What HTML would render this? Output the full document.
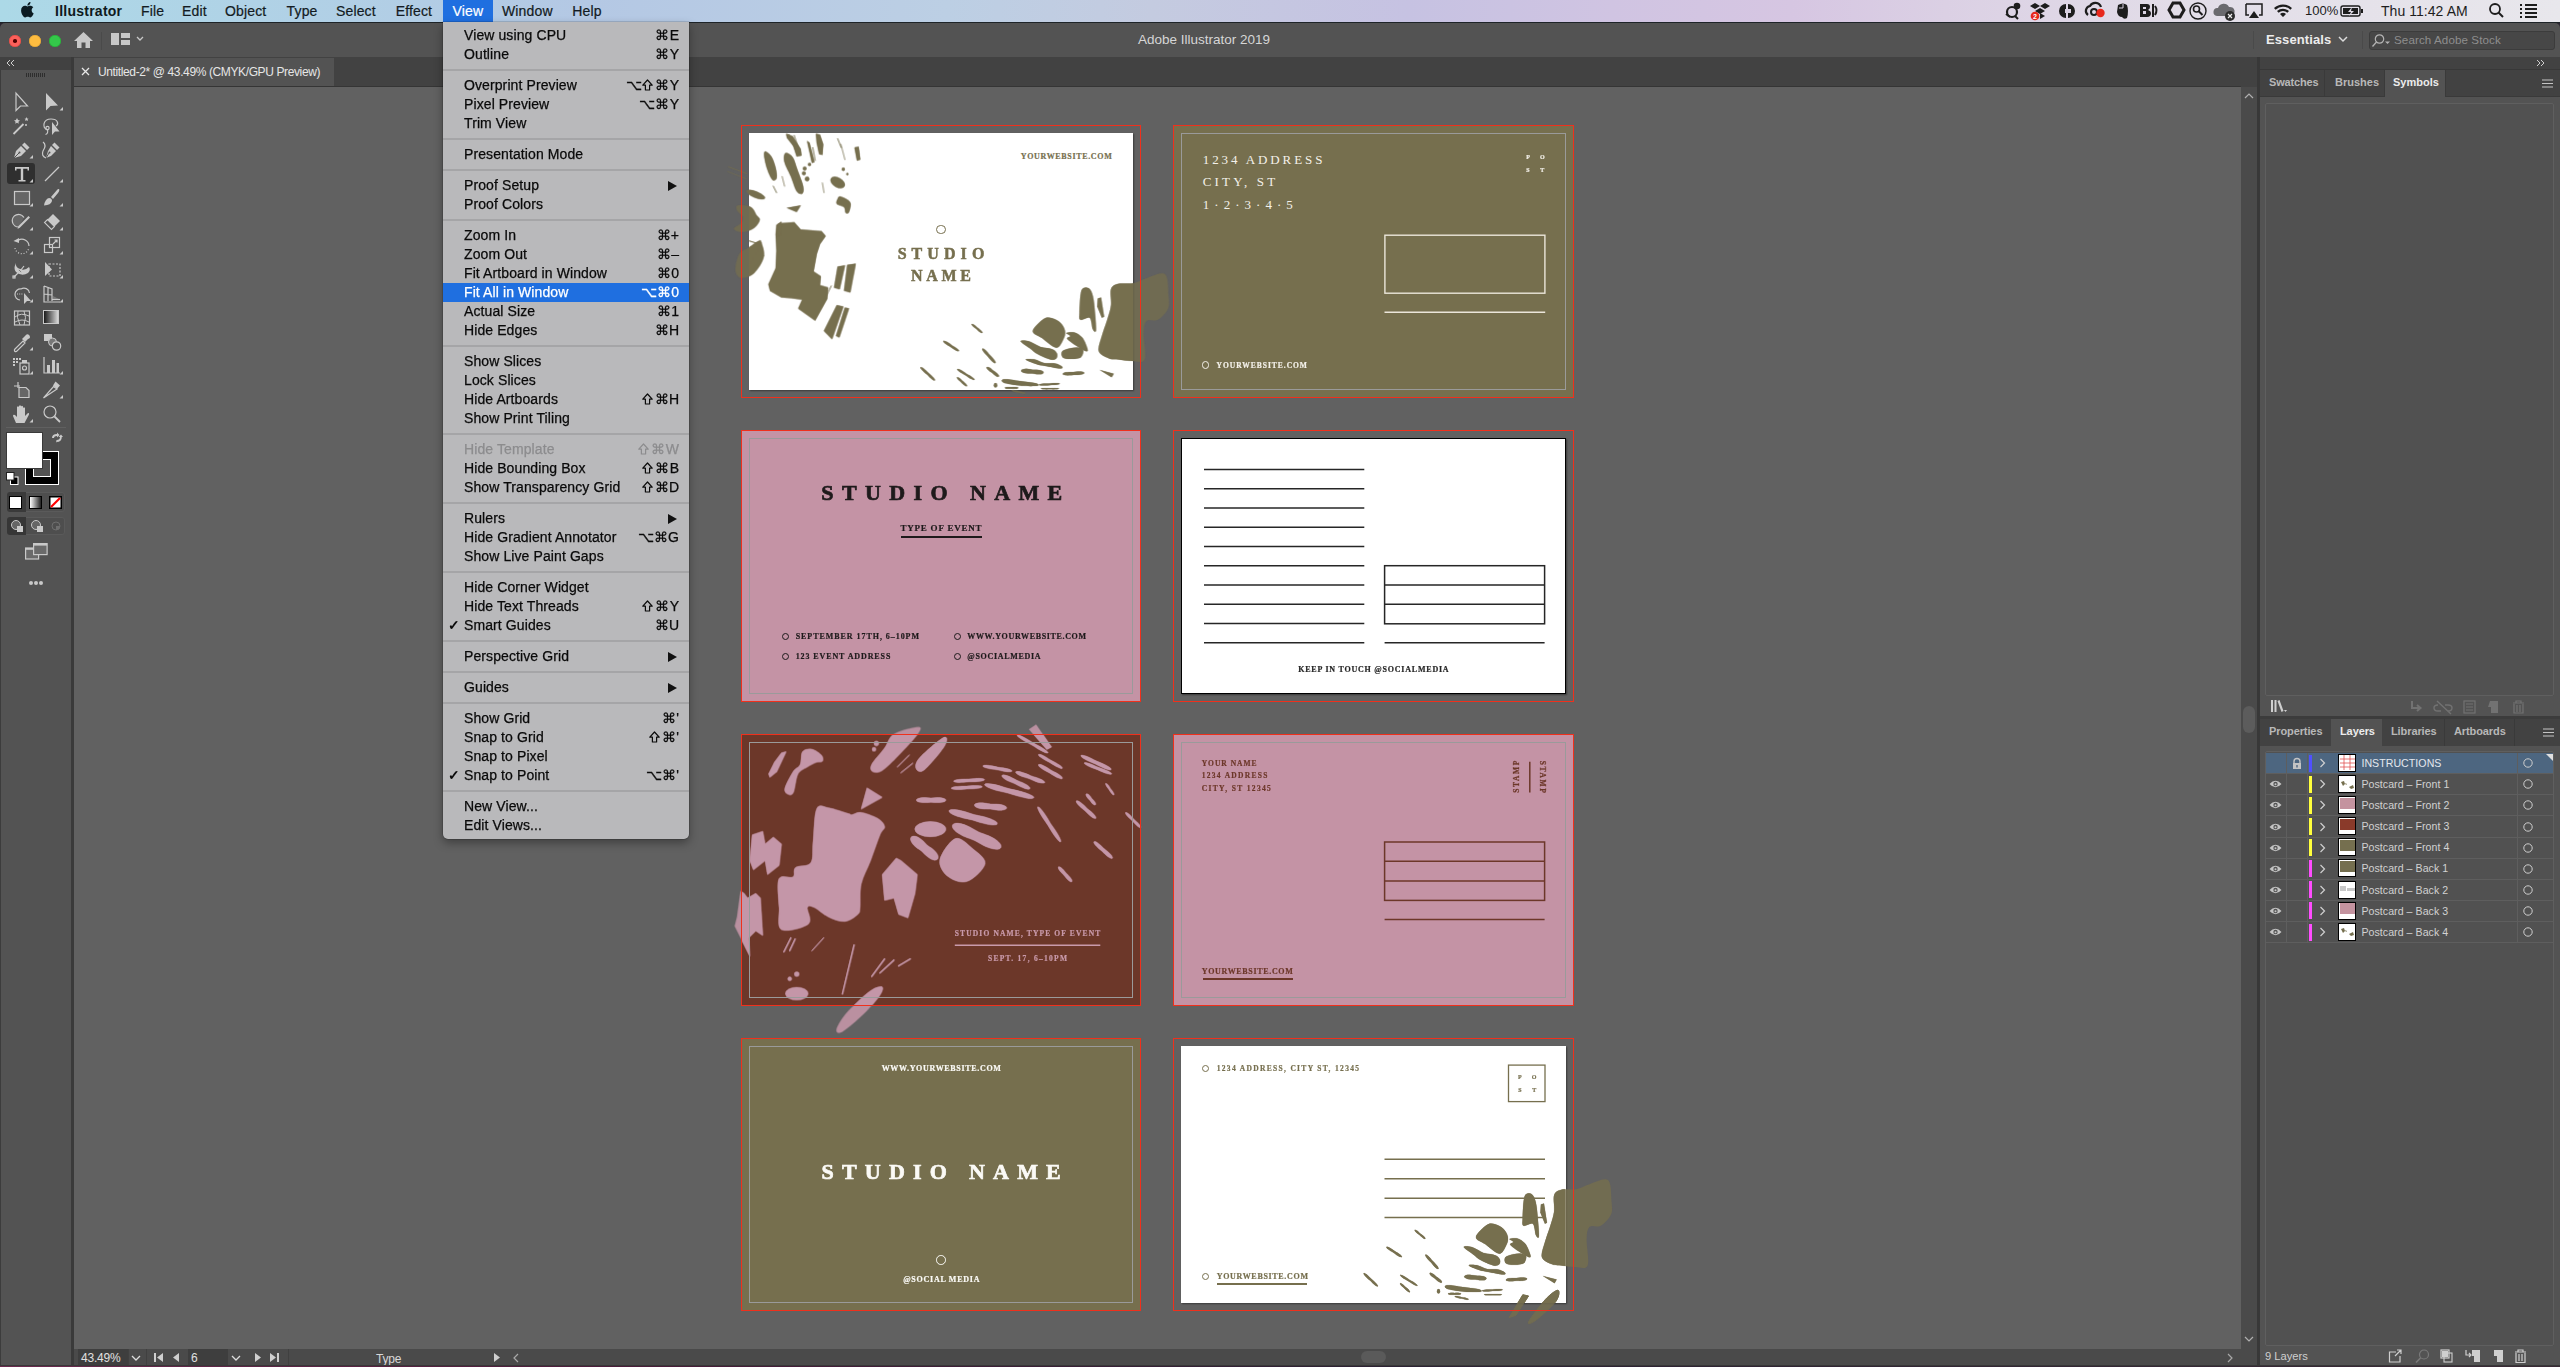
<!DOCTYPE html>
<html><head><meta charset="utf-8">
<style>
*{box-sizing:border-box;margin:0;padding:0}
html,body{width:2560px;height:1367px;overflow:hidden}
body{position:relative;background:#2b2530;font-family:"Liberation Sans",sans-serif;}
.a{position:absolute}
.t{position:absolute;white-space:nowrap}
svg{position:absolute;overflow:visible}
</style></head><body>
<div class="a" style="left:0px;top:22px;width:2560px;height:1px;background:#1e2428;"></div>
<div class="a" style="left:0px;top:23px;width:2560px;height:34px;background:#535353;border-radius:5px 5px 0 0;"></div>
<div class="a" style="left:9px;top:35px;width:12px;height:12px;background:#fc605b;border-radius:50%;box-shadow:inset 0 0 0 0.6px #de4a44;"></div>
<div class="a" style="left:29px;top:35px;width:12px;height:12px;background:#fdbc40;border-radius:50%;box-shadow:inset 0 0 0 0.6px #dea236;"></div>
<div class="a" style="left:49px;top:35px;width:12px;height:12px;background:#34c84a;border-radius:50%;box-shadow:inset 0 0 0 0.6px #27aa36;"></div>
<div class="a" style="left:13.2px;top:39.2px;width:3.6px;height:3.6px;background:#4d0000;border-radius:50%;"></div>
<svg style="left:74px;top:32px" width="19" height="16" viewBox="0 0 19 16"><path d="M9.5 0 L19 9 H16 V16 H11.5 V10.5 H7.5 V16 H3 V9 H0z" fill="#c8c8c8"/></svg>
<div class="a" style="left:101px;top:32px;width:1px;height:18px;background:#4a4a4a;"></div>
<svg style="left:111px;top:33px" width="36" height="14" viewBox="0 0 36 14"><rect x="0" y="0" width="8" height="12" fill="#c8c8c8"/><rect x="10" y="0" width="9" height="5" fill="#c8c8c8"/><rect x="10" y="7" width="9" height="5" fill="#c8c8c8"/><path d="M26 4 l3 3 3-3" fill="none" stroke="#c8c8c8" stroke-width="1.3"/></svg>
<div class="t" style="left:204.00px;width:2000px;text-align:center;top:32.98px;font-size:13.5px;line-height:13.5px;color:#d6d6d6;font-family:'Liberation Sans',sans-serif;font-weight:400;letter-spacing:0px;">Adobe Illustrator 2019</div>
<div class="a" style="left:2253px;top:31px;width:1px;height:18px;background:#4a4a4a;"></div>
<div class="t" style="left:2266px;top:32.74px;font-size:13px;line-height:13px;color:#ececec;font-family:'Liberation Sans',sans-serif;font-weight:700;letter-spacing:0.1px;">Essentials</div>
<svg style="left:2338px;top:36px" width="10" height="7" viewBox="0 0 10 7"><path d="M1 1 l4 4 4-4" fill="none" stroke="#dcdcdc" stroke-width="1.5"/></svg>
<div class="a" style="left:2362px;top:31px;width:1px;height:18px;background:#4a4a4a;"></div>
<div class="a" style="left:2369px;top:31px;width:186px;height:19px;background:#474747;border:1px solid #3c3c3c;border-radius:3px;"></div>
<svg style="left:2371px;top:33px" width="20" height="16" viewBox="0 0 20 16"><circle cx="8.5" cy="6" r="4.2" fill="none" stroke="#b4b4b4" stroke-width="1.2"/><path d="M5.5 9 L1.5 13.5" stroke="#b4b4b4" stroke-width="1.3"/><path d="M14 8.5 h5 l-2.5 2.5z" fill="#b4b4b4"/></svg>
<div class="t" style="left:2394px;top:34.47px;font-size:11.6px;line-height:11.6px;color:#8e8e8e;font-family:'Liberation Sans',sans-serif;font-weight:400;letter-spacing:0.1px;">Search Adobe Stock</div>
<div class="a" style="left:74px;top:57px;width:2183px;height:30px;background:#424242;"></div>
<div class="a" style="left:74px;top:86px;width:2167px;height:1px;background:#353535;"></div>
<div class="a" style="left:74px;top:58px;width:260px;height:28px;background:#535353;"></div>
<svg style="left:81px;top:67px" width="9" height="9" viewBox="0 0 9 9"><path d="M1 1 L8 8 M8 1 L1 8" stroke="#e8e8e8" stroke-width="1.3"/></svg>
<div class="t" style="left:98px;top:65.76px;font-size:12px;line-height:12px;color:#e6e6e6;font-family:'Liberation Sans',sans-serif;font-weight:400;letter-spacing:-0.38px;">Untitled-2* @ 43.49% (CMYK/GPU Preview)</div>
<div class="a" style="left:74px;top:87px;width:2167px;height:1262px;background:#616161;"></div>
<div class="a" style="left:2241px;top:87px;width:16px;height:1262px;background:#4a4a4a;"></div>
<svg style="left:2244px;top:92px" width="10" height="7" viewBox="0 0 10 7"><path d="M1 6 l4-4 4 4" fill="none" stroke="#b0b0b0" stroke-width="1.2"/></svg>
<svg style="left:2244px;top:1336px" width="10" height="7" viewBox="0 0 10 7"><path d="M1 1 l4 4 4-4" fill="none" stroke="#b0b0b0" stroke-width="1.2"/></svg>
<div class="a" style="left:2243px;top:706px;width:12px;height:27px;background:#5c5c5c;border-radius:6px;"></div>
<div class="a" style="left:2257px;top:57px;width:3px;height:1308px;background:#383838;"></div>
<div class="a" style="left:74px;top:1349px;width:2183px;height:16px;background:#4a4a4a;"></div>
<div class="a" style="left:78px;top:1349px;width:50px;height:16px;background:#3e3e3e;"></div>
<div class="t" style="left:81px;top:1352.00px;font-size:12px;line-height:12px;color:#e0e0e0;font-family:'Liberation Sans',sans-serif;font-weight:400;letter-spacing:-0.2px;">43.49%</div>
<svg style="left:131px;top:1355px" width="10" height="7" viewBox="0 0 10 7"><path d="M1 1 l4 4 4-4" fill="none" stroke="#dcdcdc" stroke-width="1.3"/></svg>
<div class="a" style="left:128px;top:1349px;width:1px;height:16px;background:#404040;"></div>
<div class="a" style="left:146px;top:1349px;width:1px;height:16px;background:#404040;"></div>
<svg style="left:154px;top:1353px" width="30" height="10" viewBox="0 0 30 10"><rect x="0" y="0" width="2" height="9" fill="#cfcfcf"/><path d="M9 0 v9 l-6-4.5z" fill="#cfcfcf"/><path d="M25 0 v9 l-6-4.5z" fill="#cfcfcf"/></svg>
<div class="a" style="left:188px;top:1349px;width:40px;height:16px;background:#3e3e3e;"></div>
<div class="t" style="left:191px;top:1352.00px;font-size:12px;line-height:12px;color:#e0e0e0;font-family:'Liberation Sans',sans-serif;font-weight:400;letter-spacing:0px;">6</div>
<svg style="left:231px;top:1355px" width="10" height="7" viewBox="0 0 10 7"><path d="M1 1 l4 4 4-4" fill="none" stroke="#dcdcdc" stroke-width="1.3"/></svg>
<svg style="left:255px;top:1353px" width="30" height="10" viewBox="0 0 30 10"><path d="M0 0 v9 l6-4.5z" fill="#cfcfcf"/><path d="M15 0 v9 l6-4.5z" fill="#cfcfcf"/><rect x="22" y="0" width="2" height="9" fill="#cfcfcf"/></svg>
<div class="a" style="left:288px;top:1349px;width:1px;height:16px;background:#404040;"></div>
<div class="t" style="left:376px;top:1352.50px;font-size:12px;line-height:12px;color:#d8d8d8;font-family:'Liberation Sans',sans-serif;font-weight:400;letter-spacing:-0.2px;">Type</div>
<svg style="left:494px;top:1353px" width="8" height="10" viewBox="0 0 8 10"><path d="M0 0 v9 l6-4.5z" fill="#cfcfcf"/></svg>
<svg style="left:512px;top:1353px" width="8" height="10" viewBox="0 0 8 10"><path d="M6 1 L2 5 L6 9" fill="none" stroke="#a8a8a8" stroke-width="1.2"/></svg>
<div class="a" style="left:1361px;top:1351px;width:25px;height:12px;background:#5a5a5a;border-radius:6px;"></div>
<svg style="left:2226px;top:1353px" width="8" height="10" viewBox="0 0 8 10"><path d="M2 1 L6 5 L2 9" fill="none" stroke="#a8a8a8" stroke-width="1.2"/></svg>
<div class="a" style="left:0px;top:1365px;width:2560px;height:1px;background:#383838;"></div>
<div class="a" style="left:0px;top:1366px;width:2560px;height:1px;background:linear-gradient(90deg,#6a2a4e 0%,#4a1c3a 25%,#2c2234 55%,#3a2a36 100%);"></div>
<div class="a" style="left:74px;top:87px;width:2167px;height:1262px;overflow:hidden">
<div class="a" style="left:-74px;top:-87px;width:2560px;height:1367px">

<div class="a" style="left:749px;top:133px;width:384px;height:257px;background:#fff;box-shadow:1px 1px 1.5px rgba(0,0,0,.4);"></div>
<div class="a" style="left:1173px;top:125px;width:401px;height:273px;background:#766f4e;"></div>
<div class="a" style="left:741px;top:430px;width:400px;height:272px;background:#c493a5;"></div>
<div class="a" style="left:1181px;top:438px;width:385px;height:256px;background:#fff;box-shadow:1px 1px 1.5px rgba(0,0,0,.4);border:1.6px solid #000;"></div>
<div class="a" style="left:741px;top:734px;width:400px;height:272px;background:#6c3729;"></div>
<div class="a" style="left:1173px;top:734px;width:401px;height:272px;background:#c493a5;"></div>
<div class="a" style="left:741px;top:1038px;width:400px;height:273px;background:#766f4e;"></div>
<div class="a" style="left:1181px;top:1046px;width:385px;height:257px;background:#fff;box-shadow:1px 1px 1.5px rgba(0,0,0,.4);"></div>
<svg class="a" style="left:0;top:0" width="2560" height="1367" viewBox="0 0 2560 1367">
<defs><clipPath id="cp1"><rect x="749" y="133" width="384" height="257"/></clipPath>
<clipPath id="cp8"><rect x="1181" y="1046" width="384" height="257"/></clipPath>
<clipPath id="cp5"><rect x="741" y="734" width="400" height="272"/></clipPath></defs>
<g opacity="0.75"><g transform="translate(725,125) scale(0.160966)" fill="#766f4e" stroke="#766f4e" ><path d="M320,620 L345,610 L430,605 L470,650 L600,660 L625,690 L590,740 L570,800 L550,910 L595,940 L590,995 L640,1010 L635,1080 L560,1215 L455,1140 L480,1085 L410,1075 L350,1070 L280,1030 L270,990 L315,890 L320,780 L315,680Z"/><path d="M250,165 C257.5,165.0 279.2,182.5 290,200 C300.8,217.5 310.0,248.3 315,270 C320.0,291.7 323.3,318.3 320,330 C316.7,341.7 304.2,348.3 295,340 C285.8,331.7 273.3,303.3 265,280 C256.7,256.7 247.5,219.2 245,200 C242.5,180.8 242.5,165.0 250,165Z"/><path d="M375,175 C383.3,170.0 407.5,182.5 420,200 C432.5,217.5 439.2,250.0 450,280 C460.8,310.0 480.0,355.8 485,380 C490.0,404.2 486.7,420.0 480,425 C473.3,430.0 456.7,427.5 445,410 C433.3,392.5 422.5,350.0 410,320 C397.5,290.0 375.8,254.2 370,230 C364.2,205.8 366.7,180.0 375,175Z"/><path d="M380,55 L420,70 L470,150 L475,190 L445,195 L425,130 L385,80Z"/><path d="M565,55 L590,60 L610,120 L605,185 L585,180 L570,110Z"/><path d="M510,100 L525,110 L555,230 L540,235Z"/><path d="M805,140 L830,135 L840,215 L820,220Z"/><circle cx="495" cy="270" r="11"/><circle cx="490" cy="300" r="11"/><circle cx="510" cy="335" r="13"/><circle cx="525" cy="245" r="9"/><circle cx="735" cy="275" r="9"/><circle cx="760" cy="305" r="6"/><ellipse cx="700" cy="357" rx="48" ry="29" transform="rotate(30 700 357)"/><path d="M715,445 C725.0,445.8 749.2,457.5 760,465 C770.8,472.5 778.3,477.5 780,490 C781.7,502.5 775.0,530.8 770,540 C765.0,549.2 755.0,550.0 750,545 C745.0,540.0 749.2,519.2 740,510 C730.8,500.8 701.7,498.3 695,490 C688.3,481.7 696.7,467.5 700,460 C703.3,452.5 705.0,444.2 715,445Z"/><ellipse cx="190" cy="432" rx="62" ry="19" transform="rotate(22 190 432)"/><path d="M80,500 C94.2,496.7 140.8,500.0 160,510 C179.2,520.0 185.8,546.7 195,560 C204.2,573.3 217.5,576.7 215,590 C212.5,603.3 197.5,627.5 180,640 C162.5,652.5 130.8,664.2 110,665 C89.2,665.8 56.7,654.2 55,645 C53.3,635.8 90.8,622.5 100,610 C109.2,597.5 114.2,583.3 110,570 C105.8,556.7 80.0,541.7 75,530 C70.0,518.3 65.8,503.3 80,500Z"/><path d="M150,760 C170.0,746.7 197.5,725.0 210,720 C222.5,715.0 220.0,713.3 225,730 C230.0,746.7 247.5,788.3 240,820 C232.5,851.7 203.3,898.3 180,920 C156.7,941.7 119.2,953.3 100,950 C80.8,946.7 66.7,925.0 65,900 C63.3,875.0 75.8,823.3 90,800 C104.2,776.7 130.0,773.3 150,760Z"/><path d="M22,260 L135,302" stroke-width="6" stroke-linecap="round" fill="none"/><path d="M18,290 L130,333" stroke-width="5" stroke-linecap="round" fill="none"/><path d="M700,880 L745,872 L712,1020 L678,1010Z"/><path d="M760,870 L812,862 L778,1040 L740,1030Z"/><path d="M695,1120 L735,1128 L665,1330 L615,1280Z"/><path d="M745,1135 L770,1140 L710,1320 L690,1310Z"/><path d="M385,515 L470,500 L445,540Z"/><path d="M330,615 L350,600 L345,680 L325,690Z"/><path d="M395,60 L455,185" stroke-width="5" stroke-linecap="round" fill="none"/><path d="M430,65 L465,175" stroke-width="4" stroke-linecap="round" fill="none"/><path d="M700,85 L722,140" stroke-width="4" stroke-linecap="round" fill="none"/><path d="M720,120 L745,215" stroke-width="3" stroke-linecap="round" fill="none"/><path d="M545,140 L560,220" stroke-width="4" stroke-linecap="round" fill="none"/><path d="M150,720 L215,740" stroke-width="5" stroke-linecap="round" fill="none"/><path d="M150,870 L225,735" stroke-width="5" stroke-linecap="round" fill="none"/><path d="M165,905 L240,810" stroke-width="4" stroke-linecap="round" fill="none"/><path d="M600,1120 L660,1000" stroke-width="4" stroke-linecap="round" fill="none"/><path d="M300,380 L320,420" stroke-width="4" stroke-linecap="round" fill="none"/><path d="M355,320 L370,380" stroke-width="3" stroke-linecap="round" fill="none"/><path d="M605,360 L615,420" stroke-width="3" stroke-linecap="round" fill="none"/></g><g transform="translate(910,270) scale(0.101564)" fill="#766f4e" stroke="#766f4e" ><path d="M1210,600 C1213.3,568.3 1288.3,500.8 1320,480 C1351.7,459.2 1373.3,468.3 1400,475 C1426.7,481.7 1459.2,499.2 1480,520 C1500.8,540.8 1520.0,573.3 1525,600 C1530.0,626.7 1524.2,652.5 1510,680 C1495.8,707.5 1475.0,766.7 1440,765 C1405.0,763.3 1338.3,697.5 1300,670 C1261.7,642.5 1206.7,631.7 1210,600Z"/><path d="M1540,620 C1546.7,614.2 1595.0,608.3 1620,615 C1645.0,621.7 1671.7,640.8 1690,660 C1708.3,679.2 1720.8,706.7 1730,730 C1739.2,753.3 1756.7,795.0 1745,800 C1733.3,805.0 1692.5,780.0 1660,760 C1627.5,740.0 1563.3,698.3 1550,680 C1536.7,661.7 1581.7,660.0 1580,650 C1578.3,640.0 1533.3,625.8 1540,620Z"/><path d="M1500,800 C1512.5,785.0 1553.3,775.8 1580,770 C1606.7,764.2 1639.2,761.7 1660,765 C1680.8,768.3 1701.7,774.2 1705,790 C1708.3,805.8 1700.8,845.8 1680,860 C1659.2,874.2 1609.2,875.0 1580,875 C1550.8,875.0 1518.3,872.5 1505,860 C1491.7,847.5 1487.5,815.0 1500,800Z"/><path d="M1090,700 C1088.3,688.3 1141.7,692.5 1170,700 C1198.3,707.5 1238.3,735.0 1260,745 C1281.7,755.0 1276.7,754.2 1300,760 C1323.3,765.8 1375.8,770.0 1400,780 C1424.2,790.0 1438.3,805.0 1445,820 C1451.7,835.0 1450.8,860.0 1440,870 C1429.2,880.0 1410.0,886.7 1380,880 C1350.0,873.3 1293.3,848.3 1260,830 C1226.7,811.7 1208.3,791.7 1180,770 C1151.7,748.3 1091.7,711.7 1090,700Z"/><path d="M1140,880 C1138.3,872.5 1200.0,874.2 1230,880 C1260.0,885.8 1286.7,908.3 1320,915 C1353.3,921.7 1400.8,914.2 1430,920 C1459.2,925.8 1486.7,941.7 1495,950 C1503.3,958.3 1507.5,970.8 1480,970 C1452.5,969.2 1370.0,952.5 1330,945 C1290.0,937.5 1271.7,935.8 1240,925 C1208.3,914.2 1141.7,887.5 1140,880Z"/><path d="M1314.6,1009.6 C1314.2,1013.6 1310.8,1017.9 1305.2,1020.7 C1299.6,1023.6 1290.7,1025.9 1280.7,1026.7 C1270.7,1027.5 1257.9,1027.1 1245.0,1025.8 C1232.1,1024.5 1217.3,1020.3 1203.3,1019.1 C1189.3,1017.9 1174.0,1019.5 1161.1,1018.5 C1148.2,1017.5 1135.5,1015.7 1125.8,1013.1 C1116.1,1010.5 1107.8,1006.8 1102.7,1003.0 C1097.6,999.2 1095.1,994.4 1095.4,990.4 C1095.8,986.4 1099.2,982.1 1104.8,979.3 C1110.4,976.4 1119.3,974.1 1129.3,973.3 C1139.3,972.4 1152.1,972.9 1165.0,974.2 C1177.9,975.5 1192.7,979.7 1206.7,980.9 C1220.7,982.1 1236.0,980.5 1248.9,981.5 C1261.8,982.5 1274.5,984.3 1284.2,986.9 C1293.9,989.5 1302.2,993.2 1307.3,997.0 C1312.4,1000.8 1314.9,1005.6 1314.6,1009.6Z"/><path d="M1714.9,1012.5 C1715.1,1015.5 1712.3,1019.0 1707.3,1021.8 C1702.3,1024.6 1694.3,1027.3 1684.9,1029.1 C1675.5,1030.9 1663.3,1032.0 1651.0,1032.6 C1638.7,1033.1 1624.2,1031.7 1610.8,1032.4 C1597.4,1033.1 1583.1,1036.1 1570.7,1036.8 C1558.3,1037.5 1546.1,1037.6 1536.6,1036.8 C1527.1,1036.0 1518.8,1034.2 1513.6,1032.0 C1508.3,1029.8 1505.2,1026.5 1505.1,1023.5 C1504.9,1020.5 1507.7,1017.0 1512.7,1014.2 C1517.7,1011.4 1525.7,1008.7 1535.1,1006.9 C1544.5,1005.1 1556.7,1003.9 1569.0,1003.4 C1581.3,1002.9 1595.8,1004.3 1609.2,1003.6 C1622.6,1002.9 1636.9,999.9 1649.3,999.2 C1661.7,998.5 1673.9,998.4 1683.4,999.2 C1692.9,1000.0 1701.2,1001.8 1706.4,1004.0 C1711.7,1006.2 1714.8,1009.5 1714.9,1012.5Z"/><path d="M905,1085 C906.7,1078.3 917.5,1073.3 950,1075 C982.5,1076.7 1051.7,1088.3 1100,1095 C1148.3,1101.7 1214.2,1107.5 1240,1115 C1265.8,1122.5 1278.3,1135.8 1255,1140 C1231.7,1144.2 1152.5,1144.2 1100,1140 C1047.5,1135.8 972.5,1124.2 940,1115 C907.5,1105.8 903.3,1091.7 905,1085Z"/><path d="M1473.9,1119.7 C1474.0,1121.4 1471.3,1123.6 1466.4,1125.3 C1461.5,1127.0 1453.7,1128.8 1444.5,1130.0 C1435.3,1131.2 1423.5,1132.1 1411.5,1132.7 C1399.5,1133.3 1385.4,1132.7 1372.4,1133.4 C1359.4,1134.1 1345.5,1136.1 1333.5,1136.8 C1321.5,1137.5 1309.6,1137.8 1300.4,1137.5 C1291.2,1137.2 1283.2,1136.3 1278.2,1135.1 C1273.2,1133.9 1270.2,1132.0 1270.1,1130.3 C1270.0,1128.6 1272.7,1126.4 1277.6,1124.7 C1282.5,1123.0 1290.3,1121.2 1299.5,1120.0 C1308.7,1118.8 1320.5,1117.9 1332.5,1117.3 C1344.5,1116.7 1358.6,1117.3 1371.6,1116.6 C1384.6,1115.9 1398.5,1113.9 1410.5,1113.2 C1422.5,1112.5 1434.4,1112.2 1443.6,1112.5 C1452.8,1112.8 1460.8,1113.7 1465.8,1114.9 C1470.8,1116.1 1473.8,1118.0 1473.9,1119.7Z"/><path d="M1065.0,1160.0 C1065.0,1161.7 1063.3,1163.8 1060.1,1165.2 C1056.9,1166.7 1051.9,1168.0 1046.0,1168.7 C1040.1,1169.5 1032.6,1169.8 1024.9,1169.7 C1017.2,1169.7 1008.3,1168.4 1000.0,1168.4 C991.7,1168.4 982.8,1169.7 975.1,1169.7 C967.4,1169.8 959.9,1169.5 954.0,1168.7 C948.1,1168.0 943.1,1166.7 939.9,1165.2 C936.7,1163.8 935.0,1161.7 935.0,1160.0 C935.0,1158.3 936.7,1156.2 939.9,1154.8 C943.1,1153.3 948.1,1152.0 954.0,1151.3 C959.9,1150.5 967.4,1150.2 975.1,1150.3 C982.8,1150.3 991.7,1151.6 1000.0,1151.6 C1008.3,1151.6 1017.2,1150.3 1024.9,1150.3 C1032.6,1150.2 1040.1,1150.5 1046.0,1151.3 C1051.9,1152.0 1056.9,1153.3 1060.1,1154.8 C1063.3,1156.2 1065.0,1158.3 1065.0,1160.0Z"/><path d="M1466.0,1168.0 C1466.0,1169.2 1463.6,1170.7 1459.3,1171.7 C1455.0,1172.7 1448.1,1173.7 1440.2,1174.2 C1432.3,1174.8 1422.1,1175.0 1411.7,1175.0 C1401.3,1175.0 1389.2,1174.0 1378.0,1174.0 C1366.8,1174.0 1354.7,1175.0 1344.3,1175.0 C1333.9,1175.0 1323.7,1174.8 1315.8,1174.2 C1307.9,1173.7 1301.0,1172.7 1296.7,1171.7 C1292.4,1170.7 1290.0,1169.2 1290.0,1168.0 C1290.0,1166.8 1292.4,1165.3 1296.7,1164.3 C1301.0,1163.3 1307.9,1162.3 1315.8,1161.8 C1323.7,1161.2 1333.9,1161.0 1344.3,1161.0 C1354.7,1161.0 1366.8,1162.0 1378.0,1162.0 C1389.2,1162.0 1401.3,1161.0 1411.7,1161.0 C1422.1,1161.0 1432.3,1161.2 1440.2,1161.8 C1448.1,1162.3 1455.0,1163.3 1459.3,1164.3 C1463.6,1165.3 1466.0,1166.8 1466.0,1168.0Z"/><path d="M712.1,618.7 C711.0,620.0 708.3,620.4 704.8,619.4 C701.3,618.4 696.4,616.0 691.2,612.6 C686.0,609.2 679.8,604.4 673.7,599.2 C667.6,594.0 661.2,587.0 654.6,581.4 C648.0,575.8 640.0,570.8 633.8,565.7 C627.6,560.6 621.7,555.3 617.5,550.8 C613.3,546.3 610.1,541.9 608.5,538.6 C606.9,535.4 606.8,532.6 607.9,531.3 C609.0,530.0 611.7,529.6 615.2,530.6 C618.7,531.6 623.6,534.0 628.8,537.4 C634.0,540.8 640.2,545.6 646.3,550.8 C652.4,556.0 658.8,563.0 665.4,568.6 C672.0,574.2 680.0,579.2 686.2,584.3 C692.4,589.4 698.3,594.7 702.5,599.2 C706.7,603.7 709.9,608.1 711.5,611.4 C713.1,614.6 713.2,617.4 712.1,618.7Z"/><path d="M480.5,797.0 C479.4,798.8 475.9,799.5 471.3,798.6 C466.7,797.7 459.9,795.2 452.6,791.6 C445.3,788.0 436.3,782.5 427.4,776.7 C418.5,770.9 409.0,762.9 399.4,756.6 C389.8,750.4 378.6,744.9 369.7,739.2 C360.8,733.5 352.1,727.4 345.8,722.2 C339.5,717.0 334.5,711.9 331.8,708.0 C329.1,704.1 328.4,700.8 329.5,699.0 C330.6,697.2 334.1,696.5 338.7,697.4 C343.3,698.3 350.1,700.8 357.4,704.4 C364.7,708.0 373.7,713.5 382.6,719.3 C391.5,725.1 401.0,733.1 410.6,739.4 C420.2,745.6 431.4,751.1 440.3,756.8 C449.2,762.5 457.9,768.6 464.2,773.8 C470.5,779.0 475.5,784.1 478.2,788.0 C480.9,791.9 481.6,795.2 480.5,797.0Z"/><path d="M840.6,915.6 C838.9,917.2 835.1,917.0 830.5,914.9 C825.9,912.8 819.6,908.6 813.1,902.9 C806.6,897.2 798.9,889.3 791.5,880.9 C784.1,872.5 776.6,861.6 768.5,852.6 C760.4,843.6 750.4,835.1 742.9,826.8 C735.4,818.5 728.2,810.0 723.2,803.0 C718.2,796.0 714.6,789.3 713.0,784.5 C711.4,779.7 711.6,776.0 713.4,774.4 C715.1,772.8 718.9,773.0 723.5,775.1 C728.1,777.2 734.4,781.4 740.9,787.1 C747.4,792.8 755.1,800.7 762.5,809.1 C769.9,817.5 777.4,828.4 785.5,837.4 C793.6,846.4 803.6,854.9 811.1,863.2 C818.6,871.5 825.8,880.0 830.8,887.0 C835.8,894.0 839.4,900.7 841.0,905.5 C842.6,910.3 842.4,914.0 840.6,915.6Z"/><path d="M874.1,1048.2 C872.6,1050.2 869.2,1051.1 865.0,1050.5 C860.8,1049.9 855.1,1047.8 849.1,1044.5 C843.1,1041.2 835.9,1036.1 829.0,1030.6 C822.1,1025.1 815.1,1017.4 807.6,1011.5 C800.1,1005.6 790.8,1000.7 783.8,995.3 C776.8,989.9 770.2,984.2 765.5,979.2 C760.8,974.2 757.4,969.1 755.8,965.2 C754.2,961.3 754.4,957.8 755.9,955.8 C757.4,953.8 760.8,952.9 765.0,953.5 C769.2,954.1 774.9,956.2 780.9,959.5 C786.9,962.8 794.1,967.9 801.0,973.4 C807.9,978.9 814.9,986.6 822.4,992.5 C829.9,998.4 839.2,1003.3 846.2,1008.7 C853.2,1014.1 859.8,1019.8 864.5,1024.8 C869.2,1029.8 872.6,1034.9 874.2,1038.8 C875.8,1042.7 875.6,1046.2 874.1,1048.2Z"/><path d="M244.5,1086.8 C243.1,1088.3 239.5,1088.4 234.9,1086.5 C230.3,1084.6 223.8,1080.8 216.9,1075.6 C210.0,1070.4 201.7,1063.1 193.5,1055.4 C185.3,1047.7 176.9,1037.8 168.0,1029.5 C159.1,1021.2 148.5,1013.5 140.3,1005.9 C132.1,998.3 124.2,990.4 118.6,983.9 C113.0,977.4 108.7,971.2 106.5,966.8 C104.3,962.3 104.1,958.8 105.5,957.2 C106.9,955.7 110.5,955.6 115.1,957.5 C119.7,959.4 126.2,963.2 133.1,968.4 C140.0,973.6 148.3,980.9 156.5,988.6 C164.7,996.3 173.1,1006.2 182.0,1014.5 C190.9,1022.8 201.5,1030.5 209.7,1038.1 C217.9,1045.7 225.8,1053.6 231.4,1060.1 C237.0,1066.6 241.3,1072.8 243.5,1077.2 C245.7,1081.7 245.9,1085.2 244.5,1086.8Z"/><path d="M634.8,1081.0 C633.8,1082.6 630.4,1083.0 625.4,1081.7 C620.4,1080.4 613.1,1077.5 605.0,1073.4 C596.9,1069.3 586.9,1063.4 576.9,1057.1 C566.9,1050.8 556.0,1042.3 545.2,1035.6 C534.4,1028.8 522.0,1022.8 512.0,1016.6 C502.0,1010.4 492.3,1004.0 485.1,998.5 C477.9,993.0 472.0,987.7 468.7,983.8 C465.4,979.9 464.2,976.6 465.2,975.0 C466.2,973.4 469.6,973.0 474.6,974.3 C479.6,975.6 486.9,978.5 495.0,982.6 C503.1,986.7 513.1,992.6 523.1,998.9 C533.1,1005.2 544.0,1013.6 554.8,1020.4 C565.6,1027.2 578.0,1033.2 588.0,1039.4 C598.0,1045.6 607.7,1052.0 614.9,1057.5 C622.1,1063.0 628.0,1068.3 631.3,1072.2 C634.6,1076.1 635.8,1079.4 634.8,1081.0Z"/><path d="M560.3,1143.5 C559.0,1144.9 556.3,1145.3 552.9,1144.3 C549.5,1143.3 544.8,1141.0 539.9,1137.7 C535.0,1134.4 529.1,1129.6 523.5,1124.4 C517.9,1119.2 512.2,1112.2 506.0,1106.7 C499.8,1101.2 492.2,1096.2 486.5,1091.1 C480.8,1086.0 475.4,1080.7 471.6,1076.2 C467.8,1071.7 464.9,1067.3 463.6,1064.0 C462.3,1060.7 462.4,1057.9 463.7,1056.5 C464.9,1055.1 467.7,1054.7 471.1,1055.7 C474.5,1056.7 479.2,1059.0 484.1,1062.3 C489.0,1065.6 494.9,1070.4 500.5,1075.6 C506.1,1080.8 511.8,1087.8 518.0,1093.3 C524.2,1098.8 531.8,1103.8 537.5,1108.9 C543.2,1114.0 548.6,1119.3 552.4,1123.8 C556.2,1128.3 559.1,1132.7 560.4,1136.0 C561.7,1139.3 561.5,1142.1 560.3,1143.5Z"/><ellipse cx="842" cy="1135" rx="15" ry="22" transform="rotate(0 842 1135)"/><path d="M1690,200 C1705.0,160.0 1741.7,170.0 1760,180 C1778.3,190.0 1790.0,220.0 1800,260 C1810.0,300.0 1815.0,364.2 1820,420 C1825.0,475.8 1833.3,568.3 1830,595 C1826.7,621.7 1810.0,600.8 1800,580 C1790.0,559.2 1790.0,485.0 1770,470 C1750.0,455.0 1696.7,498.3 1680,490 C1663.3,481.7 1668.3,468.3 1670,420 C1671.7,371.7 1675.0,240.0 1690,200Z"/><path d="M1850,280 L1880,270 L1910,460 L1890,470 L1845,360Z"/><path d="M1980,190 C1991.7,154.2 2013.3,145.0 2050,135 C2086.7,125.0 2153.3,139.2 2200,130 C2246.7,120.8 2278.3,95.0 2330,80 C2381.7,65.0 2474.2,11.7 2510,40 C2545.8,68.3 2540.0,193.3 2545,250 C2550.0,306.7 2557.5,340.0 2540,380 C2522.5,420.0 2475.0,470.0 2440,490 C2405.0,510.0 2353.3,478.3 2330,500 C2306.7,521.7 2303.3,556.7 2300,620 C2296.7,683.3 2328.3,834.2 2310,880 C2291.7,925.8 2233.3,895.0 2190,895 C2146.7,895.0 2088.3,884.2 2050,880 C2011.7,875.8 1991.7,883.3 1960,870 C1928.3,856.7 1871.7,836.7 1860,800 C1848.3,763.3 1876.7,700.0 1890,650 C1903.3,600.0 1925.0,550.0 1940,500 C1955.0,450.0 1973.3,401.7 1980,350 C1986.7,298.3 1968.3,225.8 1980,190Z"/><path d="M1870,985 L2005,1020 L1985,1055Z"/><path d="M1138.5,1214.6 C1138.2,1216.0 1135.9,1217.3 1132.3,1217.8 C1128.7,1218.3 1123.2,1218.3 1116.9,1217.6 C1110.6,1216.9 1102.6,1215.5 1094.5,1213.7 C1086.4,1211.9 1077.2,1208.8 1068.5,1207.0 C1059.8,1205.2 1050.2,1204.3 1042.1,1202.6 C1034.0,1200.9 1026.0,1199.0 1020.0,1197.0 C1014.0,1195.0 1008.9,1192.8 1005.8,1190.9 C1002.7,1189.0 1001.2,1186.9 1001.5,1185.4 C1001.8,1184.0 1004.1,1182.7 1007.7,1182.2 C1011.3,1181.7 1016.8,1181.7 1023.1,1182.4 C1029.4,1183.1 1037.4,1184.5 1045.5,1186.3 C1053.6,1188.1 1062.8,1191.2 1071.5,1193.0 C1080.2,1194.8 1089.8,1195.7 1097.9,1197.4 C1106.0,1199.1 1114.0,1201.0 1120.0,1203.0 C1126.0,1205.0 1131.1,1207.2 1134.2,1209.1 C1137.3,1211.0 1138.8,1213.1 1138.5,1214.6Z"/></g></g>
<g clip-path="url(#cp1)"><g transform="translate(725,125) scale(0.160966)" fill="#766f4e" stroke="#766f4e" ><path d="M320,620 L345,610 L430,605 L470,650 L600,660 L625,690 L590,740 L570,800 L550,910 L595,940 L590,995 L640,1010 L635,1080 L560,1215 L455,1140 L480,1085 L410,1075 L350,1070 L280,1030 L270,990 L315,890 L320,780 L315,680Z"/><path d="M250,165 C257.5,165.0 279.2,182.5 290,200 C300.8,217.5 310.0,248.3 315,270 C320.0,291.7 323.3,318.3 320,330 C316.7,341.7 304.2,348.3 295,340 C285.8,331.7 273.3,303.3 265,280 C256.7,256.7 247.5,219.2 245,200 C242.5,180.8 242.5,165.0 250,165Z"/><path d="M375,175 C383.3,170.0 407.5,182.5 420,200 C432.5,217.5 439.2,250.0 450,280 C460.8,310.0 480.0,355.8 485,380 C490.0,404.2 486.7,420.0 480,425 C473.3,430.0 456.7,427.5 445,410 C433.3,392.5 422.5,350.0 410,320 C397.5,290.0 375.8,254.2 370,230 C364.2,205.8 366.7,180.0 375,175Z"/><path d="M380,55 L420,70 L470,150 L475,190 L445,195 L425,130 L385,80Z"/><path d="M565,55 L590,60 L610,120 L605,185 L585,180 L570,110Z"/><path d="M510,100 L525,110 L555,230 L540,235Z"/><path d="M805,140 L830,135 L840,215 L820,220Z"/><circle cx="495" cy="270" r="11"/><circle cx="490" cy="300" r="11"/><circle cx="510" cy="335" r="13"/><circle cx="525" cy="245" r="9"/><circle cx="735" cy="275" r="9"/><circle cx="760" cy="305" r="6"/><ellipse cx="700" cy="357" rx="48" ry="29" transform="rotate(30 700 357)"/><path d="M715,445 C725.0,445.8 749.2,457.5 760,465 C770.8,472.5 778.3,477.5 780,490 C781.7,502.5 775.0,530.8 770,540 C765.0,549.2 755.0,550.0 750,545 C745.0,540.0 749.2,519.2 740,510 C730.8,500.8 701.7,498.3 695,490 C688.3,481.7 696.7,467.5 700,460 C703.3,452.5 705.0,444.2 715,445Z"/><ellipse cx="190" cy="432" rx="62" ry="19" transform="rotate(22 190 432)"/><path d="M80,500 C94.2,496.7 140.8,500.0 160,510 C179.2,520.0 185.8,546.7 195,560 C204.2,573.3 217.5,576.7 215,590 C212.5,603.3 197.5,627.5 180,640 C162.5,652.5 130.8,664.2 110,665 C89.2,665.8 56.7,654.2 55,645 C53.3,635.8 90.8,622.5 100,610 C109.2,597.5 114.2,583.3 110,570 C105.8,556.7 80.0,541.7 75,530 C70.0,518.3 65.8,503.3 80,500Z"/><path d="M150,760 C170.0,746.7 197.5,725.0 210,720 C222.5,715.0 220.0,713.3 225,730 C230.0,746.7 247.5,788.3 240,820 C232.5,851.7 203.3,898.3 180,920 C156.7,941.7 119.2,953.3 100,950 C80.8,946.7 66.7,925.0 65,900 C63.3,875.0 75.8,823.3 90,800 C104.2,776.7 130.0,773.3 150,760Z"/><path d="M22,260 L135,302" stroke-width="6" stroke-linecap="round" fill="none"/><path d="M18,290 L130,333" stroke-width="5" stroke-linecap="round" fill="none"/><path d="M700,880 L745,872 L712,1020 L678,1010Z"/><path d="M760,870 L812,862 L778,1040 L740,1030Z"/><path d="M695,1120 L735,1128 L665,1330 L615,1280Z"/><path d="M745,1135 L770,1140 L710,1320 L690,1310Z"/><path d="M385,515 L470,500 L445,540Z"/><path d="M330,615 L350,600 L345,680 L325,690Z"/><path d="M395,60 L455,185" stroke-width="5" stroke-linecap="round" fill="none"/><path d="M430,65 L465,175" stroke-width="4" stroke-linecap="round" fill="none"/><path d="M700,85 L722,140" stroke-width="4" stroke-linecap="round" fill="none"/><path d="M720,120 L745,215" stroke-width="3" stroke-linecap="round" fill="none"/><path d="M545,140 L560,220" stroke-width="4" stroke-linecap="round" fill="none"/><path d="M150,720 L215,740" stroke-width="5" stroke-linecap="round" fill="none"/><path d="M150,870 L225,735" stroke-width="5" stroke-linecap="round" fill="none"/><path d="M165,905 L240,810" stroke-width="4" stroke-linecap="round" fill="none"/><path d="M600,1120 L660,1000" stroke-width="4" stroke-linecap="round" fill="none"/><path d="M300,380 L320,420" stroke-width="4" stroke-linecap="round" fill="none"/><path d="M355,320 L370,380" stroke-width="3" stroke-linecap="round" fill="none"/><path d="M605,360 L615,420" stroke-width="3" stroke-linecap="round" fill="none"/></g><g transform="translate(910,270) scale(0.101564)" fill="#766f4e" stroke="#766f4e" ><path d="M1210,600 C1213.3,568.3 1288.3,500.8 1320,480 C1351.7,459.2 1373.3,468.3 1400,475 C1426.7,481.7 1459.2,499.2 1480,520 C1500.8,540.8 1520.0,573.3 1525,600 C1530.0,626.7 1524.2,652.5 1510,680 C1495.8,707.5 1475.0,766.7 1440,765 C1405.0,763.3 1338.3,697.5 1300,670 C1261.7,642.5 1206.7,631.7 1210,600Z"/><path d="M1540,620 C1546.7,614.2 1595.0,608.3 1620,615 C1645.0,621.7 1671.7,640.8 1690,660 C1708.3,679.2 1720.8,706.7 1730,730 C1739.2,753.3 1756.7,795.0 1745,800 C1733.3,805.0 1692.5,780.0 1660,760 C1627.5,740.0 1563.3,698.3 1550,680 C1536.7,661.7 1581.7,660.0 1580,650 C1578.3,640.0 1533.3,625.8 1540,620Z"/><path d="M1500,800 C1512.5,785.0 1553.3,775.8 1580,770 C1606.7,764.2 1639.2,761.7 1660,765 C1680.8,768.3 1701.7,774.2 1705,790 C1708.3,805.8 1700.8,845.8 1680,860 C1659.2,874.2 1609.2,875.0 1580,875 C1550.8,875.0 1518.3,872.5 1505,860 C1491.7,847.5 1487.5,815.0 1500,800Z"/><path d="M1090,700 C1088.3,688.3 1141.7,692.5 1170,700 C1198.3,707.5 1238.3,735.0 1260,745 C1281.7,755.0 1276.7,754.2 1300,760 C1323.3,765.8 1375.8,770.0 1400,780 C1424.2,790.0 1438.3,805.0 1445,820 C1451.7,835.0 1450.8,860.0 1440,870 C1429.2,880.0 1410.0,886.7 1380,880 C1350.0,873.3 1293.3,848.3 1260,830 C1226.7,811.7 1208.3,791.7 1180,770 C1151.7,748.3 1091.7,711.7 1090,700Z"/><path d="M1140,880 C1138.3,872.5 1200.0,874.2 1230,880 C1260.0,885.8 1286.7,908.3 1320,915 C1353.3,921.7 1400.8,914.2 1430,920 C1459.2,925.8 1486.7,941.7 1495,950 C1503.3,958.3 1507.5,970.8 1480,970 C1452.5,969.2 1370.0,952.5 1330,945 C1290.0,937.5 1271.7,935.8 1240,925 C1208.3,914.2 1141.7,887.5 1140,880Z"/><path d="M1314.6,1009.6 C1314.2,1013.6 1310.8,1017.9 1305.2,1020.7 C1299.6,1023.6 1290.7,1025.9 1280.7,1026.7 C1270.7,1027.5 1257.9,1027.1 1245.0,1025.8 C1232.1,1024.5 1217.3,1020.3 1203.3,1019.1 C1189.3,1017.9 1174.0,1019.5 1161.1,1018.5 C1148.2,1017.5 1135.5,1015.7 1125.8,1013.1 C1116.1,1010.5 1107.8,1006.8 1102.7,1003.0 C1097.6,999.2 1095.1,994.4 1095.4,990.4 C1095.8,986.4 1099.2,982.1 1104.8,979.3 C1110.4,976.4 1119.3,974.1 1129.3,973.3 C1139.3,972.4 1152.1,972.9 1165.0,974.2 C1177.9,975.5 1192.7,979.7 1206.7,980.9 C1220.7,982.1 1236.0,980.5 1248.9,981.5 C1261.8,982.5 1274.5,984.3 1284.2,986.9 C1293.9,989.5 1302.2,993.2 1307.3,997.0 C1312.4,1000.8 1314.9,1005.6 1314.6,1009.6Z"/><path d="M1714.9,1012.5 C1715.1,1015.5 1712.3,1019.0 1707.3,1021.8 C1702.3,1024.6 1694.3,1027.3 1684.9,1029.1 C1675.5,1030.9 1663.3,1032.0 1651.0,1032.6 C1638.7,1033.1 1624.2,1031.7 1610.8,1032.4 C1597.4,1033.1 1583.1,1036.1 1570.7,1036.8 C1558.3,1037.5 1546.1,1037.6 1536.6,1036.8 C1527.1,1036.0 1518.8,1034.2 1513.6,1032.0 C1508.3,1029.8 1505.2,1026.5 1505.1,1023.5 C1504.9,1020.5 1507.7,1017.0 1512.7,1014.2 C1517.7,1011.4 1525.7,1008.7 1535.1,1006.9 C1544.5,1005.1 1556.7,1003.9 1569.0,1003.4 C1581.3,1002.9 1595.8,1004.3 1609.2,1003.6 C1622.6,1002.9 1636.9,999.9 1649.3,999.2 C1661.7,998.5 1673.9,998.4 1683.4,999.2 C1692.9,1000.0 1701.2,1001.8 1706.4,1004.0 C1711.7,1006.2 1714.8,1009.5 1714.9,1012.5Z"/><path d="M905,1085 C906.7,1078.3 917.5,1073.3 950,1075 C982.5,1076.7 1051.7,1088.3 1100,1095 C1148.3,1101.7 1214.2,1107.5 1240,1115 C1265.8,1122.5 1278.3,1135.8 1255,1140 C1231.7,1144.2 1152.5,1144.2 1100,1140 C1047.5,1135.8 972.5,1124.2 940,1115 C907.5,1105.8 903.3,1091.7 905,1085Z"/><path d="M1473.9,1119.7 C1474.0,1121.4 1471.3,1123.6 1466.4,1125.3 C1461.5,1127.0 1453.7,1128.8 1444.5,1130.0 C1435.3,1131.2 1423.5,1132.1 1411.5,1132.7 C1399.5,1133.3 1385.4,1132.7 1372.4,1133.4 C1359.4,1134.1 1345.5,1136.1 1333.5,1136.8 C1321.5,1137.5 1309.6,1137.8 1300.4,1137.5 C1291.2,1137.2 1283.2,1136.3 1278.2,1135.1 C1273.2,1133.9 1270.2,1132.0 1270.1,1130.3 C1270.0,1128.6 1272.7,1126.4 1277.6,1124.7 C1282.5,1123.0 1290.3,1121.2 1299.5,1120.0 C1308.7,1118.8 1320.5,1117.9 1332.5,1117.3 C1344.5,1116.7 1358.6,1117.3 1371.6,1116.6 C1384.6,1115.9 1398.5,1113.9 1410.5,1113.2 C1422.5,1112.5 1434.4,1112.2 1443.6,1112.5 C1452.8,1112.8 1460.8,1113.7 1465.8,1114.9 C1470.8,1116.1 1473.8,1118.0 1473.9,1119.7Z"/><path d="M1065.0,1160.0 C1065.0,1161.7 1063.3,1163.8 1060.1,1165.2 C1056.9,1166.7 1051.9,1168.0 1046.0,1168.7 C1040.1,1169.5 1032.6,1169.8 1024.9,1169.7 C1017.2,1169.7 1008.3,1168.4 1000.0,1168.4 C991.7,1168.4 982.8,1169.7 975.1,1169.7 C967.4,1169.8 959.9,1169.5 954.0,1168.7 C948.1,1168.0 943.1,1166.7 939.9,1165.2 C936.7,1163.8 935.0,1161.7 935.0,1160.0 C935.0,1158.3 936.7,1156.2 939.9,1154.8 C943.1,1153.3 948.1,1152.0 954.0,1151.3 C959.9,1150.5 967.4,1150.2 975.1,1150.3 C982.8,1150.3 991.7,1151.6 1000.0,1151.6 C1008.3,1151.6 1017.2,1150.3 1024.9,1150.3 C1032.6,1150.2 1040.1,1150.5 1046.0,1151.3 C1051.9,1152.0 1056.9,1153.3 1060.1,1154.8 C1063.3,1156.2 1065.0,1158.3 1065.0,1160.0Z"/><path d="M1466.0,1168.0 C1466.0,1169.2 1463.6,1170.7 1459.3,1171.7 C1455.0,1172.7 1448.1,1173.7 1440.2,1174.2 C1432.3,1174.8 1422.1,1175.0 1411.7,1175.0 C1401.3,1175.0 1389.2,1174.0 1378.0,1174.0 C1366.8,1174.0 1354.7,1175.0 1344.3,1175.0 C1333.9,1175.0 1323.7,1174.8 1315.8,1174.2 C1307.9,1173.7 1301.0,1172.7 1296.7,1171.7 C1292.4,1170.7 1290.0,1169.2 1290.0,1168.0 C1290.0,1166.8 1292.4,1165.3 1296.7,1164.3 C1301.0,1163.3 1307.9,1162.3 1315.8,1161.8 C1323.7,1161.2 1333.9,1161.0 1344.3,1161.0 C1354.7,1161.0 1366.8,1162.0 1378.0,1162.0 C1389.2,1162.0 1401.3,1161.0 1411.7,1161.0 C1422.1,1161.0 1432.3,1161.2 1440.2,1161.8 C1448.1,1162.3 1455.0,1163.3 1459.3,1164.3 C1463.6,1165.3 1466.0,1166.8 1466.0,1168.0Z"/><path d="M712.1,618.7 C711.0,620.0 708.3,620.4 704.8,619.4 C701.3,618.4 696.4,616.0 691.2,612.6 C686.0,609.2 679.8,604.4 673.7,599.2 C667.6,594.0 661.2,587.0 654.6,581.4 C648.0,575.8 640.0,570.8 633.8,565.7 C627.6,560.6 621.7,555.3 617.5,550.8 C613.3,546.3 610.1,541.9 608.5,538.6 C606.9,535.4 606.8,532.6 607.9,531.3 C609.0,530.0 611.7,529.6 615.2,530.6 C618.7,531.6 623.6,534.0 628.8,537.4 C634.0,540.8 640.2,545.6 646.3,550.8 C652.4,556.0 658.8,563.0 665.4,568.6 C672.0,574.2 680.0,579.2 686.2,584.3 C692.4,589.4 698.3,594.7 702.5,599.2 C706.7,603.7 709.9,608.1 711.5,611.4 C713.1,614.6 713.2,617.4 712.1,618.7Z"/><path d="M480.5,797.0 C479.4,798.8 475.9,799.5 471.3,798.6 C466.7,797.7 459.9,795.2 452.6,791.6 C445.3,788.0 436.3,782.5 427.4,776.7 C418.5,770.9 409.0,762.9 399.4,756.6 C389.8,750.4 378.6,744.9 369.7,739.2 C360.8,733.5 352.1,727.4 345.8,722.2 C339.5,717.0 334.5,711.9 331.8,708.0 C329.1,704.1 328.4,700.8 329.5,699.0 C330.6,697.2 334.1,696.5 338.7,697.4 C343.3,698.3 350.1,700.8 357.4,704.4 C364.7,708.0 373.7,713.5 382.6,719.3 C391.5,725.1 401.0,733.1 410.6,739.4 C420.2,745.6 431.4,751.1 440.3,756.8 C449.2,762.5 457.9,768.6 464.2,773.8 C470.5,779.0 475.5,784.1 478.2,788.0 C480.9,791.9 481.6,795.2 480.5,797.0Z"/><path d="M840.6,915.6 C838.9,917.2 835.1,917.0 830.5,914.9 C825.9,912.8 819.6,908.6 813.1,902.9 C806.6,897.2 798.9,889.3 791.5,880.9 C784.1,872.5 776.6,861.6 768.5,852.6 C760.4,843.6 750.4,835.1 742.9,826.8 C735.4,818.5 728.2,810.0 723.2,803.0 C718.2,796.0 714.6,789.3 713.0,784.5 C711.4,779.7 711.6,776.0 713.4,774.4 C715.1,772.8 718.9,773.0 723.5,775.1 C728.1,777.2 734.4,781.4 740.9,787.1 C747.4,792.8 755.1,800.7 762.5,809.1 C769.9,817.5 777.4,828.4 785.5,837.4 C793.6,846.4 803.6,854.9 811.1,863.2 C818.6,871.5 825.8,880.0 830.8,887.0 C835.8,894.0 839.4,900.7 841.0,905.5 C842.6,910.3 842.4,914.0 840.6,915.6Z"/><path d="M874.1,1048.2 C872.6,1050.2 869.2,1051.1 865.0,1050.5 C860.8,1049.9 855.1,1047.8 849.1,1044.5 C843.1,1041.2 835.9,1036.1 829.0,1030.6 C822.1,1025.1 815.1,1017.4 807.6,1011.5 C800.1,1005.6 790.8,1000.7 783.8,995.3 C776.8,989.9 770.2,984.2 765.5,979.2 C760.8,974.2 757.4,969.1 755.8,965.2 C754.2,961.3 754.4,957.8 755.9,955.8 C757.4,953.8 760.8,952.9 765.0,953.5 C769.2,954.1 774.9,956.2 780.9,959.5 C786.9,962.8 794.1,967.9 801.0,973.4 C807.9,978.9 814.9,986.6 822.4,992.5 C829.9,998.4 839.2,1003.3 846.2,1008.7 C853.2,1014.1 859.8,1019.8 864.5,1024.8 C869.2,1029.8 872.6,1034.9 874.2,1038.8 C875.8,1042.7 875.6,1046.2 874.1,1048.2Z"/><path d="M244.5,1086.8 C243.1,1088.3 239.5,1088.4 234.9,1086.5 C230.3,1084.6 223.8,1080.8 216.9,1075.6 C210.0,1070.4 201.7,1063.1 193.5,1055.4 C185.3,1047.7 176.9,1037.8 168.0,1029.5 C159.1,1021.2 148.5,1013.5 140.3,1005.9 C132.1,998.3 124.2,990.4 118.6,983.9 C113.0,977.4 108.7,971.2 106.5,966.8 C104.3,962.3 104.1,958.8 105.5,957.2 C106.9,955.7 110.5,955.6 115.1,957.5 C119.7,959.4 126.2,963.2 133.1,968.4 C140.0,973.6 148.3,980.9 156.5,988.6 C164.7,996.3 173.1,1006.2 182.0,1014.5 C190.9,1022.8 201.5,1030.5 209.7,1038.1 C217.9,1045.7 225.8,1053.6 231.4,1060.1 C237.0,1066.6 241.3,1072.8 243.5,1077.2 C245.7,1081.7 245.9,1085.2 244.5,1086.8Z"/><path d="M634.8,1081.0 C633.8,1082.6 630.4,1083.0 625.4,1081.7 C620.4,1080.4 613.1,1077.5 605.0,1073.4 C596.9,1069.3 586.9,1063.4 576.9,1057.1 C566.9,1050.8 556.0,1042.3 545.2,1035.6 C534.4,1028.8 522.0,1022.8 512.0,1016.6 C502.0,1010.4 492.3,1004.0 485.1,998.5 C477.9,993.0 472.0,987.7 468.7,983.8 C465.4,979.9 464.2,976.6 465.2,975.0 C466.2,973.4 469.6,973.0 474.6,974.3 C479.6,975.6 486.9,978.5 495.0,982.6 C503.1,986.7 513.1,992.6 523.1,998.9 C533.1,1005.2 544.0,1013.6 554.8,1020.4 C565.6,1027.2 578.0,1033.2 588.0,1039.4 C598.0,1045.6 607.7,1052.0 614.9,1057.5 C622.1,1063.0 628.0,1068.3 631.3,1072.2 C634.6,1076.1 635.8,1079.4 634.8,1081.0Z"/><path d="M560.3,1143.5 C559.0,1144.9 556.3,1145.3 552.9,1144.3 C549.5,1143.3 544.8,1141.0 539.9,1137.7 C535.0,1134.4 529.1,1129.6 523.5,1124.4 C517.9,1119.2 512.2,1112.2 506.0,1106.7 C499.8,1101.2 492.2,1096.2 486.5,1091.1 C480.8,1086.0 475.4,1080.7 471.6,1076.2 C467.8,1071.7 464.9,1067.3 463.6,1064.0 C462.3,1060.7 462.4,1057.9 463.7,1056.5 C464.9,1055.1 467.7,1054.7 471.1,1055.7 C474.5,1056.7 479.2,1059.0 484.1,1062.3 C489.0,1065.6 494.9,1070.4 500.5,1075.6 C506.1,1080.8 511.8,1087.8 518.0,1093.3 C524.2,1098.8 531.8,1103.8 537.5,1108.9 C543.2,1114.0 548.6,1119.3 552.4,1123.8 C556.2,1128.3 559.1,1132.7 560.4,1136.0 C561.7,1139.3 561.5,1142.1 560.3,1143.5Z"/><ellipse cx="842" cy="1135" rx="15" ry="22" transform="rotate(0 842 1135)"/><path d="M1690,200 C1705.0,160.0 1741.7,170.0 1760,180 C1778.3,190.0 1790.0,220.0 1800,260 C1810.0,300.0 1815.0,364.2 1820,420 C1825.0,475.8 1833.3,568.3 1830,595 C1826.7,621.7 1810.0,600.8 1800,580 C1790.0,559.2 1790.0,485.0 1770,470 C1750.0,455.0 1696.7,498.3 1680,490 C1663.3,481.7 1668.3,468.3 1670,420 C1671.7,371.7 1675.0,240.0 1690,200Z"/><path d="M1850,280 L1880,270 L1910,460 L1890,470 L1845,360Z"/><path d="M1980,190 C1991.7,154.2 2013.3,145.0 2050,135 C2086.7,125.0 2153.3,139.2 2200,130 C2246.7,120.8 2278.3,95.0 2330,80 C2381.7,65.0 2474.2,11.7 2510,40 C2545.8,68.3 2540.0,193.3 2545,250 C2550.0,306.7 2557.5,340.0 2540,380 C2522.5,420.0 2475.0,470.0 2440,490 C2405.0,510.0 2353.3,478.3 2330,500 C2306.7,521.7 2303.3,556.7 2300,620 C2296.7,683.3 2328.3,834.2 2310,880 C2291.7,925.8 2233.3,895.0 2190,895 C2146.7,895.0 2088.3,884.2 2050,880 C2011.7,875.8 1991.7,883.3 1960,870 C1928.3,856.7 1871.7,836.7 1860,800 C1848.3,763.3 1876.7,700.0 1890,650 C1903.3,600.0 1925.0,550.0 1940,500 C1955.0,450.0 1973.3,401.7 1980,350 C1986.7,298.3 1968.3,225.8 1980,190Z"/><path d="M1870,985 L2005,1020 L1985,1055Z"/><path d="M1138.5,1214.6 C1138.2,1216.0 1135.9,1217.3 1132.3,1217.8 C1128.7,1218.3 1123.2,1218.3 1116.9,1217.6 C1110.6,1216.9 1102.6,1215.5 1094.5,1213.7 C1086.4,1211.9 1077.2,1208.8 1068.5,1207.0 C1059.8,1205.2 1050.2,1204.3 1042.1,1202.6 C1034.0,1200.9 1026.0,1199.0 1020.0,1197.0 C1014.0,1195.0 1008.9,1192.8 1005.8,1190.9 C1002.7,1189.0 1001.2,1186.9 1001.5,1185.4 C1001.8,1184.0 1004.1,1182.7 1007.7,1182.2 C1011.3,1181.7 1016.8,1181.7 1023.1,1182.4 C1029.4,1183.1 1037.4,1184.5 1045.5,1186.3 C1053.6,1188.1 1062.8,1191.2 1071.5,1193.0 C1080.2,1194.8 1089.8,1195.7 1097.9,1197.4 C1106.0,1199.1 1114.0,1201.0 1120.0,1203.0 C1126.0,1205.0 1131.1,1207.2 1134.2,1209.1 C1137.3,1211.0 1138.8,1213.1 1138.5,1214.6Z"/></g></g>
<g opacity="0.8"><g transform="translate(1353,1176) scale(0.101564)" fill="#766f4e" stroke="#766f4e" ><path d="M1210,600 C1213.3,568.3 1288.3,500.8 1320,480 C1351.7,459.2 1373.3,468.3 1400,475 C1426.7,481.7 1459.2,499.2 1480,520 C1500.8,540.8 1520.0,573.3 1525,600 C1530.0,626.7 1524.2,652.5 1510,680 C1495.8,707.5 1475.0,766.7 1440,765 C1405.0,763.3 1338.3,697.5 1300,670 C1261.7,642.5 1206.7,631.7 1210,600Z"/><path d="M1540,620 C1546.7,614.2 1595.0,608.3 1620,615 C1645.0,621.7 1671.7,640.8 1690,660 C1708.3,679.2 1720.8,706.7 1730,730 C1739.2,753.3 1756.7,795.0 1745,800 C1733.3,805.0 1692.5,780.0 1660,760 C1627.5,740.0 1563.3,698.3 1550,680 C1536.7,661.7 1581.7,660.0 1580,650 C1578.3,640.0 1533.3,625.8 1540,620Z"/><path d="M1500,800 C1512.5,785.0 1553.3,775.8 1580,770 C1606.7,764.2 1639.2,761.7 1660,765 C1680.8,768.3 1701.7,774.2 1705,790 C1708.3,805.8 1700.8,845.8 1680,860 C1659.2,874.2 1609.2,875.0 1580,875 C1550.8,875.0 1518.3,872.5 1505,860 C1491.7,847.5 1487.5,815.0 1500,800Z"/><path d="M1090,700 C1088.3,688.3 1141.7,692.5 1170,700 C1198.3,707.5 1238.3,735.0 1260,745 C1281.7,755.0 1276.7,754.2 1300,760 C1323.3,765.8 1375.8,770.0 1400,780 C1424.2,790.0 1438.3,805.0 1445,820 C1451.7,835.0 1450.8,860.0 1440,870 C1429.2,880.0 1410.0,886.7 1380,880 C1350.0,873.3 1293.3,848.3 1260,830 C1226.7,811.7 1208.3,791.7 1180,770 C1151.7,748.3 1091.7,711.7 1090,700Z"/><path d="M1140,880 C1138.3,872.5 1200.0,874.2 1230,880 C1260.0,885.8 1286.7,908.3 1320,915 C1353.3,921.7 1400.8,914.2 1430,920 C1459.2,925.8 1486.7,941.7 1495,950 C1503.3,958.3 1507.5,970.8 1480,970 C1452.5,969.2 1370.0,952.5 1330,945 C1290.0,937.5 1271.7,935.8 1240,925 C1208.3,914.2 1141.7,887.5 1140,880Z"/><path d="M1314.6,1009.6 C1314.2,1013.6 1310.8,1017.9 1305.2,1020.7 C1299.6,1023.6 1290.7,1025.9 1280.7,1026.7 C1270.7,1027.5 1257.9,1027.1 1245.0,1025.8 C1232.1,1024.5 1217.3,1020.3 1203.3,1019.1 C1189.3,1017.9 1174.0,1019.5 1161.1,1018.5 C1148.2,1017.5 1135.5,1015.7 1125.8,1013.1 C1116.1,1010.5 1107.8,1006.8 1102.7,1003.0 C1097.6,999.2 1095.1,994.4 1095.4,990.4 C1095.8,986.4 1099.2,982.1 1104.8,979.3 C1110.4,976.4 1119.3,974.1 1129.3,973.3 C1139.3,972.4 1152.1,972.9 1165.0,974.2 C1177.9,975.5 1192.7,979.7 1206.7,980.9 C1220.7,982.1 1236.0,980.5 1248.9,981.5 C1261.8,982.5 1274.5,984.3 1284.2,986.9 C1293.9,989.5 1302.2,993.2 1307.3,997.0 C1312.4,1000.8 1314.9,1005.6 1314.6,1009.6Z"/><path d="M1714.9,1012.5 C1715.1,1015.5 1712.3,1019.0 1707.3,1021.8 C1702.3,1024.6 1694.3,1027.3 1684.9,1029.1 C1675.5,1030.9 1663.3,1032.0 1651.0,1032.6 C1638.7,1033.1 1624.2,1031.7 1610.8,1032.4 C1597.4,1033.1 1583.1,1036.1 1570.7,1036.8 C1558.3,1037.5 1546.1,1037.6 1536.6,1036.8 C1527.1,1036.0 1518.8,1034.2 1513.6,1032.0 C1508.3,1029.8 1505.2,1026.5 1505.1,1023.5 C1504.9,1020.5 1507.7,1017.0 1512.7,1014.2 C1517.7,1011.4 1525.7,1008.7 1535.1,1006.9 C1544.5,1005.1 1556.7,1003.9 1569.0,1003.4 C1581.3,1002.9 1595.8,1004.3 1609.2,1003.6 C1622.6,1002.9 1636.9,999.9 1649.3,999.2 C1661.7,998.5 1673.9,998.4 1683.4,999.2 C1692.9,1000.0 1701.2,1001.8 1706.4,1004.0 C1711.7,1006.2 1714.8,1009.5 1714.9,1012.5Z"/><path d="M905,1085 C906.7,1078.3 917.5,1073.3 950,1075 C982.5,1076.7 1051.7,1088.3 1100,1095 C1148.3,1101.7 1214.2,1107.5 1240,1115 C1265.8,1122.5 1278.3,1135.8 1255,1140 C1231.7,1144.2 1152.5,1144.2 1100,1140 C1047.5,1135.8 972.5,1124.2 940,1115 C907.5,1105.8 903.3,1091.7 905,1085Z"/><path d="M1473.9,1119.7 C1474.0,1121.4 1471.3,1123.6 1466.4,1125.3 C1461.5,1127.0 1453.7,1128.8 1444.5,1130.0 C1435.3,1131.2 1423.5,1132.1 1411.5,1132.7 C1399.5,1133.3 1385.4,1132.7 1372.4,1133.4 C1359.4,1134.1 1345.5,1136.1 1333.5,1136.8 C1321.5,1137.5 1309.6,1137.8 1300.4,1137.5 C1291.2,1137.2 1283.2,1136.3 1278.2,1135.1 C1273.2,1133.9 1270.2,1132.0 1270.1,1130.3 C1270.0,1128.6 1272.7,1126.4 1277.6,1124.7 C1282.5,1123.0 1290.3,1121.2 1299.5,1120.0 C1308.7,1118.8 1320.5,1117.9 1332.5,1117.3 C1344.5,1116.7 1358.6,1117.3 1371.6,1116.6 C1384.6,1115.9 1398.5,1113.9 1410.5,1113.2 C1422.5,1112.5 1434.4,1112.2 1443.6,1112.5 C1452.8,1112.8 1460.8,1113.7 1465.8,1114.9 C1470.8,1116.1 1473.8,1118.0 1473.9,1119.7Z"/><path d="M1065.0,1160.0 C1065.0,1161.7 1063.3,1163.8 1060.1,1165.2 C1056.9,1166.7 1051.9,1168.0 1046.0,1168.7 C1040.1,1169.5 1032.6,1169.8 1024.9,1169.7 C1017.2,1169.7 1008.3,1168.4 1000.0,1168.4 C991.7,1168.4 982.8,1169.7 975.1,1169.7 C967.4,1169.8 959.9,1169.5 954.0,1168.7 C948.1,1168.0 943.1,1166.7 939.9,1165.2 C936.7,1163.8 935.0,1161.7 935.0,1160.0 C935.0,1158.3 936.7,1156.2 939.9,1154.8 C943.1,1153.3 948.1,1152.0 954.0,1151.3 C959.9,1150.5 967.4,1150.2 975.1,1150.3 C982.8,1150.3 991.7,1151.6 1000.0,1151.6 C1008.3,1151.6 1017.2,1150.3 1024.9,1150.3 C1032.6,1150.2 1040.1,1150.5 1046.0,1151.3 C1051.9,1152.0 1056.9,1153.3 1060.1,1154.8 C1063.3,1156.2 1065.0,1158.3 1065.0,1160.0Z"/><path d="M1466.0,1168.0 C1466.0,1169.2 1463.6,1170.7 1459.3,1171.7 C1455.0,1172.7 1448.1,1173.7 1440.2,1174.2 C1432.3,1174.8 1422.1,1175.0 1411.7,1175.0 C1401.3,1175.0 1389.2,1174.0 1378.0,1174.0 C1366.8,1174.0 1354.7,1175.0 1344.3,1175.0 C1333.9,1175.0 1323.7,1174.8 1315.8,1174.2 C1307.9,1173.7 1301.0,1172.7 1296.7,1171.7 C1292.4,1170.7 1290.0,1169.2 1290.0,1168.0 C1290.0,1166.8 1292.4,1165.3 1296.7,1164.3 C1301.0,1163.3 1307.9,1162.3 1315.8,1161.8 C1323.7,1161.2 1333.9,1161.0 1344.3,1161.0 C1354.7,1161.0 1366.8,1162.0 1378.0,1162.0 C1389.2,1162.0 1401.3,1161.0 1411.7,1161.0 C1422.1,1161.0 1432.3,1161.2 1440.2,1161.8 C1448.1,1162.3 1455.0,1163.3 1459.3,1164.3 C1463.6,1165.3 1466.0,1166.8 1466.0,1168.0Z"/><path d="M712.1,618.7 C711.0,620.0 708.3,620.4 704.8,619.4 C701.3,618.4 696.4,616.0 691.2,612.6 C686.0,609.2 679.8,604.4 673.7,599.2 C667.6,594.0 661.2,587.0 654.6,581.4 C648.0,575.8 640.0,570.8 633.8,565.7 C627.6,560.6 621.7,555.3 617.5,550.8 C613.3,546.3 610.1,541.9 608.5,538.6 C606.9,535.4 606.8,532.6 607.9,531.3 C609.0,530.0 611.7,529.6 615.2,530.6 C618.7,531.6 623.6,534.0 628.8,537.4 C634.0,540.8 640.2,545.6 646.3,550.8 C652.4,556.0 658.8,563.0 665.4,568.6 C672.0,574.2 680.0,579.2 686.2,584.3 C692.4,589.4 698.3,594.7 702.5,599.2 C706.7,603.7 709.9,608.1 711.5,611.4 C713.1,614.6 713.2,617.4 712.1,618.7Z"/><path d="M480.5,797.0 C479.4,798.8 475.9,799.5 471.3,798.6 C466.7,797.7 459.9,795.2 452.6,791.6 C445.3,788.0 436.3,782.5 427.4,776.7 C418.5,770.9 409.0,762.9 399.4,756.6 C389.8,750.4 378.6,744.9 369.7,739.2 C360.8,733.5 352.1,727.4 345.8,722.2 C339.5,717.0 334.5,711.9 331.8,708.0 C329.1,704.1 328.4,700.8 329.5,699.0 C330.6,697.2 334.1,696.5 338.7,697.4 C343.3,698.3 350.1,700.8 357.4,704.4 C364.7,708.0 373.7,713.5 382.6,719.3 C391.5,725.1 401.0,733.1 410.6,739.4 C420.2,745.6 431.4,751.1 440.3,756.8 C449.2,762.5 457.9,768.6 464.2,773.8 C470.5,779.0 475.5,784.1 478.2,788.0 C480.9,791.9 481.6,795.2 480.5,797.0Z"/><path d="M840.6,915.6 C838.9,917.2 835.1,917.0 830.5,914.9 C825.9,912.8 819.6,908.6 813.1,902.9 C806.6,897.2 798.9,889.3 791.5,880.9 C784.1,872.5 776.6,861.6 768.5,852.6 C760.4,843.6 750.4,835.1 742.9,826.8 C735.4,818.5 728.2,810.0 723.2,803.0 C718.2,796.0 714.6,789.3 713.0,784.5 C711.4,779.7 711.6,776.0 713.4,774.4 C715.1,772.8 718.9,773.0 723.5,775.1 C728.1,777.2 734.4,781.4 740.9,787.1 C747.4,792.8 755.1,800.7 762.5,809.1 C769.9,817.5 777.4,828.4 785.5,837.4 C793.6,846.4 803.6,854.9 811.1,863.2 C818.6,871.5 825.8,880.0 830.8,887.0 C835.8,894.0 839.4,900.7 841.0,905.5 C842.6,910.3 842.4,914.0 840.6,915.6Z"/><path d="M874.1,1048.2 C872.6,1050.2 869.2,1051.1 865.0,1050.5 C860.8,1049.9 855.1,1047.8 849.1,1044.5 C843.1,1041.2 835.9,1036.1 829.0,1030.6 C822.1,1025.1 815.1,1017.4 807.6,1011.5 C800.1,1005.6 790.8,1000.7 783.8,995.3 C776.8,989.9 770.2,984.2 765.5,979.2 C760.8,974.2 757.4,969.1 755.8,965.2 C754.2,961.3 754.4,957.8 755.9,955.8 C757.4,953.8 760.8,952.9 765.0,953.5 C769.2,954.1 774.9,956.2 780.9,959.5 C786.9,962.8 794.1,967.9 801.0,973.4 C807.9,978.9 814.9,986.6 822.4,992.5 C829.9,998.4 839.2,1003.3 846.2,1008.7 C853.2,1014.1 859.8,1019.8 864.5,1024.8 C869.2,1029.8 872.6,1034.9 874.2,1038.8 C875.8,1042.7 875.6,1046.2 874.1,1048.2Z"/><path d="M244.5,1086.8 C243.1,1088.3 239.5,1088.4 234.9,1086.5 C230.3,1084.6 223.8,1080.8 216.9,1075.6 C210.0,1070.4 201.7,1063.1 193.5,1055.4 C185.3,1047.7 176.9,1037.8 168.0,1029.5 C159.1,1021.2 148.5,1013.5 140.3,1005.9 C132.1,998.3 124.2,990.4 118.6,983.9 C113.0,977.4 108.7,971.2 106.5,966.8 C104.3,962.3 104.1,958.8 105.5,957.2 C106.9,955.7 110.5,955.6 115.1,957.5 C119.7,959.4 126.2,963.2 133.1,968.4 C140.0,973.6 148.3,980.9 156.5,988.6 C164.7,996.3 173.1,1006.2 182.0,1014.5 C190.9,1022.8 201.5,1030.5 209.7,1038.1 C217.9,1045.7 225.8,1053.6 231.4,1060.1 C237.0,1066.6 241.3,1072.8 243.5,1077.2 C245.7,1081.7 245.9,1085.2 244.5,1086.8Z"/><path d="M634.8,1081.0 C633.8,1082.6 630.4,1083.0 625.4,1081.7 C620.4,1080.4 613.1,1077.5 605.0,1073.4 C596.9,1069.3 586.9,1063.4 576.9,1057.1 C566.9,1050.8 556.0,1042.3 545.2,1035.6 C534.4,1028.8 522.0,1022.8 512.0,1016.6 C502.0,1010.4 492.3,1004.0 485.1,998.5 C477.9,993.0 472.0,987.7 468.7,983.8 C465.4,979.9 464.2,976.6 465.2,975.0 C466.2,973.4 469.6,973.0 474.6,974.3 C479.6,975.6 486.9,978.5 495.0,982.6 C503.1,986.7 513.1,992.6 523.1,998.9 C533.1,1005.2 544.0,1013.6 554.8,1020.4 C565.6,1027.2 578.0,1033.2 588.0,1039.4 C598.0,1045.6 607.7,1052.0 614.9,1057.5 C622.1,1063.0 628.0,1068.3 631.3,1072.2 C634.6,1076.1 635.8,1079.4 634.8,1081.0Z"/><path d="M560.3,1143.5 C559.0,1144.9 556.3,1145.3 552.9,1144.3 C549.5,1143.3 544.8,1141.0 539.9,1137.7 C535.0,1134.4 529.1,1129.6 523.5,1124.4 C517.9,1119.2 512.2,1112.2 506.0,1106.7 C499.8,1101.2 492.2,1096.2 486.5,1091.1 C480.8,1086.0 475.4,1080.7 471.6,1076.2 C467.8,1071.7 464.9,1067.3 463.6,1064.0 C462.3,1060.7 462.4,1057.9 463.7,1056.5 C464.9,1055.1 467.7,1054.7 471.1,1055.7 C474.5,1056.7 479.2,1059.0 484.1,1062.3 C489.0,1065.6 494.9,1070.4 500.5,1075.6 C506.1,1080.8 511.8,1087.8 518.0,1093.3 C524.2,1098.8 531.8,1103.8 537.5,1108.9 C543.2,1114.0 548.6,1119.3 552.4,1123.8 C556.2,1128.3 559.1,1132.7 560.4,1136.0 C561.7,1139.3 561.5,1142.1 560.3,1143.5Z"/><ellipse cx="842" cy="1135" rx="15" ry="22" transform="rotate(0 842 1135)"/><path d="M1690,200 C1705.0,160.0 1741.7,170.0 1760,180 C1778.3,190.0 1790.0,220.0 1800,260 C1810.0,300.0 1815.0,364.2 1820,420 C1825.0,475.8 1833.3,568.3 1830,595 C1826.7,621.7 1810.0,600.8 1800,580 C1790.0,559.2 1790.0,485.0 1770,470 C1750.0,455.0 1696.7,498.3 1680,490 C1663.3,481.7 1668.3,468.3 1670,420 C1671.7,371.7 1675.0,240.0 1690,200Z"/><path d="M1850,280 L1880,270 L1910,460 L1890,470 L1845,360Z"/><path d="M1980,190 C1991.7,154.2 2013.3,145.0 2050,135 C2086.7,125.0 2153.3,139.2 2200,130 C2246.7,120.8 2278.3,95.0 2330,80 C2381.7,65.0 2474.2,11.7 2510,40 C2545.8,68.3 2540.0,193.3 2545,250 C2550.0,306.7 2557.5,340.0 2540,380 C2522.5,420.0 2475.0,470.0 2440,490 C2405.0,510.0 2353.3,478.3 2330,500 C2306.7,521.7 2303.3,556.7 2300,620 C2296.7,683.3 2328.3,834.2 2310,880 C2291.7,925.8 2233.3,895.0 2190,895 C2146.7,895.0 2088.3,884.2 2050,880 C2011.7,875.8 1991.7,883.3 1960,870 C1928.3,856.7 1871.7,836.7 1860,800 C1848.3,763.3 1876.7,700.0 1890,650 C1903.3,600.0 1925.0,550.0 1940,500 C1955.0,450.0 1973.3,401.7 1980,350 C1986.7,298.3 1968.3,225.8 1980,190Z"/><path d="M1870,985 L2005,1020 L1985,1055Z"/><path d="M1138.5,1214.6 C1138.2,1216.0 1135.9,1217.3 1132.3,1217.8 C1128.7,1218.3 1123.2,1218.3 1116.9,1217.6 C1110.6,1216.9 1102.6,1215.5 1094.5,1213.7 C1086.4,1211.9 1077.2,1208.8 1068.5,1207.0 C1059.8,1205.2 1050.2,1204.3 1042.1,1202.6 C1034.0,1200.9 1026.0,1199.0 1020.0,1197.0 C1014.0,1195.0 1008.9,1192.8 1005.8,1190.9 C1002.7,1189.0 1001.2,1186.9 1001.5,1185.4 C1001.8,1184.0 1004.1,1182.7 1007.7,1182.2 C1011.3,1181.7 1016.8,1181.7 1023.1,1182.4 C1029.4,1183.1 1037.4,1184.5 1045.5,1186.3 C1053.6,1188.1 1062.8,1191.2 1071.5,1193.0 C1080.2,1194.8 1089.8,1195.7 1097.9,1197.4 C1106.0,1199.1 1114.0,1201.0 1120.0,1203.0 C1126.0,1205.0 1131.1,1207.2 1134.2,1209.1 C1137.3,1211.0 1138.8,1213.1 1138.5,1214.6Z"/></g><g transform="translate(0,0) scale(1.000000)" fill="#766f4e" stroke="#766f4e" ><path d="M1509.2,1317.5 L1522.8,1294.8 L1528.5,1296 L1516,1315.3Z"/><path d="M1528.5,1322 C1530.0,1318.6 1540.6,1304.7 1545.5,1299.4 C1550.4,1294.1 1556.3,1289.9 1558,1290.3 C1559.7,1290.7 1559.3,1296.7 1555.7,1301.6 C1552.1,1306.5 1540.9,1316.4 1536.4,1319.8 C1531.9,1323.2 1527.0,1325.4 1528.5,1322Z"/></g></g>
<g clip-path="url(#cp8)"><g transform="translate(1353,1176) scale(0.101564)" fill="#766f4e" stroke="#766f4e" ><path d="M1210,600 C1213.3,568.3 1288.3,500.8 1320,480 C1351.7,459.2 1373.3,468.3 1400,475 C1426.7,481.7 1459.2,499.2 1480,520 C1500.8,540.8 1520.0,573.3 1525,600 C1530.0,626.7 1524.2,652.5 1510,680 C1495.8,707.5 1475.0,766.7 1440,765 C1405.0,763.3 1338.3,697.5 1300,670 C1261.7,642.5 1206.7,631.7 1210,600Z"/><path d="M1540,620 C1546.7,614.2 1595.0,608.3 1620,615 C1645.0,621.7 1671.7,640.8 1690,660 C1708.3,679.2 1720.8,706.7 1730,730 C1739.2,753.3 1756.7,795.0 1745,800 C1733.3,805.0 1692.5,780.0 1660,760 C1627.5,740.0 1563.3,698.3 1550,680 C1536.7,661.7 1581.7,660.0 1580,650 C1578.3,640.0 1533.3,625.8 1540,620Z"/><path d="M1500,800 C1512.5,785.0 1553.3,775.8 1580,770 C1606.7,764.2 1639.2,761.7 1660,765 C1680.8,768.3 1701.7,774.2 1705,790 C1708.3,805.8 1700.8,845.8 1680,860 C1659.2,874.2 1609.2,875.0 1580,875 C1550.8,875.0 1518.3,872.5 1505,860 C1491.7,847.5 1487.5,815.0 1500,800Z"/><path d="M1090,700 C1088.3,688.3 1141.7,692.5 1170,700 C1198.3,707.5 1238.3,735.0 1260,745 C1281.7,755.0 1276.7,754.2 1300,760 C1323.3,765.8 1375.8,770.0 1400,780 C1424.2,790.0 1438.3,805.0 1445,820 C1451.7,835.0 1450.8,860.0 1440,870 C1429.2,880.0 1410.0,886.7 1380,880 C1350.0,873.3 1293.3,848.3 1260,830 C1226.7,811.7 1208.3,791.7 1180,770 C1151.7,748.3 1091.7,711.7 1090,700Z"/><path d="M1140,880 C1138.3,872.5 1200.0,874.2 1230,880 C1260.0,885.8 1286.7,908.3 1320,915 C1353.3,921.7 1400.8,914.2 1430,920 C1459.2,925.8 1486.7,941.7 1495,950 C1503.3,958.3 1507.5,970.8 1480,970 C1452.5,969.2 1370.0,952.5 1330,945 C1290.0,937.5 1271.7,935.8 1240,925 C1208.3,914.2 1141.7,887.5 1140,880Z"/><path d="M1314.6,1009.6 C1314.2,1013.6 1310.8,1017.9 1305.2,1020.7 C1299.6,1023.6 1290.7,1025.9 1280.7,1026.7 C1270.7,1027.5 1257.9,1027.1 1245.0,1025.8 C1232.1,1024.5 1217.3,1020.3 1203.3,1019.1 C1189.3,1017.9 1174.0,1019.5 1161.1,1018.5 C1148.2,1017.5 1135.5,1015.7 1125.8,1013.1 C1116.1,1010.5 1107.8,1006.8 1102.7,1003.0 C1097.6,999.2 1095.1,994.4 1095.4,990.4 C1095.8,986.4 1099.2,982.1 1104.8,979.3 C1110.4,976.4 1119.3,974.1 1129.3,973.3 C1139.3,972.4 1152.1,972.9 1165.0,974.2 C1177.9,975.5 1192.7,979.7 1206.7,980.9 C1220.7,982.1 1236.0,980.5 1248.9,981.5 C1261.8,982.5 1274.5,984.3 1284.2,986.9 C1293.9,989.5 1302.2,993.2 1307.3,997.0 C1312.4,1000.8 1314.9,1005.6 1314.6,1009.6Z"/><path d="M1714.9,1012.5 C1715.1,1015.5 1712.3,1019.0 1707.3,1021.8 C1702.3,1024.6 1694.3,1027.3 1684.9,1029.1 C1675.5,1030.9 1663.3,1032.0 1651.0,1032.6 C1638.7,1033.1 1624.2,1031.7 1610.8,1032.4 C1597.4,1033.1 1583.1,1036.1 1570.7,1036.8 C1558.3,1037.5 1546.1,1037.6 1536.6,1036.8 C1527.1,1036.0 1518.8,1034.2 1513.6,1032.0 C1508.3,1029.8 1505.2,1026.5 1505.1,1023.5 C1504.9,1020.5 1507.7,1017.0 1512.7,1014.2 C1517.7,1011.4 1525.7,1008.7 1535.1,1006.9 C1544.5,1005.1 1556.7,1003.9 1569.0,1003.4 C1581.3,1002.9 1595.8,1004.3 1609.2,1003.6 C1622.6,1002.9 1636.9,999.9 1649.3,999.2 C1661.7,998.5 1673.9,998.4 1683.4,999.2 C1692.9,1000.0 1701.2,1001.8 1706.4,1004.0 C1711.7,1006.2 1714.8,1009.5 1714.9,1012.5Z"/><path d="M905,1085 C906.7,1078.3 917.5,1073.3 950,1075 C982.5,1076.7 1051.7,1088.3 1100,1095 C1148.3,1101.7 1214.2,1107.5 1240,1115 C1265.8,1122.5 1278.3,1135.8 1255,1140 C1231.7,1144.2 1152.5,1144.2 1100,1140 C1047.5,1135.8 972.5,1124.2 940,1115 C907.5,1105.8 903.3,1091.7 905,1085Z"/><path d="M1473.9,1119.7 C1474.0,1121.4 1471.3,1123.6 1466.4,1125.3 C1461.5,1127.0 1453.7,1128.8 1444.5,1130.0 C1435.3,1131.2 1423.5,1132.1 1411.5,1132.7 C1399.5,1133.3 1385.4,1132.7 1372.4,1133.4 C1359.4,1134.1 1345.5,1136.1 1333.5,1136.8 C1321.5,1137.5 1309.6,1137.8 1300.4,1137.5 C1291.2,1137.2 1283.2,1136.3 1278.2,1135.1 C1273.2,1133.9 1270.2,1132.0 1270.1,1130.3 C1270.0,1128.6 1272.7,1126.4 1277.6,1124.7 C1282.5,1123.0 1290.3,1121.2 1299.5,1120.0 C1308.7,1118.8 1320.5,1117.9 1332.5,1117.3 C1344.5,1116.7 1358.6,1117.3 1371.6,1116.6 C1384.6,1115.9 1398.5,1113.9 1410.5,1113.2 C1422.5,1112.5 1434.4,1112.2 1443.6,1112.5 C1452.8,1112.8 1460.8,1113.7 1465.8,1114.9 C1470.8,1116.1 1473.8,1118.0 1473.9,1119.7Z"/><path d="M1065.0,1160.0 C1065.0,1161.7 1063.3,1163.8 1060.1,1165.2 C1056.9,1166.7 1051.9,1168.0 1046.0,1168.7 C1040.1,1169.5 1032.6,1169.8 1024.9,1169.7 C1017.2,1169.7 1008.3,1168.4 1000.0,1168.4 C991.7,1168.4 982.8,1169.7 975.1,1169.7 C967.4,1169.8 959.9,1169.5 954.0,1168.7 C948.1,1168.0 943.1,1166.7 939.9,1165.2 C936.7,1163.8 935.0,1161.7 935.0,1160.0 C935.0,1158.3 936.7,1156.2 939.9,1154.8 C943.1,1153.3 948.1,1152.0 954.0,1151.3 C959.9,1150.5 967.4,1150.2 975.1,1150.3 C982.8,1150.3 991.7,1151.6 1000.0,1151.6 C1008.3,1151.6 1017.2,1150.3 1024.9,1150.3 C1032.6,1150.2 1040.1,1150.5 1046.0,1151.3 C1051.9,1152.0 1056.9,1153.3 1060.1,1154.8 C1063.3,1156.2 1065.0,1158.3 1065.0,1160.0Z"/><path d="M1466.0,1168.0 C1466.0,1169.2 1463.6,1170.7 1459.3,1171.7 C1455.0,1172.7 1448.1,1173.7 1440.2,1174.2 C1432.3,1174.8 1422.1,1175.0 1411.7,1175.0 C1401.3,1175.0 1389.2,1174.0 1378.0,1174.0 C1366.8,1174.0 1354.7,1175.0 1344.3,1175.0 C1333.9,1175.0 1323.7,1174.8 1315.8,1174.2 C1307.9,1173.7 1301.0,1172.7 1296.7,1171.7 C1292.4,1170.7 1290.0,1169.2 1290.0,1168.0 C1290.0,1166.8 1292.4,1165.3 1296.7,1164.3 C1301.0,1163.3 1307.9,1162.3 1315.8,1161.8 C1323.7,1161.2 1333.9,1161.0 1344.3,1161.0 C1354.7,1161.0 1366.8,1162.0 1378.0,1162.0 C1389.2,1162.0 1401.3,1161.0 1411.7,1161.0 C1422.1,1161.0 1432.3,1161.2 1440.2,1161.8 C1448.1,1162.3 1455.0,1163.3 1459.3,1164.3 C1463.6,1165.3 1466.0,1166.8 1466.0,1168.0Z"/><path d="M712.1,618.7 C711.0,620.0 708.3,620.4 704.8,619.4 C701.3,618.4 696.4,616.0 691.2,612.6 C686.0,609.2 679.8,604.4 673.7,599.2 C667.6,594.0 661.2,587.0 654.6,581.4 C648.0,575.8 640.0,570.8 633.8,565.7 C627.6,560.6 621.7,555.3 617.5,550.8 C613.3,546.3 610.1,541.9 608.5,538.6 C606.9,535.4 606.8,532.6 607.9,531.3 C609.0,530.0 611.7,529.6 615.2,530.6 C618.7,531.6 623.6,534.0 628.8,537.4 C634.0,540.8 640.2,545.6 646.3,550.8 C652.4,556.0 658.8,563.0 665.4,568.6 C672.0,574.2 680.0,579.2 686.2,584.3 C692.4,589.4 698.3,594.7 702.5,599.2 C706.7,603.7 709.9,608.1 711.5,611.4 C713.1,614.6 713.2,617.4 712.1,618.7Z"/><path d="M480.5,797.0 C479.4,798.8 475.9,799.5 471.3,798.6 C466.7,797.7 459.9,795.2 452.6,791.6 C445.3,788.0 436.3,782.5 427.4,776.7 C418.5,770.9 409.0,762.9 399.4,756.6 C389.8,750.4 378.6,744.9 369.7,739.2 C360.8,733.5 352.1,727.4 345.8,722.2 C339.5,717.0 334.5,711.9 331.8,708.0 C329.1,704.1 328.4,700.8 329.5,699.0 C330.6,697.2 334.1,696.5 338.7,697.4 C343.3,698.3 350.1,700.8 357.4,704.4 C364.7,708.0 373.7,713.5 382.6,719.3 C391.5,725.1 401.0,733.1 410.6,739.4 C420.2,745.6 431.4,751.1 440.3,756.8 C449.2,762.5 457.9,768.6 464.2,773.8 C470.5,779.0 475.5,784.1 478.2,788.0 C480.9,791.9 481.6,795.2 480.5,797.0Z"/><path d="M840.6,915.6 C838.9,917.2 835.1,917.0 830.5,914.9 C825.9,912.8 819.6,908.6 813.1,902.9 C806.6,897.2 798.9,889.3 791.5,880.9 C784.1,872.5 776.6,861.6 768.5,852.6 C760.4,843.6 750.4,835.1 742.9,826.8 C735.4,818.5 728.2,810.0 723.2,803.0 C718.2,796.0 714.6,789.3 713.0,784.5 C711.4,779.7 711.6,776.0 713.4,774.4 C715.1,772.8 718.9,773.0 723.5,775.1 C728.1,777.2 734.4,781.4 740.9,787.1 C747.4,792.8 755.1,800.7 762.5,809.1 C769.9,817.5 777.4,828.4 785.5,837.4 C793.6,846.4 803.6,854.9 811.1,863.2 C818.6,871.5 825.8,880.0 830.8,887.0 C835.8,894.0 839.4,900.7 841.0,905.5 C842.6,910.3 842.4,914.0 840.6,915.6Z"/><path d="M874.1,1048.2 C872.6,1050.2 869.2,1051.1 865.0,1050.5 C860.8,1049.9 855.1,1047.8 849.1,1044.5 C843.1,1041.2 835.9,1036.1 829.0,1030.6 C822.1,1025.1 815.1,1017.4 807.6,1011.5 C800.1,1005.6 790.8,1000.7 783.8,995.3 C776.8,989.9 770.2,984.2 765.5,979.2 C760.8,974.2 757.4,969.1 755.8,965.2 C754.2,961.3 754.4,957.8 755.9,955.8 C757.4,953.8 760.8,952.9 765.0,953.5 C769.2,954.1 774.9,956.2 780.9,959.5 C786.9,962.8 794.1,967.9 801.0,973.4 C807.9,978.9 814.9,986.6 822.4,992.5 C829.9,998.4 839.2,1003.3 846.2,1008.7 C853.2,1014.1 859.8,1019.8 864.5,1024.8 C869.2,1029.8 872.6,1034.9 874.2,1038.8 C875.8,1042.7 875.6,1046.2 874.1,1048.2Z"/><path d="M244.5,1086.8 C243.1,1088.3 239.5,1088.4 234.9,1086.5 C230.3,1084.6 223.8,1080.8 216.9,1075.6 C210.0,1070.4 201.7,1063.1 193.5,1055.4 C185.3,1047.7 176.9,1037.8 168.0,1029.5 C159.1,1021.2 148.5,1013.5 140.3,1005.9 C132.1,998.3 124.2,990.4 118.6,983.9 C113.0,977.4 108.7,971.2 106.5,966.8 C104.3,962.3 104.1,958.8 105.5,957.2 C106.9,955.7 110.5,955.6 115.1,957.5 C119.7,959.4 126.2,963.2 133.1,968.4 C140.0,973.6 148.3,980.9 156.5,988.6 C164.7,996.3 173.1,1006.2 182.0,1014.5 C190.9,1022.8 201.5,1030.5 209.7,1038.1 C217.9,1045.7 225.8,1053.6 231.4,1060.1 C237.0,1066.6 241.3,1072.8 243.5,1077.2 C245.7,1081.7 245.9,1085.2 244.5,1086.8Z"/><path d="M634.8,1081.0 C633.8,1082.6 630.4,1083.0 625.4,1081.7 C620.4,1080.4 613.1,1077.5 605.0,1073.4 C596.9,1069.3 586.9,1063.4 576.9,1057.1 C566.9,1050.8 556.0,1042.3 545.2,1035.6 C534.4,1028.8 522.0,1022.8 512.0,1016.6 C502.0,1010.4 492.3,1004.0 485.1,998.5 C477.9,993.0 472.0,987.7 468.7,983.8 C465.4,979.9 464.2,976.6 465.2,975.0 C466.2,973.4 469.6,973.0 474.6,974.3 C479.6,975.6 486.9,978.5 495.0,982.6 C503.1,986.7 513.1,992.6 523.1,998.9 C533.1,1005.2 544.0,1013.6 554.8,1020.4 C565.6,1027.2 578.0,1033.2 588.0,1039.4 C598.0,1045.6 607.7,1052.0 614.9,1057.5 C622.1,1063.0 628.0,1068.3 631.3,1072.2 C634.6,1076.1 635.8,1079.4 634.8,1081.0Z"/><path d="M560.3,1143.5 C559.0,1144.9 556.3,1145.3 552.9,1144.3 C549.5,1143.3 544.8,1141.0 539.9,1137.7 C535.0,1134.4 529.1,1129.6 523.5,1124.4 C517.9,1119.2 512.2,1112.2 506.0,1106.7 C499.8,1101.2 492.2,1096.2 486.5,1091.1 C480.8,1086.0 475.4,1080.7 471.6,1076.2 C467.8,1071.7 464.9,1067.3 463.6,1064.0 C462.3,1060.7 462.4,1057.9 463.7,1056.5 C464.9,1055.1 467.7,1054.7 471.1,1055.7 C474.5,1056.7 479.2,1059.0 484.1,1062.3 C489.0,1065.6 494.9,1070.4 500.5,1075.6 C506.1,1080.8 511.8,1087.8 518.0,1093.3 C524.2,1098.8 531.8,1103.8 537.5,1108.9 C543.2,1114.0 548.6,1119.3 552.4,1123.8 C556.2,1128.3 559.1,1132.7 560.4,1136.0 C561.7,1139.3 561.5,1142.1 560.3,1143.5Z"/><ellipse cx="842" cy="1135" rx="15" ry="22" transform="rotate(0 842 1135)"/><path d="M1690,200 C1705.0,160.0 1741.7,170.0 1760,180 C1778.3,190.0 1790.0,220.0 1800,260 C1810.0,300.0 1815.0,364.2 1820,420 C1825.0,475.8 1833.3,568.3 1830,595 C1826.7,621.7 1810.0,600.8 1800,580 C1790.0,559.2 1790.0,485.0 1770,470 C1750.0,455.0 1696.7,498.3 1680,490 C1663.3,481.7 1668.3,468.3 1670,420 C1671.7,371.7 1675.0,240.0 1690,200Z"/><path d="M1850,280 L1880,270 L1910,460 L1890,470 L1845,360Z"/><path d="M1980,190 C1991.7,154.2 2013.3,145.0 2050,135 C2086.7,125.0 2153.3,139.2 2200,130 C2246.7,120.8 2278.3,95.0 2330,80 C2381.7,65.0 2474.2,11.7 2510,40 C2545.8,68.3 2540.0,193.3 2545,250 C2550.0,306.7 2557.5,340.0 2540,380 C2522.5,420.0 2475.0,470.0 2440,490 C2405.0,510.0 2353.3,478.3 2330,500 C2306.7,521.7 2303.3,556.7 2300,620 C2296.7,683.3 2328.3,834.2 2310,880 C2291.7,925.8 2233.3,895.0 2190,895 C2146.7,895.0 2088.3,884.2 2050,880 C2011.7,875.8 1991.7,883.3 1960,870 C1928.3,856.7 1871.7,836.7 1860,800 C1848.3,763.3 1876.7,700.0 1890,650 C1903.3,600.0 1925.0,550.0 1940,500 C1955.0,450.0 1973.3,401.7 1980,350 C1986.7,298.3 1968.3,225.8 1980,190Z"/><path d="M1870,985 L2005,1020 L1985,1055Z"/><path d="M1138.5,1214.6 C1138.2,1216.0 1135.9,1217.3 1132.3,1217.8 C1128.7,1218.3 1123.2,1218.3 1116.9,1217.6 C1110.6,1216.9 1102.6,1215.5 1094.5,1213.7 C1086.4,1211.9 1077.2,1208.8 1068.5,1207.0 C1059.8,1205.2 1050.2,1204.3 1042.1,1202.6 C1034.0,1200.9 1026.0,1199.0 1020.0,1197.0 C1014.0,1195.0 1008.9,1192.8 1005.8,1190.9 C1002.7,1189.0 1001.2,1186.9 1001.5,1185.4 C1001.8,1184.0 1004.1,1182.7 1007.7,1182.2 C1011.3,1181.7 1016.8,1181.7 1023.1,1182.4 C1029.4,1183.1 1037.4,1184.5 1045.5,1186.3 C1053.6,1188.1 1062.8,1191.2 1071.5,1193.0 C1080.2,1194.8 1089.8,1195.7 1097.9,1197.4 C1106.0,1199.1 1114.0,1201.0 1120.0,1203.0 C1126.0,1205.0 1131.1,1207.2 1134.2,1209.1 C1137.3,1211.0 1138.8,1213.1 1138.5,1214.6Z"/></g><g transform="translate(0,0) scale(1.000000)" fill="#766f4e" stroke="#766f4e" ><path d="M1509.2,1317.5 L1522.8,1294.8 L1528.5,1296 L1516,1315.3Z"/><path d="M1528.5,1322 C1530.0,1318.6 1540.6,1304.7 1545.5,1299.4 C1550.4,1294.1 1556.3,1289.9 1558,1290.3 C1559.7,1290.7 1559.3,1296.7 1555.7,1301.6 C1552.1,1306.5 1540.9,1316.4 1536.4,1319.8 C1531.9,1323.2 1527.0,1325.4 1528.5,1322Z"/></g></g>
<g opacity="0.9"><g transform="translate(720,715) scale(0.237699)" fill="#c496a8" stroke="#c496a8" ><path d="M990,520 C1012.5,511.7 1039.2,542.5 1060,560 C1080.8,577.5 1118.3,601.7 1115,625 C1111.7,648.3 1065.8,690.8 1040,700 C1014.2,709.2 979.2,695.0 960,680 C940.8,665.0 920.0,636.7 925,610 C930.0,583.3 967.5,528.3 990,520Z"/><path d="M915.2,606.3 C913.0,608.9 908.9,610.7 904.3,610.7 C899.7,610.7 893.8,609.1 887.8,606.1 C881.8,603.1 875.0,598.1 868.6,592.6 C862.2,587.1 856.2,578.8 849.2,572.9 C842.2,567.0 833.0,562.6 826.4,557.2 C819.8,551.8 813.8,546.0 809.8,540.7 C805.8,535.4 803.2,529.7 802.4,525.2 C801.6,520.7 802.6,516.4 804.8,513.7 C807.0,511.1 811.1,509.3 815.7,509.3 C820.3,509.3 826.2,510.9 832.2,513.9 C838.2,516.9 845.0,521.9 851.4,527.4 C857.8,532.9 863.8,541.2 870.8,547.1 C877.8,553.0 887.0,557.4 893.6,562.8 C900.2,568.2 906.2,574.0 910.2,579.3 C914.2,584.6 916.8,590.3 917.6,594.8 C918.4,599.3 917.4,603.6 915.2,606.3Z"/><ellipse cx="885" cy="480" rx="65" ry="32" transform="rotate(0 885 480)"/><path d="M1181.5,557.3 C1179.8,561.0 1175.0,564.0 1168.6,564.8 C1162.2,565.6 1153.0,564.8 1143.1,562.1 C1133.2,559.5 1121.0,554.6 1109.1,548.9 C1097.2,543.2 1084.5,533.9 1071.6,527.9 C1058.7,521.9 1043.5,518.2 1031.5,512.7 C1019.5,507.3 1007.9,501.1 999.5,495.2 C991.1,489.3 984.5,482.8 981.0,477.4 C977.5,472.0 976.8,466.4 978.5,462.7 C980.2,459.0 985.0,456.0 991.4,455.2 C997.8,454.4 1007.0,455.2 1016.9,457.9 C1026.8,460.5 1039.0,465.4 1050.9,471.1 C1062.8,476.8 1075.5,486.1 1088.4,492.1 C1101.3,498.1 1116.5,501.9 1128.5,507.3 C1140.5,512.8 1152.1,518.9 1160.5,524.8 C1168.9,530.7 1175.5,537.2 1179.0,542.6 C1182.5,548.0 1183.2,553.6 1181.5,557.3Z"/><path d="M1166.4,457.2 C1165.8,459.6 1162.3,461.6 1156.8,462.3 C1151.3,463.0 1142.9,462.7 1133.5,461.3 C1124.1,459.9 1112.1,457.1 1100.2,453.8 C1088.3,450.5 1074.8,445.1 1061.9,441.6 C1049.0,438.1 1034.6,436.1 1022.6,433.0 C1010.6,429.9 999.0,426.3 990.1,422.8 C981.2,419.3 973.8,415.4 969.4,412.1 C965.0,408.8 963.0,405.2 963.6,402.8 C964.2,400.4 967.7,398.4 973.2,397.7 C978.7,397.0 987.1,397.3 996.5,398.7 C1005.9,400.1 1017.9,402.9 1029.8,406.2 C1041.7,409.5 1055.2,414.9 1068.1,418.4 C1081.0,421.9 1095.4,423.9 1107.4,427.0 C1119.4,430.1 1131.0,433.7 1139.9,437.2 C1148.8,440.7 1156.2,444.6 1160.6,447.9 C1165.0,451.2 1167.0,454.8 1166.4,457.2Z"/><path d="M1205.7,390.9 C1205.5,393.1 1203.5,395.5 1200.0,397.1 C1196.5,398.7 1191.1,400.0 1184.9,400.4 C1178.7,400.8 1170.8,400.5 1162.8,399.7 C1154.8,398.9 1145.7,396.6 1137.1,395.8 C1128.5,395.1 1119.0,395.8 1111.0,395.2 C1103.0,394.6 1095.1,393.5 1089.1,392.0 C1083.1,390.5 1077.9,388.3 1074.8,386.2 C1071.7,384.1 1070.1,381.3 1070.3,379.1 C1070.5,376.9 1072.5,374.5 1076.0,372.9 C1079.5,371.3 1084.9,370.0 1091.1,369.6 C1097.3,369.2 1105.2,369.5 1113.2,370.3 C1121.2,371.1 1130.3,373.4 1138.9,374.2 C1147.5,374.9 1157.0,374.2 1165.0,374.8 C1173.0,375.4 1180.9,376.5 1186.9,378.0 C1192.9,379.5 1198.1,381.7 1201.2,383.8 C1204.3,385.9 1205.9,388.7 1205.7,390.9Z"/><path d="M950.0,358.0 C950.0,359.9 948.3,362.0 945.3,363.6 C942.3,365.2 937.4,366.6 931.8,367.4 C926.2,368.2 919.0,368.5 911.7,368.4 C904.4,368.3 895.9,367.0 888.0,367.0 C880.1,367.0 871.6,368.3 864.3,368.4 C857.0,368.5 849.8,368.2 844.2,367.4 C838.6,366.6 833.7,365.2 830.7,363.6 C827.7,362.0 826.0,359.9 826.0,358.0 C826.0,356.1 827.7,354.0 830.7,352.4 C833.7,350.8 838.6,349.4 844.2,348.6 C849.8,347.8 857.0,347.5 864.3,347.6 C871.6,347.7 880.1,349.0 888.0,349.0 C895.9,349.0 904.4,347.7 911.7,347.6 C919.0,347.5 926.2,347.8 931.8,348.6 C937.4,349.4 942.3,350.8 945.3,352.4 C948.3,354.0 950.0,356.1 950.0,358.0Z"/><path d="M1112.9,271.6 C1113.0,272.8 1111.3,274.4 1108.2,275.6 C1105.1,276.8 1100.0,278.0 1094.2,278.8 C1088.4,279.6 1080.9,280.2 1073.2,280.6 C1065.5,281.0 1056.6,280.6 1048.3,281.0 C1040.0,281.4 1031.2,282.8 1023.5,283.2 C1015.9,283.6 1008.3,283.8 1002.4,283.6 C996.5,283.4 991.4,282.7 988.2,281.8 C985.0,280.9 983.2,279.6 983.1,278.4 C983.0,277.2 984.7,275.6 987.8,274.4 C990.9,273.2 996.0,272.0 1001.8,271.2 C1007.6,270.4 1015.1,269.8 1022.8,269.4 C1030.5,269.0 1039.4,269.4 1047.7,269.0 C1056.0,268.6 1064.8,267.2 1072.5,266.8 C1080.2,266.4 1087.7,266.2 1093.6,266.4 C1099.5,266.6 1104.6,267.3 1107.8,268.2 C1111.0,269.1 1112.8,270.4 1112.9,271.6Z"/><path d="M1102.9,301.6 C1103.0,302.8 1101.3,304.4 1098.2,305.6 C1095.1,306.8 1090.0,308.0 1084.2,308.8 C1078.4,309.6 1070.9,310.2 1063.2,310.6 C1055.5,311.0 1046.6,310.6 1038.3,311.0 C1030.0,311.4 1021.1,312.8 1013.5,313.2 C1005.9,313.6 998.3,313.8 992.4,313.6 C986.5,313.4 981.4,312.7 978.2,311.8 C975.0,310.9 973.2,309.6 973.1,308.4 C973.0,307.2 974.7,305.6 977.8,304.4 C980.9,303.2 986.0,302.0 991.8,301.2 C997.6,300.4 1005.1,299.8 1012.8,299.4 C1020.4,299.0 1029.4,299.4 1037.7,299.0 C1046.0,298.6 1054.8,297.2 1062.5,296.8 C1070.2,296.4 1077.7,296.2 1083.6,296.4 C1089.5,296.6 1094.6,297.3 1097.8,298.2 C1101.0,299.1 1102.8,300.4 1102.9,301.6Z"/><path d="M1228.1,235.8 C1227.9,237.0 1226.0,238.1 1222.8,238.6 C1219.6,239.1 1214.7,239.2 1209.1,238.8 C1203.5,238.4 1196.4,237.3 1189.2,236.0 C1182.0,234.7 1173.8,232.3 1166.0,230.9 C1158.2,229.5 1149.6,228.9 1142.4,227.7 C1135.2,226.5 1128.1,225.0 1122.7,223.5 C1117.3,222.0 1112.7,220.2 1109.9,218.7 C1107.1,217.1 1105.7,215.4 1105.9,214.2 C1106.1,213.0 1108.0,211.9 1111.2,211.4 C1114.4,210.9 1119.3,210.8 1124.9,211.2 C1130.5,211.6 1137.6,212.7 1144.8,214.0 C1152.0,215.3 1160.2,217.7 1168.0,219.1 C1175.8,220.5 1184.4,221.1 1191.6,222.3 C1198.8,223.5 1205.9,225.0 1211.3,226.5 C1216.7,228.0 1221.3,229.8 1224.1,231.3 C1226.9,232.9 1228.3,234.6 1228.1,235.8Z"/><path d="M1320.4,347.7 C1319.9,349.6 1316.5,351.1 1311.0,351.3 C1305.5,351.6 1297.0,350.9 1287.5,349.2 C1278.0,347.5 1265.9,344.7 1253.7,341.4 C1241.5,338.1 1227.7,332.8 1214.5,329.3 C1201.3,325.8 1186.8,323.4 1174.6,320.2 C1162.4,317.0 1150.4,313.5 1141.3,310.1 C1132.2,306.8 1124.6,303.1 1120.0,300.1 C1115.4,297.1 1113.1,294.2 1113.6,292.3 C1114.1,290.4 1117.5,288.9 1123.0,288.7 C1128.5,288.4 1137.0,289.1 1146.5,290.8 C1156.0,292.5 1168.1,295.3 1180.3,298.6 C1192.5,301.9 1206.3,307.2 1219.5,310.7 C1232.7,314.2 1247.2,316.6 1259.4,319.8 C1271.6,323.0 1283.6,326.5 1292.7,329.9 C1301.8,333.2 1309.4,336.9 1314.0,339.9 C1318.6,342.9 1320.9,345.8 1320.4,347.7Z"/><path d="M1303.9,309.5 C1303.2,311.1 1300.7,312.1 1297.2,312.1 C1293.7,312.1 1288.6,311.1 1283.0,309.3 C1277.4,307.5 1270.3,304.6 1263.4,301.3 C1256.5,298.0 1249.0,293.1 1241.5,289.6 C1234.0,286.1 1225.3,283.5 1218.3,280.3 C1211.3,277.1 1204.7,273.7 1199.7,270.5 C1194.7,267.3 1190.7,264.0 1188.4,261.3 C1186.1,258.6 1185.4,256.1 1186.1,254.5 C1186.8,252.9 1189.3,251.9 1192.8,251.9 C1196.3,251.9 1201.4,252.9 1207.0,254.7 C1212.6,256.5 1219.7,259.4 1226.6,262.7 C1233.5,266.0 1241.0,270.9 1248.5,274.4 C1256.0,277.9 1264.7,280.5 1271.7,283.7 C1278.7,286.9 1285.3,290.3 1290.3,293.5 C1295.3,296.7 1299.3,300.0 1301.6,302.7 C1303.9,305.4 1304.6,307.9 1303.9,309.5Z"/><path d="M1366.1,284.2 C1365.6,285.6 1363.3,286.6 1359.9,286.7 C1356.5,286.8 1351.3,286.2 1345.6,284.8 C1339.9,283.4 1332.7,281.1 1325.5,278.4 C1318.3,275.7 1310.3,271.6 1302.5,268.8 C1294.7,266.0 1286.0,263.9 1278.8,261.3 C1271.6,258.7 1264.5,255.9 1259.2,253.3 C1253.9,250.7 1249.5,247.8 1247.0,245.6 C1244.5,243.3 1243.4,241.2 1243.9,239.8 C1244.4,238.4 1246.7,237.4 1250.1,237.3 C1253.5,237.2 1258.7,237.8 1264.4,239.2 C1270.1,240.6 1277.3,242.9 1284.5,245.6 C1291.7,248.3 1299.7,252.3 1307.5,255.2 C1315.3,258.1 1324.0,260.1 1331.2,262.7 C1338.4,265.3 1345.5,268.1 1350.8,270.7 C1356.1,273.3 1360.5,276.1 1363.0,278.4 C1365.5,280.6 1366.6,282.8 1366.1,284.2Z"/><path d="M1380.0,159.5 C1379.4,160.4 1377.0,160.5 1373.3,159.5 C1369.6,158.5 1364.2,156.3 1358.1,153.4 C1352.0,150.5 1344.3,146.2 1336.7,141.8 C1329.1,137.4 1320.6,131.5 1312.3,126.7 C1304.0,121.9 1294.7,117.5 1287.0,113.1 C1279.3,108.7 1271.9,104.1 1266.3,100.3 C1260.7,96.5 1256.0,92.8 1253.3,90.2 C1250.6,87.6 1249.4,85.5 1250.0,84.5 C1250.6,83.5 1253.0,83.5 1256.7,84.5 C1260.4,85.5 1265.8,87.6 1271.9,90.6 C1278.0,93.5 1285.7,97.8 1293.3,102.2 C1300.9,106.7 1309.4,112.5 1317.7,117.3 C1326.0,122.1 1335.3,126.5 1343.0,130.9 C1350.7,135.3 1358.1,139.9 1363.7,143.7 C1369.3,147.5 1374.0,151.2 1376.7,153.8 C1379.4,156.4 1380.6,158.6 1380.0,159.5Z"/><path d="M1300,60 L1330,40 L1395,135 L1375,145Z"/><path d="M1440.2,224.0 C1439.6,225.0 1437.6,225.3 1434.7,224.7 C1431.8,224.1 1427.5,222.6 1422.7,220.4 C1417.9,218.2 1412.0,214.9 1406.1,211.5 C1400.2,208.1 1393.7,203.4 1387.3,199.7 C1380.9,196.0 1373.5,192.7 1367.6,189.3 C1361.7,185.9 1356.0,182.4 1351.7,179.4 C1347.4,176.4 1343.9,173.3 1341.9,171.1 C1339.9,168.9 1339.2,167.0 1339.8,166.0 C1340.4,165.0 1342.4,164.7 1345.3,165.3 C1348.2,165.9 1352.5,167.4 1357.3,169.6 C1362.1,171.8 1368.0,175.1 1373.9,178.5 C1379.8,181.9 1386.3,186.6 1392.7,190.3 C1399.1,194.0 1406.5,197.3 1412.4,200.7 C1418.3,204.1 1424.0,207.6 1428.3,210.6 C1432.6,213.6 1436.1,216.7 1438.1,218.9 C1440.1,221.1 1440.8,223.0 1440.2,224.0Z"/><path d="M1440.2,267.0 C1439.5,268.2 1437.4,268.7 1434.4,268.3 C1431.4,267.9 1426.9,266.6 1422.1,264.5 C1417.3,262.4 1411.3,259.2 1405.4,255.7 C1399.5,252.2 1393.1,247.4 1386.7,243.7 C1380.3,240.0 1373.0,236.9 1367.0,233.5 C1361.0,230.1 1355.2,226.5 1351.0,223.4 C1346.8,220.3 1343.5,217.1 1341.6,214.7 C1339.7,212.3 1339.1,210.2 1339.8,209.0 C1340.5,207.8 1342.6,207.3 1345.6,207.7 C1348.6,208.1 1353.1,209.4 1357.9,211.5 C1362.7,213.6 1368.7,216.8 1374.6,220.3 C1380.5,223.8 1386.9,228.6 1393.3,232.3 C1399.7,236.0 1407.0,239.1 1413.0,242.5 C1419.0,245.9 1424.8,249.5 1429.0,252.6 C1433.2,255.7 1436.5,258.9 1438.4,261.3 C1440.3,263.7 1440.9,265.8 1440.2,267.0Z"/><path d="M1645.4,229.6 C1644.8,230.8 1642.5,231.4 1638.9,231.0 C1635.3,230.6 1630.0,229.2 1624.0,227.1 C1618.0,225.0 1610.5,221.8 1603.0,218.3 C1595.5,214.8 1587.3,209.8 1579.2,206.0 C1571.1,202.2 1562.0,199.0 1554.5,195.6 C1547.0,192.2 1539.7,188.5 1534.2,185.3 C1528.7,182.1 1524.3,178.9 1521.7,176.4 C1519.1,173.9 1518.0,171.6 1518.6,170.4 C1519.2,169.2 1521.5,168.6 1525.1,169.0 C1528.7,169.4 1534.0,170.8 1540.0,172.9 C1546.0,175.0 1553.5,178.2 1561.0,181.7 C1568.5,185.2 1576.7,190.2 1584.8,194.0 C1592.9,197.8 1602.0,201.0 1609.5,204.4 C1617.0,207.8 1624.3,211.5 1629.8,214.7 C1635.3,217.9 1639.7,221.1 1642.3,223.6 C1644.9,226.1 1646.0,228.4 1645.4,229.6Z"/><path d="M1647.5,248.2 C1647.1,249.2 1645.1,249.9 1641.9,249.6 C1638.7,249.3 1633.9,248.2 1628.5,246.6 C1623.1,244.9 1616.5,242.5 1609.7,239.7 C1603.0,236.9 1595.3,233.0 1588.0,230.0 C1580.7,227.0 1572.5,224.6 1565.7,221.9 C1558.9,219.2 1552.2,216.4 1547.2,213.8 C1542.2,211.2 1538.0,208.6 1535.6,206.6 C1533.1,204.6 1532.1,202.8 1532.5,201.8 C1532.9,200.8 1534.9,200.1 1538.1,200.4 C1541.3,200.7 1546.1,201.8 1551.5,203.4 C1556.9,205.1 1563.5,207.5 1570.3,210.3 C1577.0,213.1 1584.7,217.0 1592.0,220.0 C1599.3,223.0 1607.5,225.4 1614.3,228.1 C1621.1,230.8 1627.8,233.6 1632.8,236.2 C1637.8,238.8 1642.0,241.4 1644.4,243.4 C1646.9,245.4 1647.9,247.2 1647.5,248.2Z"/><path d="M940,95 C957.5,86.7 958.3,107.5 945,130 C931.7,152.5 880.0,214.2 860,230 C840.0,245.8 828.3,233.3 825,225 C821.7,216.7 820.8,201.7 840,180 C859.2,158.3 922.5,103.3 940,95Z"/><path d="M1432.9,533.8 C1431.8,534.5 1429.2,533.4 1425.9,530.4 C1422.6,527.4 1417.9,522.2 1413.1,515.9 C1408.3,509.6 1402.5,501.1 1396.9,492.4 C1391.3,483.7 1385.6,473.0 1379.5,463.6 C1373.4,454.2 1365.9,444.6 1360.2,435.9 C1354.5,427.2 1349.2,418.6 1345.4,411.6 C1341.6,404.6 1338.7,398.2 1337.3,394.0 C1335.9,389.8 1336.0,386.9 1337.1,386.2 C1338.2,385.5 1340.8,386.6 1344.1,389.6 C1347.4,392.6 1352.1,397.8 1356.9,404.1 C1361.7,410.4 1367.5,418.9 1373.1,427.6 C1378.7,436.3 1384.4,447.0 1390.5,456.4 C1396.6,465.8 1404.1,475.4 1409.8,484.1 C1415.5,492.8 1420.8,501.4 1424.6,508.4 C1428.4,515.4 1431.3,521.8 1432.7,526.0 C1434.1,530.2 1434.0,533.1 1432.9,533.8Z"/><path d="M1580.9,434.8 C1580.0,435.8 1577.8,435.9 1575.0,435.0 C1572.2,434.1 1568.4,432.0 1564.3,429.1 C1560.2,426.2 1555.3,422.2 1550.5,417.8 C1545.7,413.4 1540.8,407.6 1535.6,402.9 C1530.4,398.2 1524.0,393.9 1519.2,389.6 C1514.4,385.3 1509.8,380.9 1506.5,377.1 C1503.2,373.3 1500.7,369.6 1499.5,367.0 C1498.3,364.4 1498.2,362.2 1499.1,361.2 C1500.0,360.2 1502.2,360.1 1505.0,361.0 C1507.8,361.9 1511.6,364.0 1515.7,366.9 C1519.8,369.8 1524.7,373.8 1529.5,378.2 C1534.3,382.6 1539.2,388.4 1544.4,393.1 C1549.6,397.8 1556.0,402.1 1560.8,406.4 C1565.6,410.7 1570.2,415.1 1573.5,418.9 C1576.8,422.7 1579.3,426.4 1580.5,429.0 C1581.7,431.6 1581.8,433.8 1580.9,434.8Z"/><path d="M1650.6,602.8 C1649.7,603.8 1647.7,604.1 1645.0,603.2 C1642.3,602.4 1638.6,600.4 1634.7,597.7 C1630.8,595.0 1626.2,591.1 1621.7,587.0 C1617.2,582.9 1612.5,577.3 1607.6,572.9 C1602.7,568.5 1596.7,564.5 1592.1,560.4 C1587.5,556.3 1583.2,552.1 1580.1,548.5 C1577.0,544.9 1574.7,541.4 1573.6,538.9 C1572.5,536.4 1572.5,534.2 1573.4,533.2 C1574.3,532.2 1576.3,531.9 1579.0,532.8 C1581.7,533.6 1585.4,535.6 1589.3,538.3 C1593.2,541.0 1597.8,544.9 1602.3,549.0 C1606.8,553.1 1611.5,558.7 1616.4,563.1 C1621.3,567.5 1627.3,571.5 1631.9,575.6 C1636.5,579.7 1640.8,583.9 1643.9,587.5 C1647.0,591.1 1649.3,594.6 1650.4,597.1 C1651.5,599.6 1651.5,601.8 1650.6,602.8Z"/><path d="M1480.1,701.2 C1479.2,702.0 1477.3,702.1 1475.2,701.3 C1473.1,700.5 1470.1,698.7 1467.2,696.2 C1464.3,693.8 1460.9,690.3 1457.6,686.6 C1454.3,682.9 1451.1,678.0 1447.5,674.0 C1443.9,670.0 1439.4,666.4 1436.1,662.7 C1432.8,659.1 1429.6,655.3 1427.5,652.1 C1425.4,648.9 1423.9,645.8 1423.3,643.6 C1422.7,641.4 1423.0,639.6 1423.9,638.8 C1424.8,638.0 1426.7,637.9 1428.8,638.7 C1430.9,639.5 1433.9,641.3 1436.8,643.8 C1439.7,646.2 1443.1,649.7 1446.4,653.4 C1449.7,657.1 1452.9,662.0 1456.5,666.0 C1460.1,670.0 1464.6,673.6 1467.9,677.3 C1471.2,680.9 1474.4,684.7 1476.5,687.9 C1478.6,691.1 1480.1,694.2 1480.7,696.4 C1481.3,698.6 1481.0,700.4 1480.1,701.2Z"/><path d="M1769.8,473.8 C1769.1,474.5 1767.4,474.5 1765.3,473.5 C1763.2,472.5 1760.2,470.6 1757.0,468.0 C1753.8,465.4 1749.9,461.9 1746.2,458.1 C1742.5,454.3 1738.6,449.4 1734.6,445.4 C1730.5,441.3 1725.7,437.5 1721.9,433.8 C1718.1,430.1 1714.6,426.2 1712.0,423.0 C1709.4,419.8 1707.5,416.8 1706.5,414.7 C1705.5,412.6 1705.5,410.9 1706.2,410.2 C1706.9,409.5 1708.6,409.5 1710.7,410.5 C1712.8,411.5 1715.8,413.4 1719.0,416.0 C1722.2,418.6 1726.1,422.1 1729.8,425.9 C1733.5,429.7 1737.4,434.6 1741.4,438.6 C1745.5,442.7 1750.3,446.5 1754.1,450.2 C1757.9,453.9 1761.4,457.8 1764.0,461.0 C1766.6,464.2 1768.5,467.2 1769.5,469.3 C1770.5,471.4 1770.5,473.1 1769.8,473.8Z"/><path d="M1579.3,378.0 C1578.4,378.7 1577.0,378.9 1575.3,378.4 C1573.6,377.9 1571.4,376.7 1569.3,374.9 C1567.2,373.1 1564.8,370.5 1562.6,367.8 C1560.4,365.1 1558.4,361.4 1555.9,358.5 C1553.4,355.6 1550.1,352.9 1547.8,350.2 C1545.5,347.5 1543.5,344.8 1542.1,342.4 C1540.7,340.0 1539.8,337.6 1539.6,335.9 C1539.4,334.2 1539.8,332.7 1540.7,332.0 C1541.6,331.3 1543.0,331.1 1544.7,331.6 C1546.4,332.1 1548.6,333.3 1550.7,335.1 C1552.8,336.9 1555.2,339.5 1557.4,342.2 C1559.6,344.9 1561.6,348.6 1564.1,351.5 C1566.6,354.4 1569.9,357.1 1572.2,359.8 C1574.5,362.5 1576.5,365.2 1577.9,367.6 C1579.3,370.0 1580.2,372.4 1580.4,374.1 C1580.6,375.8 1580.2,377.3 1579.3,378.0Z"/><path d="M1657.2,336.6 C1656.6,337.0 1655.4,336.9 1654.1,336.0 C1652.8,335.1 1650.9,333.5 1649.1,331.5 C1647.3,329.5 1645.2,326.7 1643.2,323.8 C1641.2,320.9 1639.3,317.2 1637.1,314.1 C1634.9,311.0 1632.0,307.9 1630.0,305.0 C1628.0,302.1 1626.1,299.2 1624.8,296.8 C1623.5,294.4 1622.6,292.2 1622.3,290.6 C1622.0,289.0 1622.2,287.8 1622.8,287.4 C1623.4,287.0 1624.6,287.1 1625.9,288.0 C1627.2,288.9 1629.1,290.5 1630.9,292.5 C1632.7,294.5 1634.8,297.3 1636.8,300.2 C1638.8,303.1 1640.7,306.8 1642.9,309.9 C1645.1,313.0 1648.0,316.1 1650.0,319.0 C1652.0,321.9 1653.9,324.8 1655.2,327.2 C1656.5,329.6 1657.4,331.8 1657.7,333.4 C1658.0,335.0 1657.8,336.2 1657.2,336.6Z"/></g><g transform="translate(730,720) scale(0.234192)" fill="#c496a8" stroke="#c496a8" ><path d="M370,380 C380.8,355.8 397.5,371.7 420,375 C442.5,378.3 488.3,395.0 505,400 C521.7,405.0 510.8,405.8 520,405 C529.2,404.2 541.7,392.5 560,395 C578.3,397.5 613.3,410.0 630,420 C646.7,430.0 658.3,443.3 660,455 C661.7,466.7 650.0,465.8 640,490 C630.0,514.2 613.3,565.0 600,600 C586.7,635.0 567.5,666.7 560,700 C552.5,733.3 557.5,778.3 555,800 C552.5,821.7 555.8,820.0 545,830 C534.2,840.0 510.8,858.3 490,860 C469.2,861.7 441.7,850.0 420,840 C398.3,830.0 375.0,806.7 360,800 C345.0,793.3 334.2,788.3 330,800 C325.8,811.7 353.3,854.2 335,870 C316.7,885.8 240.8,906.7 220,895 C199.2,883.3 212.5,832.5 210,800 C207.5,767.5 203.3,721.7 205,700 C206.7,678.3 209.2,675.0 220,670 C230.8,665.0 260.0,676.7 270,670 C280.0,663.3 267.5,640.0 280,630 C292.5,620.0 332.5,628.3 345,610 C357.5,591.7 350.8,558.3 355,520 C359.2,481.7 359.2,404.2 370,380Z"/><path d="M95,490 L140,475 L150,530 L185,500 L220,530 L210,620 L160,660 L150,600 L100,640 L85,600Z"/><path d="M45,730 L60,740 L75,760 L110,740 L130,760 L140,920 L110,900 L80,930 L85,1010 L50,940 L20,880 L30,840Z"/><path d="M710,590 L730,600 L800,660 L790,740 L760,845 L720,830 L700,760 L660,770 L650,660Z"/><path d="M220,140 L240,135 L200,220 L170,245 L165,230 L190,180Z"/><path d="M310,135 C318.3,124.2 336.7,122.5 350,125 C363.3,127.5 382.5,141.7 390,150 C397.5,158.3 398.3,170.0 395,175 C391.7,180.0 380.8,175.8 370,180 C359.2,184.2 343.3,191.7 330,200 C316.7,208.3 300.0,211.7 290,230 C280.0,248.3 277.5,295.8 270,310 C262.5,324.2 250.8,318.3 245,315 C239.2,311.7 230.8,305.8 235,290 C239.2,274.2 259.2,236.7 270,220 C280.8,203.3 293.3,204.2 300,190 C306.7,175.8 301.7,145.8 310,135Z"/><path d="M700,60 C723.3,45.0 782.5,30.8 800,30 C817.5,29.2 818.3,35.0 805,55 C791.7,75.0 745.8,123.3 720,150 C694.2,176.7 668.3,203.3 650,215 C631.7,226.7 617.5,224.2 610,220 C602.5,215.8 596.7,206.7 605,190 C613.3,173.3 644.2,141.7 660,120 C675.8,98.3 676.7,75.0 700,60Z"/><path d="M585,290 L650,330 L560,380Z"/><ellipse cx="285" cy="1168" rx="48" ry="27" transform="rotate(0 285 1168)"/><path d="M650,1140 C655.0,1144.2 650.0,1159.2 640,1175 C630.0,1190.8 610.0,1214.2 590,1235 C570.0,1255.8 540.0,1283.3 520,1300 C500.0,1316.7 480.8,1331.7 470,1335 C459.2,1338.3 451.7,1332.5 455,1320 C458.3,1307.5 472.5,1281.7 490,1260 C507.5,1238.3 540.0,1208.3 560,1190 C580.0,1171.7 595.0,1158.3 610,1150 C625.0,1141.7 645.0,1135.8 650,1140Z"/><circle cx="285" cy="1085" r="10"/><circle cx="255" cy="1105" r="8"/><circle cx="625" cy="100" r="10"/><circle cx="615" cy="125" r="8"/><path d="M230,990 L260,930" stroke-width="5" stroke-linecap="round" fill="none"/><path d="M255,985 L278,935" stroke-width="5" stroke-linecap="round" fill="none"/><path d="M350,985 L400,930" stroke-width="4" stroke-linecap="round" fill="none"/><path d="M480,1170 L530,960" stroke-width="5" stroke-linecap="round" fill="none"/><path d="M605,1095 L660,1020" stroke-width="5" stroke-linecap="round" fill="none"/><path d="M640,1080 L700,1025" stroke-width="5" stroke-linecap="round" fill="none"/><path d="M720,1050 L770,1020" stroke-width="5" stroke-linecap="round" fill="none"/><path d="M715,200 L765,150" stroke-width="4" stroke-linecap="round" fill="none"/><path d="M730,225 L780,185" stroke-width="4" stroke-linecap="round" fill="none"/></g></g>
<g clip-path="url(#cp5)"><g transform="translate(720,715) scale(0.237699)" fill="#c496a8" stroke="#c496a8" ><path d="M990,520 C1012.5,511.7 1039.2,542.5 1060,560 C1080.8,577.5 1118.3,601.7 1115,625 C1111.7,648.3 1065.8,690.8 1040,700 C1014.2,709.2 979.2,695.0 960,680 C940.8,665.0 920.0,636.7 925,610 C930.0,583.3 967.5,528.3 990,520Z"/><path d="M915.2,606.3 C913.0,608.9 908.9,610.7 904.3,610.7 C899.7,610.7 893.8,609.1 887.8,606.1 C881.8,603.1 875.0,598.1 868.6,592.6 C862.2,587.1 856.2,578.8 849.2,572.9 C842.2,567.0 833.0,562.6 826.4,557.2 C819.8,551.8 813.8,546.0 809.8,540.7 C805.8,535.4 803.2,529.7 802.4,525.2 C801.6,520.7 802.6,516.4 804.8,513.7 C807.0,511.1 811.1,509.3 815.7,509.3 C820.3,509.3 826.2,510.9 832.2,513.9 C838.2,516.9 845.0,521.9 851.4,527.4 C857.8,532.9 863.8,541.2 870.8,547.1 C877.8,553.0 887.0,557.4 893.6,562.8 C900.2,568.2 906.2,574.0 910.2,579.3 C914.2,584.6 916.8,590.3 917.6,594.8 C918.4,599.3 917.4,603.6 915.2,606.3Z"/><ellipse cx="885" cy="480" rx="65" ry="32" transform="rotate(0 885 480)"/><path d="M1181.5,557.3 C1179.8,561.0 1175.0,564.0 1168.6,564.8 C1162.2,565.6 1153.0,564.8 1143.1,562.1 C1133.2,559.5 1121.0,554.6 1109.1,548.9 C1097.2,543.2 1084.5,533.9 1071.6,527.9 C1058.7,521.9 1043.5,518.2 1031.5,512.7 C1019.5,507.3 1007.9,501.1 999.5,495.2 C991.1,489.3 984.5,482.8 981.0,477.4 C977.5,472.0 976.8,466.4 978.5,462.7 C980.2,459.0 985.0,456.0 991.4,455.2 C997.8,454.4 1007.0,455.2 1016.9,457.9 C1026.8,460.5 1039.0,465.4 1050.9,471.1 C1062.8,476.8 1075.5,486.1 1088.4,492.1 C1101.3,498.1 1116.5,501.9 1128.5,507.3 C1140.5,512.8 1152.1,518.9 1160.5,524.8 C1168.9,530.7 1175.5,537.2 1179.0,542.6 C1182.5,548.0 1183.2,553.6 1181.5,557.3Z"/><path d="M1166.4,457.2 C1165.8,459.6 1162.3,461.6 1156.8,462.3 C1151.3,463.0 1142.9,462.7 1133.5,461.3 C1124.1,459.9 1112.1,457.1 1100.2,453.8 C1088.3,450.5 1074.8,445.1 1061.9,441.6 C1049.0,438.1 1034.6,436.1 1022.6,433.0 C1010.6,429.9 999.0,426.3 990.1,422.8 C981.2,419.3 973.8,415.4 969.4,412.1 C965.0,408.8 963.0,405.2 963.6,402.8 C964.2,400.4 967.7,398.4 973.2,397.7 C978.7,397.0 987.1,397.3 996.5,398.7 C1005.9,400.1 1017.9,402.9 1029.8,406.2 C1041.7,409.5 1055.2,414.9 1068.1,418.4 C1081.0,421.9 1095.4,423.9 1107.4,427.0 C1119.4,430.1 1131.0,433.7 1139.9,437.2 C1148.8,440.7 1156.2,444.6 1160.6,447.9 C1165.0,451.2 1167.0,454.8 1166.4,457.2Z"/><path d="M1205.7,390.9 C1205.5,393.1 1203.5,395.5 1200.0,397.1 C1196.5,398.7 1191.1,400.0 1184.9,400.4 C1178.7,400.8 1170.8,400.5 1162.8,399.7 C1154.8,398.9 1145.7,396.6 1137.1,395.8 C1128.5,395.1 1119.0,395.8 1111.0,395.2 C1103.0,394.6 1095.1,393.5 1089.1,392.0 C1083.1,390.5 1077.9,388.3 1074.8,386.2 C1071.7,384.1 1070.1,381.3 1070.3,379.1 C1070.5,376.9 1072.5,374.5 1076.0,372.9 C1079.5,371.3 1084.9,370.0 1091.1,369.6 C1097.3,369.2 1105.2,369.5 1113.2,370.3 C1121.2,371.1 1130.3,373.4 1138.9,374.2 C1147.5,374.9 1157.0,374.2 1165.0,374.8 C1173.0,375.4 1180.9,376.5 1186.9,378.0 C1192.9,379.5 1198.1,381.7 1201.2,383.8 C1204.3,385.9 1205.9,388.7 1205.7,390.9Z"/><path d="M950.0,358.0 C950.0,359.9 948.3,362.0 945.3,363.6 C942.3,365.2 937.4,366.6 931.8,367.4 C926.2,368.2 919.0,368.5 911.7,368.4 C904.4,368.3 895.9,367.0 888.0,367.0 C880.1,367.0 871.6,368.3 864.3,368.4 C857.0,368.5 849.8,368.2 844.2,367.4 C838.6,366.6 833.7,365.2 830.7,363.6 C827.7,362.0 826.0,359.9 826.0,358.0 C826.0,356.1 827.7,354.0 830.7,352.4 C833.7,350.8 838.6,349.4 844.2,348.6 C849.8,347.8 857.0,347.5 864.3,347.6 C871.6,347.7 880.1,349.0 888.0,349.0 C895.9,349.0 904.4,347.7 911.7,347.6 C919.0,347.5 926.2,347.8 931.8,348.6 C937.4,349.4 942.3,350.8 945.3,352.4 C948.3,354.0 950.0,356.1 950.0,358.0Z"/><path d="M1112.9,271.6 C1113.0,272.8 1111.3,274.4 1108.2,275.6 C1105.1,276.8 1100.0,278.0 1094.2,278.8 C1088.4,279.6 1080.9,280.2 1073.2,280.6 C1065.5,281.0 1056.6,280.6 1048.3,281.0 C1040.0,281.4 1031.2,282.8 1023.5,283.2 C1015.9,283.6 1008.3,283.8 1002.4,283.6 C996.5,283.4 991.4,282.7 988.2,281.8 C985.0,280.9 983.2,279.6 983.1,278.4 C983.0,277.2 984.7,275.6 987.8,274.4 C990.9,273.2 996.0,272.0 1001.8,271.2 C1007.6,270.4 1015.1,269.8 1022.8,269.4 C1030.5,269.0 1039.4,269.4 1047.7,269.0 C1056.0,268.6 1064.8,267.2 1072.5,266.8 C1080.2,266.4 1087.7,266.2 1093.6,266.4 C1099.5,266.6 1104.6,267.3 1107.8,268.2 C1111.0,269.1 1112.8,270.4 1112.9,271.6Z"/><path d="M1102.9,301.6 C1103.0,302.8 1101.3,304.4 1098.2,305.6 C1095.1,306.8 1090.0,308.0 1084.2,308.8 C1078.4,309.6 1070.9,310.2 1063.2,310.6 C1055.5,311.0 1046.6,310.6 1038.3,311.0 C1030.0,311.4 1021.1,312.8 1013.5,313.2 C1005.9,313.6 998.3,313.8 992.4,313.6 C986.5,313.4 981.4,312.7 978.2,311.8 C975.0,310.9 973.2,309.6 973.1,308.4 C973.0,307.2 974.7,305.6 977.8,304.4 C980.9,303.2 986.0,302.0 991.8,301.2 C997.6,300.4 1005.1,299.8 1012.8,299.4 C1020.4,299.0 1029.4,299.4 1037.7,299.0 C1046.0,298.6 1054.8,297.2 1062.5,296.8 C1070.2,296.4 1077.7,296.2 1083.6,296.4 C1089.5,296.6 1094.6,297.3 1097.8,298.2 C1101.0,299.1 1102.8,300.4 1102.9,301.6Z"/><path d="M1228.1,235.8 C1227.9,237.0 1226.0,238.1 1222.8,238.6 C1219.6,239.1 1214.7,239.2 1209.1,238.8 C1203.5,238.4 1196.4,237.3 1189.2,236.0 C1182.0,234.7 1173.8,232.3 1166.0,230.9 C1158.2,229.5 1149.6,228.9 1142.4,227.7 C1135.2,226.5 1128.1,225.0 1122.7,223.5 C1117.3,222.0 1112.7,220.2 1109.9,218.7 C1107.1,217.1 1105.7,215.4 1105.9,214.2 C1106.1,213.0 1108.0,211.9 1111.2,211.4 C1114.4,210.9 1119.3,210.8 1124.9,211.2 C1130.5,211.6 1137.6,212.7 1144.8,214.0 C1152.0,215.3 1160.2,217.7 1168.0,219.1 C1175.8,220.5 1184.4,221.1 1191.6,222.3 C1198.8,223.5 1205.9,225.0 1211.3,226.5 C1216.7,228.0 1221.3,229.8 1224.1,231.3 C1226.9,232.9 1228.3,234.6 1228.1,235.8Z"/><path d="M1320.4,347.7 C1319.9,349.6 1316.5,351.1 1311.0,351.3 C1305.5,351.6 1297.0,350.9 1287.5,349.2 C1278.0,347.5 1265.9,344.7 1253.7,341.4 C1241.5,338.1 1227.7,332.8 1214.5,329.3 C1201.3,325.8 1186.8,323.4 1174.6,320.2 C1162.4,317.0 1150.4,313.5 1141.3,310.1 C1132.2,306.8 1124.6,303.1 1120.0,300.1 C1115.4,297.1 1113.1,294.2 1113.6,292.3 C1114.1,290.4 1117.5,288.9 1123.0,288.7 C1128.5,288.4 1137.0,289.1 1146.5,290.8 C1156.0,292.5 1168.1,295.3 1180.3,298.6 C1192.5,301.9 1206.3,307.2 1219.5,310.7 C1232.7,314.2 1247.2,316.6 1259.4,319.8 C1271.6,323.0 1283.6,326.5 1292.7,329.9 C1301.8,333.2 1309.4,336.9 1314.0,339.9 C1318.6,342.9 1320.9,345.8 1320.4,347.7Z"/><path d="M1303.9,309.5 C1303.2,311.1 1300.7,312.1 1297.2,312.1 C1293.7,312.1 1288.6,311.1 1283.0,309.3 C1277.4,307.5 1270.3,304.6 1263.4,301.3 C1256.5,298.0 1249.0,293.1 1241.5,289.6 C1234.0,286.1 1225.3,283.5 1218.3,280.3 C1211.3,277.1 1204.7,273.7 1199.7,270.5 C1194.7,267.3 1190.7,264.0 1188.4,261.3 C1186.1,258.6 1185.4,256.1 1186.1,254.5 C1186.8,252.9 1189.3,251.9 1192.8,251.9 C1196.3,251.9 1201.4,252.9 1207.0,254.7 C1212.6,256.5 1219.7,259.4 1226.6,262.7 C1233.5,266.0 1241.0,270.9 1248.5,274.4 C1256.0,277.9 1264.7,280.5 1271.7,283.7 C1278.7,286.9 1285.3,290.3 1290.3,293.5 C1295.3,296.7 1299.3,300.0 1301.6,302.7 C1303.9,305.4 1304.6,307.9 1303.9,309.5Z"/><path d="M1366.1,284.2 C1365.6,285.6 1363.3,286.6 1359.9,286.7 C1356.5,286.8 1351.3,286.2 1345.6,284.8 C1339.9,283.4 1332.7,281.1 1325.5,278.4 C1318.3,275.7 1310.3,271.6 1302.5,268.8 C1294.7,266.0 1286.0,263.9 1278.8,261.3 C1271.6,258.7 1264.5,255.9 1259.2,253.3 C1253.9,250.7 1249.5,247.8 1247.0,245.6 C1244.5,243.3 1243.4,241.2 1243.9,239.8 C1244.4,238.4 1246.7,237.4 1250.1,237.3 C1253.5,237.2 1258.7,237.8 1264.4,239.2 C1270.1,240.6 1277.3,242.9 1284.5,245.6 C1291.7,248.3 1299.7,252.3 1307.5,255.2 C1315.3,258.1 1324.0,260.1 1331.2,262.7 C1338.4,265.3 1345.5,268.1 1350.8,270.7 C1356.1,273.3 1360.5,276.1 1363.0,278.4 C1365.5,280.6 1366.6,282.8 1366.1,284.2Z"/><path d="M1380.0,159.5 C1379.4,160.4 1377.0,160.5 1373.3,159.5 C1369.6,158.5 1364.2,156.3 1358.1,153.4 C1352.0,150.5 1344.3,146.2 1336.7,141.8 C1329.1,137.4 1320.6,131.5 1312.3,126.7 C1304.0,121.9 1294.7,117.5 1287.0,113.1 C1279.3,108.7 1271.9,104.1 1266.3,100.3 C1260.7,96.5 1256.0,92.8 1253.3,90.2 C1250.6,87.6 1249.4,85.5 1250.0,84.5 C1250.6,83.5 1253.0,83.5 1256.7,84.5 C1260.4,85.5 1265.8,87.6 1271.9,90.6 C1278.0,93.5 1285.7,97.8 1293.3,102.2 C1300.9,106.7 1309.4,112.5 1317.7,117.3 C1326.0,122.1 1335.3,126.5 1343.0,130.9 C1350.7,135.3 1358.1,139.9 1363.7,143.7 C1369.3,147.5 1374.0,151.2 1376.7,153.8 C1379.4,156.4 1380.6,158.6 1380.0,159.5Z"/><path d="M1300,60 L1330,40 L1395,135 L1375,145Z"/><path d="M1440.2,224.0 C1439.6,225.0 1437.6,225.3 1434.7,224.7 C1431.8,224.1 1427.5,222.6 1422.7,220.4 C1417.9,218.2 1412.0,214.9 1406.1,211.5 C1400.2,208.1 1393.7,203.4 1387.3,199.7 C1380.9,196.0 1373.5,192.7 1367.6,189.3 C1361.7,185.9 1356.0,182.4 1351.7,179.4 C1347.4,176.4 1343.9,173.3 1341.9,171.1 C1339.9,168.9 1339.2,167.0 1339.8,166.0 C1340.4,165.0 1342.4,164.7 1345.3,165.3 C1348.2,165.9 1352.5,167.4 1357.3,169.6 C1362.1,171.8 1368.0,175.1 1373.9,178.5 C1379.8,181.9 1386.3,186.6 1392.7,190.3 C1399.1,194.0 1406.5,197.3 1412.4,200.7 C1418.3,204.1 1424.0,207.6 1428.3,210.6 C1432.6,213.6 1436.1,216.7 1438.1,218.9 C1440.1,221.1 1440.8,223.0 1440.2,224.0Z"/><path d="M1440.2,267.0 C1439.5,268.2 1437.4,268.7 1434.4,268.3 C1431.4,267.9 1426.9,266.6 1422.1,264.5 C1417.3,262.4 1411.3,259.2 1405.4,255.7 C1399.5,252.2 1393.1,247.4 1386.7,243.7 C1380.3,240.0 1373.0,236.9 1367.0,233.5 C1361.0,230.1 1355.2,226.5 1351.0,223.4 C1346.8,220.3 1343.5,217.1 1341.6,214.7 C1339.7,212.3 1339.1,210.2 1339.8,209.0 C1340.5,207.8 1342.6,207.3 1345.6,207.7 C1348.6,208.1 1353.1,209.4 1357.9,211.5 C1362.7,213.6 1368.7,216.8 1374.6,220.3 C1380.5,223.8 1386.9,228.6 1393.3,232.3 C1399.7,236.0 1407.0,239.1 1413.0,242.5 C1419.0,245.9 1424.8,249.5 1429.0,252.6 C1433.2,255.7 1436.5,258.9 1438.4,261.3 C1440.3,263.7 1440.9,265.8 1440.2,267.0Z"/><path d="M1645.4,229.6 C1644.8,230.8 1642.5,231.4 1638.9,231.0 C1635.3,230.6 1630.0,229.2 1624.0,227.1 C1618.0,225.0 1610.5,221.8 1603.0,218.3 C1595.5,214.8 1587.3,209.8 1579.2,206.0 C1571.1,202.2 1562.0,199.0 1554.5,195.6 C1547.0,192.2 1539.7,188.5 1534.2,185.3 C1528.7,182.1 1524.3,178.9 1521.7,176.4 C1519.1,173.9 1518.0,171.6 1518.6,170.4 C1519.2,169.2 1521.5,168.6 1525.1,169.0 C1528.7,169.4 1534.0,170.8 1540.0,172.9 C1546.0,175.0 1553.5,178.2 1561.0,181.7 C1568.5,185.2 1576.7,190.2 1584.8,194.0 C1592.9,197.8 1602.0,201.0 1609.5,204.4 C1617.0,207.8 1624.3,211.5 1629.8,214.7 C1635.3,217.9 1639.7,221.1 1642.3,223.6 C1644.9,226.1 1646.0,228.4 1645.4,229.6Z"/><path d="M1647.5,248.2 C1647.1,249.2 1645.1,249.9 1641.9,249.6 C1638.7,249.3 1633.9,248.2 1628.5,246.6 C1623.1,244.9 1616.5,242.5 1609.7,239.7 C1603.0,236.9 1595.3,233.0 1588.0,230.0 C1580.7,227.0 1572.5,224.6 1565.7,221.9 C1558.9,219.2 1552.2,216.4 1547.2,213.8 C1542.2,211.2 1538.0,208.6 1535.6,206.6 C1533.1,204.6 1532.1,202.8 1532.5,201.8 C1532.9,200.8 1534.9,200.1 1538.1,200.4 C1541.3,200.7 1546.1,201.8 1551.5,203.4 C1556.9,205.1 1563.5,207.5 1570.3,210.3 C1577.0,213.1 1584.7,217.0 1592.0,220.0 C1599.3,223.0 1607.5,225.4 1614.3,228.1 C1621.1,230.8 1627.8,233.6 1632.8,236.2 C1637.8,238.8 1642.0,241.4 1644.4,243.4 C1646.9,245.4 1647.9,247.2 1647.5,248.2Z"/><path d="M940,95 C957.5,86.7 958.3,107.5 945,130 C931.7,152.5 880.0,214.2 860,230 C840.0,245.8 828.3,233.3 825,225 C821.7,216.7 820.8,201.7 840,180 C859.2,158.3 922.5,103.3 940,95Z"/><path d="M1432.9,533.8 C1431.8,534.5 1429.2,533.4 1425.9,530.4 C1422.6,527.4 1417.9,522.2 1413.1,515.9 C1408.3,509.6 1402.5,501.1 1396.9,492.4 C1391.3,483.7 1385.6,473.0 1379.5,463.6 C1373.4,454.2 1365.9,444.6 1360.2,435.9 C1354.5,427.2 1349.2,418.6 1345.4,411.6 C1341.6,404.6 1338.7,398.2 1337.3,394.0 C1335.9,389.8 1336.0,386.9 1337.1,386.2 C1338.2,385.5 1340.8,386.6 1344.1,389.6 C1347.4,392.6 1352.1,397.8 1356.9,404.1 C1361.7,410.4 1367.5,418.9 1373.1,427.6 C1378.7,436.3 1384.4,447.0 1390.5,456.4 C1396.6,465.8 1404.1,475.4 1409.8,484.1 C1415.5,492.8 1420.8,501.4 1424.6,508.4 C1428.4,515.4 1431.3,521.8 1432.7,526.0 C1434.1,530.2 1434.0,533.1 1432.9,533.8Z"/><path d="M1580.9,434.8 C1580.0,435.8 1577.8,435.9 1575.0,435.0 C1572.2,434.1 1568.4,432.0 1564.3,429.1 C1560.2,426.2 1555.3,422.2 1550.5,417.8 C1545.7,413.4 1540.8,407.6 1535.6,402.9 C1530.4,398.2 1524.0,393.9 1519.2,389.6 C1514.4,385.3 1509.8,380.9 1506.5,377.1 C1503.2,373.3 1500.7,369.6 1499.5,367.0 C1498.3,364.4 1498.2,362.2 1499.1,361.2 C1500.0,360.2 1502.2,360.1 1505.0,361.0 C1507.8,361.9 1511.6,364.0 1515.7,366.9 C1519.8,369.8 1524.7,373.8 1529.5,378.2 C1534.3,382.6 1539.2,388.4 1544.4,393.1 C1549.6,397.8 1556.0,402.1 1560.8,406.4 C1565.6,410.7 1570.2,415.1 1573.5,418.9 C1576.8,422.7 1579.3,426.4 1580.5,429.0 C1581.7,431.6 1581.8,433.8 1580.9,434.8Z"/><path d="M1650.6,602.8 C1649.7,603.8 1647.7,604.1 1645.0,603.2 C1642.3,602.4 1638.6,600.4 1634.7,597.7 C1630.8,595.0 1626.2,591.1 1621.7,587.0 C1617.2,582.9 1612.5,577.3 1607.6,572.9 C1602.7,568.5 1596.7,564.5 1592.1,560.4 C1587.5,556.3 1583.2,552.1 1580.1,548.5 C1577.0,544.9 1574.7,541.4 1573.6,538.9 C1572.5,536.4 1572.5,534.2 1573.4,533.2 C1574.3,532.2 1576.3,531.9 1579.0,532.8 C1581.7,533.6 1585.4,535.6 1589.3,538.3 C1593.2,541.0 1597.8,544.9 1602.3,549.0 C1606.8,553.1 1611.5,558.7 1616.4,563.1 C1621.3,567.5 1627.3,571.5 1631.9,575.6 C1636.5,579.7 1640.8,583.9 1643.9,587.5 C1647.0,591.1 1649.3,594.6 1650.4,597.1 C1651.5,599.6 1651.5,601.8 1650.6,602.8Z"/><path d="M1480.1,701.2 C1479.2,702.0 1477.3,702.1 1475.2,701.3 C1473.1,700.5 1470.1,698.7 1467.2,696.2 C1464.3,693.8 1460.9,690.3 1457.6,686.6 C1454.3,682.9 1451.1,678.0 1447.5,674.0 C1443.9,670.0 1439.4,666.4 1436.1,662.7 C1432.8,659.1 1429.6,655.3 1427.5,652.1 C1425.4,648.9 1423.9,645.8 1423.3,643.6 C1422.7,641.4 1423.0,639.6 1423.9,638.8 C1424.8,638.0 1426.7,637.9 1428.8,638.7 C1430.9,639.5 1433.9,641.3 1436.8,643.8 C1439.7,646.2 1443.1,649.7 1446.4,653.4 C1449.7,657.1 1452.9,662.0 1456.5,666.0 C1460.1,670.0 1464.6,673.6 1467.9,677.3 C1471.2,680.9 1474.4,684.7 1476.5,687.9 C1478.6,691.1 1480.1,694.2 1480.7,696.4 C1481.3,698.6 1481.0,700.4 1480.1,701.2Z"/><path d="M1769.8,473.8 C1769.1,474.5 1767.4,474.5 1765.3,473.5 C1763.2,472.5 1760.2,470.6 1757.0,468.0 C1753.8,465.4 1749.9,461.9 1746.2,458.1 C1742.5,454.3 1738.6,449.4 1734.6,445.4 C1730.5,441.3 1725.7,437.5 1721.9,433.8 C1718.1,430.1 1714.6,426.2 1712.0,423.0 C1709.4,419.8 1707.5,416.8 1706.5,414.7 C1705.5,412.6 1705.5,410.9 1706.2,410.2 C1706.9,409.5 1708.6,409.5 1710.7,410.5 C1712.8,411.5 1715.8,413.4 1719.0,416.0 C1722.2,418.6 1726.1,422.1 1729.8,425.9 C1733.5,429.7 1737.4,434.6 1741.4,438.6 C1745.5,442.7 1750.3,446.5 1754.1,450.2 C1757.9,453.9 1761.4,457.8 1764.0,461.0 C1766.6,464.2 1768.5,467.2 1769.5,469.3 C1770.5,471.4 1770.5,473.1 1769.8,473.8Z"/><path d="M1579.3,378.0 C1578.4,378.7 1577.0,378.9 1575.3,378.4 C1573.6,377.9 1571.4,376.7 1569.3,374.9 C1567.2,373.1 1564.8,370.5 1562.6,367.8 C1560.4,365.1 1558.4,361.4 1555.9,358.5 C1553.4,355.6 1550.1,352.9 1547.8,350.2 C1545.5,347.5 1543.5,344.8 1542.1,342.4 C1540.7,340.0 1539.8,337.6 1539.6,335.9 C1539.4,334.2 1539.8,332.7 1540.7,332.0 C1541.6,331.3 1543.0,331.1 1544.7,331.6 C1546.4,332.1 1548.6,333.3 1550.7,335.1 C1552.8,336.9 1555.2,339.5 1557.4,342.2 C1559.6,344.9 1561.6,348.6 1564.1,351.5 C1566.6,354.4 1569.9,357.1 1572.2,359.8 C1574.5,362.5 1576.5,365.2 1577.9,367.6 C1579.3,370.0 1580.2,372.4 1580.4,374.1 C1580.6,375.8 1580.2,377.3 1579.3,378.0Z"/><path d="M1657.2,336.6 C1656.6,337.0 1655.4,336.9 1654.1,336.0 C1652.8,335.1 1650.9,333.5 1649.1,331.5 C1647.3,329.5 1645.2,326.7 1643.2,323.8 C1641.2,320.9 1639.3,317.2 1637.1,314.1 C1634.9,311.0 1632.0,307.9 1630.0,305.0 C1628.0,302.1 1626.1,299.2 1624.8,296.8 C1623.5,294.4 1622.6,292.2 1622.3,290.6 C1622.0,289.0 1622.2,287.8 1622.8,287.4 C1623.4,287.0 1624.6,287.1 1625.9,288.0 C1627.2,288.9 1629.1,290.5 1630.9,292.5 C1632.7,294.5 1634.8,297.3 1636.8,300.2 C1638.8,303.1 1640.7,306.8 1642.9,309.9 C1645.1,313.0 1648.0,316.1 1650.0,319.0 C1652.0,321.9 1653.9,324.8 1655.2,327.2 C1656.5,329.6 1657.4,331.8 1657.7,333.4 C1658.0,335.0 1657.8,336.2 1657.2,336.6Z"/></g><g transform="translate(730,720) scale(0.234192)" fill="#c496a8" stroke="#c496a8" ><path d="M370,380 C380.8,355.8 397.5,371.7 420,375 C442.5,378.3 488.3,395.0 505,400 C521.7,405.0 510.8,405.8 520,405 C529.2,404.2 541.7,392.5 560,395 C578.3,397.5 613.3,410.0 630,420 C646.7,430.0 658.3,443.3 660,455 C661.7,466.7 650.0,465.8 640,490 C630.0,514.2 613.3,565.0 600,600 C586.7,635.0 567.5,666.7 560,700 C552.5,733.3 557.5,778.3 555,800 C552.5,821.7 555.8,820.0 545,830 C534.2,840.0 510.8,858.3 490,860 C469.2,861.7 441.7,850.0 420,840 C398.3,830.0 375.0,806.7 360,800 C345.0,793.3 334.2,788.3 330,800 C325.8,811.7 353.3,854.2 335,870 C316.7,885.8 240.8,906.7 220,895 C199.2,883.3 212.5,832.5 210,800 C207.5,767.5 203.3,721.7 205,700 C206.7,678.3 209.2,675.0 220,670 C230.8,665.0 260.0,676.7 270,670 C280.0,663.3 267.5,640.0 280,630 C292.5,620.0 332.5,628.3 345,610 C357.5,591.7 350.8,558.3 355,520 C359.2,481.7 359.2,404.2 370,380Z"/><path d="M95,490 L140,475 L150,530 L185,500 L220,530 L210,620 L160,660 L150,600 L100,640 L85,600Z"/><path d="M45,730 L60,740 L75,760 L110,740 L130,760 L140,920 L110,900 L80,930 L85,1010 L50,940 L20,880 L30,840Z"/><path d="M710,590 L730,600 L800,660 L790,740 L760,845 L720,830 L700,760 L660,770 L650,660Z"/><path d="M220,140 L240,135 L200,220 L170,245 L165,230 L190,180Z"/><path d="M310,135 C318.3,124.2 336.7,122.5 350,125 C363.3,127.5 382.5,141.7 390,150 C397.5,158.3 398.3,170.0 395,175 C391.7,180.0 380.8,175.8 370,180 C359.2,184.2 343.3,191.7 330,200 C316.7,208.3 300.0,211.7 290,230 C280.0,248.3 277.5,295.8 270,310 C262.5,324.2 250.8,318.3 245,315 C239.2,311.7 230.8,305.8 235,290 C239.2,274.2 259.2,236.7 270,220 C280.8,203.3 293.3,204.2 300,190 C306.7,175.8 301.7,145.8 310,135Z"/><path d="M700,60 C723.3,45.0 782.5,30.8 800,30 C817.5,29.2 818.3,35.0 805,55 C791.7,75.0 745.8,123.3 720,150 C694.2,176.7 668.3,203.3 650,215 C631.7,226.7 617.5,224.2 610,220 C602.5,215.8 596.7,206.7 605,190 C613.3,173.3 644.2,141.7 660,120 C675.8,98.3 676.7,75.0 700,60Z"/><path d="M585,290 L650,330 L560,380Z"/><ellipse cx="285" cy="1168" rx="48" ry="27" transform="rotate(0 285 1168)"/><path d="M650,1140 C655.0,1144.2 650.0,1159.2 640,1175 C630.0,1190.8 610.0,1214.2 590,1235 C570.0,1255.8 540.0,1283.3 520,1300 C500.0,1316.7 480.8,1331.7 470,1335 C459.2,1338.3 451.7,1332.5 455,1320 C458.3,1307.5 472.5,1281.7 490,1260 C507.5,1238.3 540.0,1208.3 560,1190 C580.0,1171.7 595.0,1158.3 610,1150 C625.0,1141.7 645.0,1135.8 650,1140Z"/><circle cx="285" cy="1085" r="10"/><circle cx="255" cy="1105" r="8"/><circle cx="625" cy="100" r="10"/><circle cx="615" cy="125" r="8"/><path d="M230,990 L260,930" stroke-width="5" stroke-linecap="round" fill="none"/><path d="M255,985 L278,935" stroke-width="5" stroke-linecap="round" fill="none"/><path d="M350,985 L400,930" stroke-width="4" stroke-linecap="round" fill="none"/><path d="M480,1170 L530,960" stroke-width="5" stroke-linecap="round" fill="none"/><path d="M605,1095 L660,1020" stroke-width="5" stroke-linecap="round" fill="none"/><path d="M640,1080 L700,1025" stroke-width="5" stroke-linecap="round" fill="none"/><path d="M720,1050 L770,1020" stroke-width="5" stroke-linecap="round" fill="none"/><path d="M715,200 L765,150" stroke-width="4" stroke-linecap="round" fill="none"/><path d="M730,225 L780,185" stroke-width="4" stroke-linecap="round" fill="none"/></g></g>
</svg>
<div class="t" style="right:1447.6399999999999px;top:152.90px;font-size:8px;line-height:8px;color:#766f4e;font-family:'Liberation Serif',serif;font-weight:700;letter-spacing:0.66px;-webkit-text-stroke:0.2px #766f4e;">YOURWEBSITE.COM</div>
<div class="a" style="left:936.2px;top:224.79999999999998px;width:9.6px;height:9.6px;background:transparent;border:1.6px solid #766f4e;border-radius:50%;"></div>
<div class="t" style="left:-56.47px;width:2000px;text-align:center;top:245.84px;font-size:16px;line-height:16px;color:#766f4e;font-family:'Liberation Serif',serif;font-weight:700;letter-spacing:5.07px;-webkit-text-stroke:0.5px #766f4e;">STUDIO</div>
<div class="t" style="left:-57.15px;width:2000px;text-align:center;top:267.54px;font-size:16px;line-height:16px;color:#766f4e;font-family:'Liberation Serif',serif;font-weight:700;letter-spacing:3.71px;-webkit-text-stroke:0.5px #766f4e;">NAME</div>
<div class="t" style="left:1202.8px;top:152.77px;font-size:13px;line-height:13px;color:#f4f1ea;font-family:'Liberation Serif',serif;font-weight:400;letter-spacing:2.89px;">1234 ADDRESS</div>
<div class="t" style="left:1202.8px;top:175.17px;font-size:13px;line-height:13px;color:#f4f1ea;font-family:'Liberation Serif',serif;font-weight:400;letter-spacing:3.15px;">CITY, ST</div>
<div class="t" style="left:1202.8px;top:197.77px;font-size:13px;line-height:13px;color:#f4f1ea;font-family:'Liberation Serif',serif;font-weight:400;letter-spacing:5.02px;">1·2·3·4·5</div>
<div class="t" style="left:528.00px;width:2000px;text-align:center;top:153.80px;font-size:6px;line-height:6px;color:#f4f1ea;font-family:'Liberation Serif',serif;font-weight:700;letter-spacing:0px;-webkit-text-stroke:0.2px #f4f1ea;">P</div>
<div class="t" style="left:542.30px;width:2000px;text-align:center;top:153.80px;font-size:6px;line-height:6px;color:#f4f1ea;font-family:'Liberation Serif',serif;font-weight:700;letter-spacing:0px;-webkit-text-stroke:0.2px #f4f1ea;">O</div>
<div class="t" style="left:528.00px;width:2000px;text-align:center;top:167.00px;font-size:6px;line-height:6px;color:#f4f1ea;font-family:'Liberation Serif',serif;font-weight:700;letter-spacing:0px;-webkit-text-stroke:0.2px #f4f1ea;">S</div>
<div class="t" style="left:542.30px;width:2000px;text-align:center;top:167.00px;font-size:6px;line-height:6px;color:#f4f1ea;font-family:'Liberation Serif',serif;font-weight:700;letter-spacing:0px;-webkit-text-stroke:0.2px #f4f1ea;">T</div>
<svg class="a" style="left:0;top:0" width="2560" height="1367" viewBox="0 0 2560 1367" fill="none" stroke="#ebe6da" stroke-width="1.4"><rect x="1384.9" y="235.2" width="160" height="58"/><path d="M1384.5 312.3 H1545.2"/></svg>
<div class="a" style="left:1201.8999999999999px;top:361.3px;width:7.4px;height:7.4px;background:transparent;border:1.6px solid #f4f1ea;border-radius:50%;"></div>
<div class="t" style="left:1216.6px;top:361.62px;font-size:7.5px;line-height:7.5px;color:#f4f1ea;font-family:'Liberation Serif',serif;font-weight:700;letter-spacing:0.98px;-webkit-text-stroke:0.2px #f4f1ea;">YOURWEBSITE.COM</div>
<div class="t" style="left:-54.01px;width:2000px;text-align:center;top:482.08px;font-size:22px;line-height:22px;color:#1e1a1b;font-family:'Liberation Serif',serif;font-weight:700;letter-spacing:8.38px;-webkit-text-stroke:0.7px #1e1a1b;">STUDIO NAME</div>
<div class="t" style="left:-58.61px;width:2000px;text-align:center;top:523.95px;font-size:9px;line-height:9px;color:#1e1a1b;font-family:'Liberation Serif',serif;font-weight:700;letter-spacing:0.78px;-webkit-text-stroke:0.2px #1e1a1b;">TYPE OF EVENT</div>
<div class="a" style="left:900.6px;top:535.5px;width:81px;height:2px;background:#1e1a1b;"></div>
<div class="a" style="left:782.1999999999999px;top:632.6px;width:7.2px;height:7.2px;background:transparent;border:1.4px solid #1e1a1b;border-radius:50%;"></div>
<div class="a" style="left:954.1px;top:632.6px;width:7.2px;height:7.2px;background:transparent;border:1.4px solid #1e1a1b;border-radius:50%;"></div>
<div class="a" style="left:782.1999999999999px;top:652.8px;width:7.2px;height:7.2px;background:transparent;border:1.4px solid #1e1a1b;border-radius:50%;"></div>
<div class="a" style="left:954.1px;top:652.8px;width:7.2px;height:7.2px;background:transparent;border:1.4px solid #1e1a1b;border-radius:50%;"></div>
<div class="t" style="left:795.7px;top:632.60px;font-size:8px;line-height:8px;color:#1e1a1b;font-family:'Liberation Serif',serif;font-weight:700;letter-spacing:0.95px;-webkit-text-stroke:0.2px #1e1a1b;">SEPTEMBER 17TH, 6–10PM</div>
<div class="t" style="left:967.3px;top:632.60px;font-size:8px;line-height:8px;color:#1e1a1b;font-family:'Liberation Serif',serif;font-weight:700;letter-spacing:0.65px;-webkit-text-stroke:0.2px #1e1a1b;">WWW.YOURWEBSITE.COM</div>
<div class="t" style="left:795.7px;top:652.80px;font-size:8px;line-height:8px;color:#1e1a1b;font-family:'Liberation Serif',serif;font-weight:700;letter-spacing:0.9px;-webkit-text-stroke:0.2px #1e1a1b;">123 EVENT ADDRESS</div>
<div class="t" style="left:967.3px;top:652.80px;font-size:8px;line-height:8px;color:#1e1a1b;font-family:'Liberation Serif',serif;font-weight:700;letter-spacing:0.68px;-webkit-text-stroke:0.2px #1e1a1b;">@SOCIALMEDIA</div>
<svg class="a" style="left:0;top:0" width="2560" height="1367" viewBox="0 0 2560 1367" fill="none" stroke="#262626" stroke-width="1.5"><path d="M1204 469.4 H1364.3"/><path d="M1204 488.7 H1364.3"/><path d="M1204 507.95 H1364.3"/><path d="M1204 527.2 H1364.3"/><path d="M1204 546.45 H1364.3"/><path d="M1204 565.7 H1364.3"/><path d="M1204 584.95 H1364.3"/><path d="M1204 604.2 H1364.3"/><path d="M1204 623.45 H1364.3"/><path d="M1204 642.7 H1364.3"/><rect x="1384.6" y="565.7" width="160" height="58.1"/><path d="M1384.6 584.95 H1544.6 M1384.6 604.2 H1544.6 M1384.6 642.7 H1544.6"/></svg>
<div class="t" style="left:373.79px;width:2000px;text-align:center;top:665.90px;font-size:8px;line-height:8px;color:#262626;font-family:'Liberation Serif',serif;font-weight:700;letter-spacing:0.78px;-webkit-text-stroke:0.2px #262626;">KEEP IN TOUCH @SOCIALMEDIA</div>
<div class="t" style="left:954.8px;top:929.83px;font-size:7.5px;line-height:7.5px;color:#c99aab;font-family:'Liberation Serif',serif;font-weight:700;letter-spacing:1.14px;-webkit-text-stroke:0.2px #c99aab;">STUDIO NAME, TYPE OF EVENT</div>
<svg class="a" style="left:0;top:0" width="2560" height="1367"><path d="M954.8 945.3 H1100.3" stroke="#c99aab" stroke-width="1.4"/></svg>
<div class="t" style="left:28.14px;width:2000px;text-align:center;top:955.02px;font-size:7.5px;line-height:7.5px;color:#c99aab;font-family:'Liberation Serif',serif;font-weight:700;letter-spacing:1.28px;-webkit-text-stroke:0.2px #c99aab;">SEPT. 17, 6–10PM</div>
<div class="t" style="left:1201.7px;top:760.02px;font-size:7.5px;line-height:7.5px;color:#6c3729;font-family:'Liberation Serif',serif;font-weight:700;letter-spacing:1.0px;-webkit-text-stroke:0.2px #6c3729;">YOUR NAME</div>
<div class="t" style="left:1201.7px;top:772.12px;font-size:7.5px;line-height:7.5px;color:#6c3729;font-family:'Liberation Serif',serif;font-weight:700;letter-spacing:1.3px;-webkit-text-stroke:0.2px #6c3729;">1234 ADDRESS</div>
<div class="t" style="left:1201.7px;top:785.12px;font-size:7.5px;line-height:7.5px;color:#6c3729;font-family:'Liberation Serif',serif;font-weight:700;letter-spacing:1.36px;-webkit-text-stroke:0.2px #6c3729;">CITY, ST 12345</div>
<div class="t" style="left:518.20px;width:2000px;text-align:center;top:772.75px;font-size:7.5px;line-height:7.5px;color:#6c3729;font-family:'Liberation Serif',serif;font-weight:700;letter-spacing:1.6px;transform:rotate(-90deg);transform-origin:999.2px 3.75px;-webkit-text-stroke:0.25px #6c3729;">STAMP</div>
<div class="t" style="left:543.00px;width:2000px;text-align:center;top:772.75px;font-size:7.5px;line-height:7.5px;color:#6c3729;font-family:'Liberation Serif',serif;font-weight:700;letter-spacing:1.6px;transform:rotate(90deg);transform-origin:999.2px 3.75px;-webkit-text-stroke:0.25px #6c3729;">STAMP</div>
<svg class="a" style="left:0;top:0" width="2560" height="1367" viewBox="0 0 2560 1367" fill="none" stroke="#6c3729" stroke-width="1.5"><path d="M1529.8 761.7 V792.4"/><rect x="1384.6" y="842" width="160" height="58.4"/><path d="M1384.6 861.3 H1544.6 M1384.6 880.9 H1544.6 M1384.6 919.5 H1544.6"/></svg>
<div class="t" style="left:1201.7px;top:967.70px;font-size:8px;line-height:8px;color:#6c3729;font-family:'Liberation Serif',serif;font-weight:700;letter-spacing:0.67px;-webkit-text-stroke:0.2px #6c3729;">YOURWEBSITE.COM</div>
<div class="a" style="left:1202.5px;top:978px;width:90px;height:2px;background:#6c3729;"></div>
<div class="t" style="left:-58.36px;width:2000px;text-align:center;top:1064.80px;font-size:8px;line-height:8px;color:#fbfaf6;font-family:'Liberation Serif',serif;font-weight:700;letter-spacing:0.68px;-webkit-text-stroke:0.2px #fbfaf6;">WWW.YOURWEBSITE.COM</div>
<div class="t" style="left:-54.78px;width:2000px;text-align:center;top:1161.28px;font-size:22px;line-height:22px;color:#fbfaf6;font-family:'Liberation Serif',serif;font-weight:700;letter-spacing:8.23px;-webkit-text-stroke:0.7px #fbfaf6;">STUDIO NAME</div>
<div class="a" style="left:936.2px;top:1255.0px;width:9.6px;height:9.6px;background:transparent;border:1.5px solid #fbfaf6;border-radius:50%;"></div>
<div class="t" style="left:-58.33px;width:2000px;text-align:center;top:1276.00px;font-size:8px;line-height:8px;color:#fbfaf6;font-family:'Liberation Serif',serif;font-weight:700;letter-spacing:0.75px;-webkit-text-stroke:0.2px #fbfaf6;">@SOCIAL MEDIA</div>
<div class="a" style="left:1201.8000000000002px;top:1065.2px;width:7.2px;height:7.2px;background:transparent;border:1.4px solid #766f4e;border-radius:50%;"></div>
<div class="t" style="left:1216.7px;top:1065.12px;font-size:7.5px;line-height:7.5px;color:#766f4e;font-family:'Liberation Serif',serif;font-weight:700;letter-spacing:1.32px;-webkit-text-stroke:0.2px #766f4e;">1234 ADDRESS, CITY ST, 12345</div>
<div class="t" style="left:519.90px;width:2000px;text-align:center;top:1074.00px;font-size:6px;line-height:6px;color:#766f4e;font-family:'Liberation Serif',serif;font-weight:700;letter-spacing:0px;-webkit-text-stroke:0.2px #766f4e;">P</div>
<div class="t" style="left:534.20px;width:2000px;text-align:center;top:1074.00px;font-size:6px;line-height:6px;color:#766f4e;font-family:'Liberation Serif',serif;font-weight:700;letter-spacing:0px;-webkit-text-stroke:0.2px #766f4e;">O</div>
<div class="t" style="left:519.90px;width:2000px;text-align:center;top:1086.90px;font-size:6px;line-height:6px;color:#766f4e;font-family:'Liberation Serif',serif;font-weight:700;letter-spacing:0px;-webkit-text-stroke:0.2px #766f4e;">S</div>
<div class="t" style="left:534.20px;width:2000px;text-align:center;top:1086.90px;font-size:6px;line-height:6px;color:#766f4e;font-family:'Liberation Serif',serif;font-weight:700;letter-spacing:0px;-webkit-text-stroke:0.2px #766f4e;">T</div>
<svg class="a" style="left:0;top:0" width="2560" height="1367" viewBox="0 0 2560 1367" fill="none" stroke="#766f4e" stroke-width="1.5"><path d="M1384.5 1159.2 H1545 M1384.5 1178.7 H1545 M1384.5 1198.2 H1545 M1384.5 1217.5 H1545"/><rect x="1508.5" y="1065.1" width="36.5" height="36.5" stroke-width="1.3"/></svg>
<div class="a" style="left:1201.8000000000002px;top:1273.3000000000002px;width:7.2px;height:7.2px;background:transparent;border:1.4px solid #766f4e;border-radius:50%;"></div>
<div class="t" style="left:1216.7px;top:1272.90px;font-size:8px;line-height:8px;color:#766f4e;font-family:'Liberation Serif',serif;font-weight:700;letter-spacing:0.68px;-webkit-text-stroke:0.2px #766f4e;">YOURWEBSITE.COM</div>
<div class="a" style="left:1217px;top:1283px;width:90px;height:1.6px;background:#766f4e;"></div>
<div class="a" style="left:741px;top:125px;width:400px;height:273px;background:transparent;border:1px solid #f0301c;"></div>
<div class="a" style="left:1173px;top:125px;width:401px;height:273px;background:transparent;border:1px solid #f0301c;"></div>
<div class="a" style="left:741px;top:430px;width:400px;height:272px;background:transparent;border:1px solid #f0301c;"></div>
<div class="a" style="left:1173px;top:430px;width:401px;height:272px;background:transparent;border:1px solid #f0301c;"></div>
<div class="a" style="left:741px;top:734px;width:400px;height:272px;background:transparent;border:1px solid #f0301c;"></div>
<div class="a" style="left:1173px;top:734px;width:401px;height:272px;background:transparent;border:1px solid #f0301c;"></div>
<div class="a" style="left:741px;top:1038px;width:400px;height:273px;background:transparent;border:1px solid #f0301c;"></div>
<div class="a" style="left:1173px;top:1038px;width:401px;height:273px;background:transparent;border:1px solid #f0301c;"></div>
<div class="a" style="left:1181px;top:133px;width:385px;height:257px;background:transparent;border:1px solid #9a9a9a;"></div>
<div class="a" style="left:749px;top:438px;width:384px;height:256px;background:transparent;border:1px solid #9a9a9a;"></div>
<div class="a" style="left:749px;top:742px;width:384px;height:256px;background:transparent;border:1px solid #9a9a9a;"></div>
<div class="a" style="left:1181px;top:742px;width:385px;height:256px;background:transparent;border:1px solid #9a9a9a;"></div>
<div class="a" style="left:749px;top:1046px;width:384px;height:257px;background:transparent;border:1px solid #9a9a9a;"></div>
</div></div>
<div class="a" style="left:2260px;top:57px;width:300px;height:1308px;background:#535353;"></div>
<div class="a" style="left:2260px;top:57px;width:300px;height:12px;background:#424242;"></div>
<div class="a" style="left:2260px;top:69px;width:300px;height:1px;background:#383838;"></div>
<svg style="left:2536px;top:59px" width="10" height="8" viewBox="0 0 10 8"><path d="M1 1 L4 4 L1 7 M5 1 L8 4 L5 7" fill="none" stroke="#cfcfcf" stroke-width="1"/></svg>
<div class="a" style="left:2260px;top:70px;width:300px;height:27px;background:#424242;"></div>
<div class="a" style="left:2260px;top:96px;width:300px;height:1px;background:#3a3a3a;"></div>
<div class="a" style="left:2385px;top:70px;width:60px;height:27px;background:#535353;"></div>
<div class="a" style="left:2324px;top:70px;width:1px;height:26px;background:#3a3a3a;"></div>
<div class="a" style="left:2384px;top:70px;width:1px;height:26px;background:#3a3a3a;"></div>
<div class="a" style="left:2445px;top:70px;width:1px;height:26px;background:#3a3a3a;"></div>
<div class="t" style="left:2269px;top:77.28px;font-size:11px;line-height:11px;color:#b8b8b8;font-family:'Liberation Sans',sans-serif;font-weight:700;letter-spacing:-0.15px;">Swatches</div>
<div class="t" style="left:2335px;top:77.28px;font-size:11px;line-height:11px;color:#b8b8b8;font-family:'Liberation Sans',sans-serif;font-weight:700;letter-spacing:0px;">Brushes</div>
<div class="t" style="left:2393px;top:77.28px;font-size:11px;line-height:11px;color:#ececec;font-family:'Liberation Sans',sans-serif;font-weight:700;letter-spacing:0px;">Symbols</div>
<svg style="left:2542px;top:79px" width="11" height="9" viewBox="0 0 11 9"><path d="M0 1 H11 M0 4.5 H11 M0 8 H11" stroke="#c4c4c4" stroke-width="1"/></svg>
<div class="a" style="left:2260px;top:97px;width:300px;height:619px;background:#535353;"></div>
<div class="a" style="left:2265px;top:103px;width:289px;height:593px;background:#515151;border:1px solid #5f5f5f;border-radius:2px;"></div>
<svg style="left:2270px;top:699px" width="18" height="15" viewBox="0 0 18 15"><path d="M1 1 h2 v12 h-2z M4.5 1 h2 v12 h-2z M7.5 2 l2-1 4 11 -2 1z" fill="#cfcfcf"/><path d="M14 11 h3 l-1.5 2z" fill="#cfcfcf"/></svg>
<svg style="left:2411px;top:700px" width="120" height="14" viewBox="0 0 120 14"><path d="M1 1 V8 H9 M6 5 L9.5 8 L6 11" fill="none" stroke="#727272" stroke-width="2"/><path d="M27 5 q-4 0 -4 3 q0 3 4 3 h3 M34 5 h3 q4 0 4 3 q0 3 -4 3 M26 1 L40 14" fill="none" stroke="#727272" stroke-width="1.4"/><rect x="53" y="1" width="11" height="12" fill="none" stroke="#727272" stroke-width="1.2"/><path d="M55 4 h7 M55 7 h7 M55 10 h7" stroke="#727272" stroke-width="1"/><path d="M79 1 h8 v12 h-7 v-6 h-3z" fill="#727272"/><path d="M102 3 h11 M105 3 v-2 h5 v2 M103 4 v9 h9 v-9 M106 5 v7 M109 5 v7" fill="none" stroke="#727272" stroke-width="1.2"/></svg>
<div class="a" style="left:2260px;top:716px;width:300px;height:3px;background:#3c3c3c;"></div>
<div class="a" style="left:2260px;top:719px;width:300px;height:27px;background:#424242;"></div>
<div class="a" style="left:2331px;top:719px;width:51px;height:28px;background:#535353;"></div>
<div class="a" style="left:2444px;top:719px;width:1px;height:27px;background:#3a3a3a;"></div>
<div class="a" style="left:2514px;top:719px;width:1px;height:27px;background:#3a3a3a;"></div>
<div class="t" style="left:2269px;top:726.28px;font-size:11px;line-height:11px;color:#b8b8b8;font-family:'Liberation Sans',sans-serif;font-weight:700;letter-spacing:-0.1px;">Properties</div>
<div class="t" style="left:2340px;top:726.28px;font-size:11px;line-height:11px;color:#ececec;font-family:'Liberation Sans',sans-serif;font-weight:700;letter-spacing:-0.1px;">Layers</div>
<div class="t" style="left:2391px;top:726.28px;font-size:11px;line-height:11px;color:#b8b8b8;font-family:'Liberation Sans',sans-serif;font-weight:700;letter-spacing:-0.1px;">Libraries</div>
<div class="t" style="left:2454px;top:726.28px;font-size:11px;line-height:11px;color:#b8b8b8;font-family:'Liberation Sans',sans-serif;font-weight:700;letter-spacing:-0.1px;">Artboards</div>
<svg style="left:2543px;top:728px" width="11" height="9" viewBox="0 0 11 9"><path d="M0 1 H11 M0 4.5 H11 M0 8 H11" stroke="#c4c4c4" stroke-width="1"/></svg>
<div class="a" style="left:2260px;top:746px;width:300px;height:619px;background:#535353;"></div>
<div class="a" style="left:2265px;top:751px;width:289px;height:595px;background:#515151;border:1px solid #5f5f5f;border-radius:2px;"></div>
<div class="a" style="left:2266px;top:752.7px;width:251px;height:20.5px;background:#4d6680;"></div>
<div class="a" style="left:2518px;top:752.7px;width:35px;height:20.5px;background:#4d6680;"></div>
<svg style="left:2292px;top:758px" width="10" height="11" viewBox="0 0 10 11"><path d="M2 5 V3.5 a3 3 0 0 1 6 0 V5" fill="none" stroke="#c4c4c4" stroke-width="1.4"/><rect x="1" y="5" width="8" height="6" fill="#c4c4c4"/><rect x="4.3" y="7" width="1.4" height="2.5" fill="#4d6680"/></svg>
<svg style="left:2546px;top:754px" width="7" height="7" viewBox="0 0 7 7"><path d="M0 0 H7 V7Z" fill="#e0e0e0"/></svg>
<div class="a" style="left:2266px;top:773.2px;width:287px;height:0.8px;background:#5e5e5e;"></div>
<div class="a" style="left:2308.6px;top:754.7px;width:3.6px;height:17px;background:#5050ff;"></div>
<svg style="left:2319px;top:758.2px" width="7" height="10" viewBox="0 0 7 10"><path d="M1.5 1 L5.5 5 L1.5 9" fill="none" stroke="#d0d0d0" stroke-width="1.2"/></svg>
<div class="a" style="left:2338px;top:753.9000000000001px;width:18px;height:18px;background:#fff;border:1.5px solid #000;"></div>
<svg style="left:2339.5px;top:755.4000000000001px" width="15" height="15" viewBox="0 0 15 15"><path d="M4 0 V15 M10 0 V15 M0 4 H15 M0 8 H15 M0 12 H15" stroke="#e05050" stroke-width="0.8" fill="none"/></svg>
<div class="t" style="left:2361.4px;top:757.99px;font-size:10.6px;line-height:10.6px;color:#e4e8ee;font-family:'Liberation Sans',sans-serif;font-weight:400;letter-spacing:0.05px;">INSTRUCTIONS</div>
<svg style="left:2523px;top:758.2px" width="10" height="10" viewBox="0 0 10 10"><circle cx="5" cy="5" r="4.2" fill="none" stroke="#cfcfcf" stroke-width="1"/></svg>
<svg style="left:2269px;top:780.3000000000001px" width="13" height="8" viewBox="0 0 13 8"><path d="M0.5 4 Q6.5 -2.5 12.5 4 Q6.5 10.5 0.5 4Z" fill="#c4c4c4"/><circle cx="6.5" cy="4" r="2.2" fill="#535353"/><circle cx="6.5" cy="4.3" r="1" fill="#c4c4c4"/></svg>
<div class="a" style="left:2266px;top:794.3000000000001px;width:287px;height:0.8px;background:#5e5e5e;"></div>
<div class="a" style="left:2308.6px;top:775.8000000000001px;width:3.6px;height:17px;background:#ffff3c;"></div>
<svg style="left:2319px;top:779.3000000000001px" width="7" height="10" viewBox="0 0 7 10"><path d="M1.5 1 L5.5 5 L1.5 9" fill="none" stroke="#d0d0d0" stroke-width="1.2"/></svg>
<div class="a" style="left:2338px;top:775.0000000000001px;width:18px;height:18px;background:#fff;border:1.5px solid #000;"></div>
<svg style="left:2339.5px;top:776.5000000000001px" width="15" height="15" viewBox="0 0 15 15"><path d="M1 5 l3-1 1 3 -2 2z M9 10 l4-2 1 3 -3 1z M5 6 l2 1 -1 1z" fill="#756f4e"/></svg>
<div class="t" style="left:2361.4px;top:779.09px;font-size:10.6px;line-height:10.6px;color:#d2d2d2;font-family:'Liberation Sans',sans-serif;font-weight:400;letter-spacing:0.05px;">Postcard – Front 1</div>
<svg style="left:2523px;top:779.3000000000001px" width="10" height="10" viewBox="0 0 10 10"><circle cx="5" cy="5" r="4.2" fill="none" stroke="#cfcfcf" stroke-width="1"/></svg>
<svg style="left:2269px;top:801.4000000000001px" width="13" height="8" viewBox="0 0 13 8"><path d="M0.5 4 Q6.5 -2.5 12.5 4 Q6.5 10.5 0.5 4Z" fill="#c4c4c4"/><circle cx="6.5" cy="4" r="2.2" fill="#535353"/><circle cx="6.5" cy="4.3" r="1" fill="#c4c4c4"/></svg>
<div class="a" style="left:2266px;top:815.4000000000001px;width:287px;height:0.8px;background:#5e5e5e;"></div>
<div class="a" style="left:2308.6px;top:796.9000000000001px;width:3.6px;height:17px;background:#ffff3c;"></div>
<svg style="left:2319px;top:800.4000000000001px" width="7" height="10" viewBox="0 0 7 10"><path d="M1.5 1 L5.5 5 L1.5 9" fill="none" stroke="#d0d0d0" stroke-width="1.2"/></svg>
<div class="a" style="left:2338px;top:796.1000000000001px;width:18px;height:18px;background:#fff;border:1.5px solid #000;"></div>
<div class="a" style="left:2339.5px;top:797.6000000000001px;width:15px;height:11px;background:#c4939f;"></div>
<div class="t" style="left:2361.4px;top:800.19px;font-size:10.6px;line-height:10.6px;color:#d2d2d2;font-family:'Liberation Sans',sans-serif;font-weight:400;letter-spacing:0.05px;">Postcard – Front 2</div>
<svg style="left:2523px;top:800.4000000000001px" width="10" height="10" viewBox="0 0 10 10"><circle cx="5" cy="5" r="4.2" fill="none" stroke="#cfcfcf" stroke-width="1"/></svg>
<svg style="left:2269px;top:822.5px" width="13" height="8" viewBox="0 0 13 8"><path d="M0.5 4 Q6.5 -2.5 12.5 4 Q6.5 10.5 0.5 4Z" fill="#c4c4c4"/><circle cx="6.5" cy="4" r="2.2" fill="#535353"/><circle cx="6.5" cy="4.3" r="1" fill="#c4c4c4"/></svg>
<div class="a" style="left:2266px;top:836.5px;width:287px;height:0.8px;background:#5e5e5e;"></div>
<div class="a" style="left:2308.6px;top:818.0px;width:3.6px;height:17px;background:#ffff3c;"></div>
<svg style="left:2319px;top:821.5px" width="7" height="10" viewBox="0 0 7 10"><path d="M1.5 1 L5.5 5 L1.5 9" fill="none" stroke="#d0d0d0" stroke-width="1.2"/></svg>
<div class="a" style="left:2338px;top:817.2px;width:18px;height:18px;background:#fff;border:1.5px solid #000;"></div>
<div class="a" style="left:2339.5px;top:818.7px;width:15px;height:11px;background:#8a3a2a;"></div>
<div class="t" style="left:2361.4px;top:821.29px;font-size:10.6px;line-height:10.6px;color:#d2d2d2;font-family:'Liberation Sans',sans-serif;font-weight:400;letter-spacing:0.05px;">Postcard – Front 3</div>
<svg style="left:2523px;top:821.5px" width="10" height="10" viewBox="0 0 10 10"><circle cx="5" cy="5" r="4.2" fill="none" stroke="#cfcfcf" stroke-width="1"/></svg>
<svg style="left:2269px;top:843.6px" width="13" height="8" viewBox="0 0 13 8"><path d="M0.5 4 Q6.5 -2.5 12.5 4 Q6.5 10.5 0.5 4Z" fill="#c4c4c4"/><circle cx="6.5" cy="4" r="2.2" fill="#535353"/><circle cx="6.5" cy="4.3" r="1" fill="#c4c4c4"/></svg>
<div class="a" style="left:2266px;top:857.6px;width:287px;height:0.8px;background:#5e5e5e;"></div>
<div class="a" style="left:2308.6px;top:839.1px;width:3.6px;height:17px;background:#ffff3c;"></div>
<svg style="left:2319px;top:842.6px" width="7" height="10" viewBox="0 0 7 10"><path d="M1.5 1 L5.5 5 L1.5 9" fill="none" stroke="#d0d0d0" stroke-width="1.2"/></svg>
<div class="a" style="left:2338px;top:838.3000000000001px;width:18px;height:18px;background:#fff;border:1.5px solid #000;"></div>
<div class="a" style="left:2339.5px;top:839.8000000000001px;width:15px;height:11px;background:#756f4f;"></div>
<div class="t" style="left:2361.4px;top:842.39px;font-size:10.6px;line-height:10.6px;color:#d2d2d2;font-family:'Liberation Sans',sans-serif;font-weight:400;letter-spacing:0.05px;">Postcard – Front 4</div>
<svg style="left:2523px;top:842.6px" width="10" height="10" viewBox="0 0 10 10"><circle cx="5" cy="5" r="4.2" fill="none" stroke="#cfcfcf" stroke-width="1"/></svg>
<svg style="left:2269px;top:864.7px" width="13" height="8" viewBox="0 0 13 8"><path d="M0.5 4 Q6.5 -2.5 12.5 4 Q6.5 10.5 0.5 4Z" fill="#c4c4c4"/><circle cx="6.5" cy="4" r="2.2" fill="#535353"/><circle cx="6.5" cy="4.3" r="1" fill="#c4c4c4"/></svg>
<div class="a" style="left:2266px;top:878.7px;width:287px;height:0.8px;background:#5e5e5e;"></div>
<div class="a" style="left:2308.6px;top:860.2px;width:3.6px;height:17px;background:#ff4cff;"></div>
<svg style="left:2319px;top:863.7px" width="7" height="10" viewBox="0 0 7 10"><path d="M1.5 1 L5.5 5 L1.5 9" fill="none" stroke="#d0d0d0" stroke-width="1.2"/></svg>
<div class="a" style="left:2338px;top:859.4000000000001px;width:18px;height:18px;background:#fff;border:1.5px solid #000;"></div>
<div class="a" style="left:2339.5px;top:860.9000000000001px;width:15px;height:11px;background:#756f4f;"></div>
<div class="t" style="left:2361.4px;top:863.49px;font-size:10.6px;line-height:10.6px;color:#d2d2d2;font-family:'Liberation Sans',sans-serif;font-weight:400;letter-spacing:0.05px;">Postcard – Back 1</div>
<svg style="left:2523px;top:863.7px" width="10" height="10" viewBox="0 0 10 10"><circle cx="5" cy="5" r="4.2" fill="none" stroke="#cfcfcf" stroke-width="1"/></svg>
<svg style="left:2269px;top:885.8000000000001px" width="13" height="8" viewBox="0 0 13 8"><path d="M0.5 4 Q6.5 -2.5 12.5 4 Q6.5 10.5 0.5 4Z" fill="#c4c4c4"/><circle cx="6.5" cy="4" r="2.2" fill="#535353"/><circle cx="6.5" cy="4.3" r="1" fill="#c4c4c4"/></svg>
<div class="a" style="left:2266px;top:899.8000000000001px;width:287px;height:0.8px;background:#5e5e5e;"></div>
<div class="a" style="left:2308.6px;top:881.3000000000001px;width:3.6px;height:17px;background:#ff4cff;"></div>
<svg style="left:2319px;top:884.8000000000001px" width="7" height="10" viewBox="0 0 7 10"><path d="M1.5 1 L5.5 5 L1.5 9" fill="none" stroke="#d0d0d0" stroke-width="1.2"/></svg>
<div class="a" style="left:2338px;top:880.5000000000001px;width:18px;height:18px;background:#fff;border:1.5px solid #000;"></div>
<div class="a" style="left:2340px;top:886.3000000000001px;width:6px;height:5px;background:#c8c8c8;"></div>
<div class="a" style="left:2347px;top:888.3000000000001px;width:8px;height:3px;background:#c8c8c8;"></div>
<div class="t" style="left:2361.4px;top:884.59px;font-size:10.6px;line-height:10.6px;color:#d2d2d2;font-family:'Liberation Sans',sans-serif;font-weight:400;letter-spacing:0.05px;">Postcard – Back 2</div>
<svg style="left:2523px;top:884.8000000000001px" width="10" height="10" viewBox="0 0 10 10"><circle cx="5" cy="5" r="4.2" fill="none" stroke="#cfcfcf" stroke-width="1"/></svg>
<svg style="left:2269px;top:906.9000000000001px" width="13" height="8" viewBox="0 0 13 8"><path d="M0.5 4 Q6.5 -2.5 12.5 4 Q6.5 10.5 0.5 4Z" fill="#c4c4c4"/><circle cx="6.5" cy="4" r="2.2" fill="#535353"/><circle cx="6.5" cy="4.3" r="1" fill="#c4c4c4"/></svg>
<div class="a" style="left:2266px;top:920.9000000000001px;width:287px;height:0.8px;background:#5e5e5e;"></div>
<div class="a" style="left:2308.6px;top:902.4000000000001px;width:3.6px;height:17px;background:#ff4cff;"></div>
<svg style="left:2319px;top:905.9000000000001px" width="7" height="10" viewBox="0 0 7 10"><path d="M1.5 1 L5.5 5 L1.5 9" fill="none" stroke="#d0d0d0" stroke-width="1.2"/></svg>
<div class="a" style="left:2338px;top:901.6000000000001px;width:18px;height:18px;background:#fff;border:1.5px solid #000;"></div>
<div class="a" style="left:2339.5px;top:903.1000000000001px;width:15px;height:11px;background:#c4939f;"></div>
<div class="t" style="left:2361.4px;top:905.69px;font-size:10.6px;line-height:10.6px;color:#d2d2d2;font-family:'Liberation Sans',sans-serif;font-weight:400;letter-spacing:0.05px;">Postcard – Back 3</div>
<svg style="left:2523px;top:905.9000000000001px" width="10" height="10" viewBox="0 0 10 10"><circle cx="5" cy="5" r="4.2" fill="none" stroke="#cfcfcf" stroke-width="1"/></svg>
<svg style="left:2269px;top:928.0px" width="13" height="8" viewBox="0 0 13 8"><path d="M0.5 4 Q6.5 -2.5 12.5 4 Q6.5 10.5 0.5 4Z" fill="#c4c4c4"/><circle cx="6.5" cy="4" r="2.2" fill="#535353"/><circle cx="6.5" cy="4.3" r="1" fill="#c4c4c4"/></svg>
<div class="a" style="left:2266px;top:942.0px;width:287px;height:0.8px;background:#5e5e5e;"></div>
<div class="a" style="left:2308.6px;top:923.5px;width:3.6px;height:17px;background:#ff4cff;"></div>
<svg style="left:2319px;top:927.0px" width="7" height="10" viewBox="0 0 7 10"><path d="M1.5 1 L5.5 5 L1.5 9" fill="none" stroke="#d0d0d0" stroke-width="1.2"/></svg>
<div class="a" style="left:2338px;top:922.7px;width:18px;height:18px;background:#fff;border:1.5px solid #000;"></div>
<svg style="left:2339.5px;top:924.2px" width="15" height="15" viewBox="0 0 15 15"><path d="M1 5 l3-1 1 3 -2 2z M9 10 l4-2 1 3 -3 1z M5 6 l2 1 -1 1z" fill="#756f4e"/></svg>
<div class="t" style="left:2361.4px;top:926.79px;font-size:10.6px;line-height:10.6px;color:#d2d2d2;font-family:'Liberation Sans',sans-serif;font-weight:400;letter-spacing:0.05px;">Postcard – Back 4</div>
<svg style="left:2523px;top:927.0px" width="10" height="10" viewBox="0 0 10 10"><circle cx="5" cy="5" r="4.2" fill="none" stroke="#cfcfcf" stroke-width="1"/></svg>
<div class="a" style="left:2286px;top:752.7px;width:0.8px;height:189.9px;background:#5e5e5e;"></div>
<div class="a" style="left:2307px;top:752.7px;width:0.8px;height:189.9px;background:#5e5e5e;"></div>
<div class="a" style="left:2517px;top:752.7px;width:0.8px;height:189.9px;background:#5e5e5e;"></div>
<div class="t" style="left:2265px;top:1350.68px;font-size:11.2px;line-height:11.2px;color:#cfcfcf;font-family:'Liberation Sans',sans-serif;font-weight:400;letter-spacing:0px;">9 Layers</div>
<svg style="left:2388px;top:1349px" width="140" height="14" viewBox="0 0 140 14"><path d="M8 3 H1.5 V13 H12 V7 M7 7 L13 1 M9 1 H13 V5" fill="none" stroke="#cfcfcf" stroke-width="1.2"/><circle cx="36" cy="5.5" r="4.5" fill="none" stroke="#7a7a7a" stroke-width="1.2"/><path d="M32.5 9 L28 13.5" stroke="#7a7a7a" stroke-width="1.6"/><rect x="53" y="1" width="8" height="8" fill="none" stroke="#cfcfcf" stroke-width="1.2"/><rect x="56" y="4" width="8" height="9" fill="none" stroke="#cfcfcf" stroke-width="1.1"/><rect x="54" y="2" width="6" height="6" fill="#cfcfcf"/><path d="M78 1 V6 H83 M81 4 L83 6 L81 8" fill="none" stroke="#cfcfcf" stroke-width="1.2"/><path d="M84 1 h8 v12 h-6 v-6 h-2z" fill="#cfcfcf"/><path d="M106 1 h9 v12 h-6 v-6 h-3z" fill="#cfcfcf"/><path d="M127 3 h11 M130 3 v-2 h5 v2 M128 4 v9.5 h9 v-9.5 M131 5 v7 M134 5 v7" fill="none" stroke="#cfcfcf" stroke-width="1.2"/></svg>
<div class="a" style="left:2257px;top:1349px;width:3px;height:16px;background:#383838;"></div>
<div class="a" style="left:0px;top:57px;width:72px;height:1308px;background:#535353;"></div>
<div class="a" style="left:0px;top:57px;width:1px;height:1308px;background:#3c3c3c;"></div>
<div class="a" style="left:0px;top:57px;width:72px;height:13px;background:#414141;"></div>
<div class="a" style="left:71px;top:57px;width:3px;height:1308px;background:#3a3a3a;"></div>
<svg style="left:6px;top:59px" width="10" height="8" viewBox="0 0 10 8"><path d="M4 1 L1 4 L4 7 M8 1 L5 4 L8 7" fill="none" stroke="#cfcfcf" stroke-width="1"/></svg>
<svg style="left:26px;top:73px" width="20" height="5" viewBox="0 0 20 5"><rect x="0" y="0" width="1" height="4" fill="#2e2e2e"/><rect x="2" y="0" width="1" height="4" fill="#2e2e2e"/><rect x="4" y="0" width="1" height="4" fill="#2e2e2e"/><rect x="6" y="0" width="1" height="4" fill="#2e2e2e"/><rect x="8" y="0" width="1" height="4" fill="#2e2e2e"/><rect x="10" y="0" width="1" height="4" fill="#2e2e2e"/><rect x="12" y="0" width="1" height="4" fill="#2e2e2e"/><rect x="14" y="0" width="1" height="4" fill="#2e2e2e"/><rect x="16" y="0" width="1" height="4" fill="#2e2e2e"/><rect x="18" y="0" width="1" height="4" fill="#2e2e2e"/></svg>
<svg style="left:9.5px;top:89.5px" width="24" height="24" viewBox="0 0 24 24"><path d="M6 3 L6 20.5 L10.5 16 L17.5 16 Z" fill="none" stroke="#c9c9c9" stroke-width="1.2"/></svg>
<svg style="left:39.5px;top:89.5px" width="24" height="24" viewBox="0 0 24 24"><path d="M6 3 L6 20.5 L10.5 16 L18 15.5 Z" fill="#c9c9c9"/><path d="M23 17 L23 20.5 L19.5 20.5Z" fill="#c9c9c9"/></svg>
<svg style="left:9.5px;top:113.5px" width="24" height="24" viewBox="0 0 24 24"><path d="M3.5 20 L13.5 10" stroke="#c9c9c9" stroke-width="1.8"/><path d="M7 4 l1 2 2 .5 -1.6 1.3 .4 2 -1.8-1 -1.8 1 .4-2 -1.6-1.3 2-.5z" fill="#c9c9c9"/><path d="M16.5 3 l.7 1.4 1.4.3 -1 .9 .3 1.4 -1.4-.7 -1.3.7 .3-1.4 -1-.9 1.4-.3z" fill="#c9c9c9"/><circle cx="16" cy="11" r="1" fill="#c9c9c9"/></svg>
<svg style="left:39.5px;top:113.5px" width="24" height="24" viewBox="0 0 24 24"><path d="M7 16 C2 13 3 5 11 5 C18 5 19 10 16 12" fill="none" stroke="#c9c9c9" stroke-width="1.2"/><circle cx="7.5" cy="14" r="1.6" fill="none" stroke="#c9c9c9" stroke-width="1.2"/><path d="M7.5 15.5 q1 4-2 5" fill="none" stroke="#c9c9c9" stroke-width="1.2"/><path d="M12 8 L12 21 L15 17.5 L19.5 17.5Z" fill="#c9c9c9"/></svg>
<svg style="left:9.5px;top:137.5px" width="24" height="24" viewBox="0 0 24 24"><path d="M4 20 L6 13 L11 8 L16 13 L11 18 Z" fill="#c9c9c9"/><path d="M4 20 L9 15" stroke="#535353" stroke-width="1"/><circle cx="9.5" cy="14.5" r="1" fill="#535353"/><path d="M12 7 L14.5 4.5 L19.5 9.5 L17 12Z" fill="#c9c9c9"/><path d="M23 17 L23 20.5 L19.5 20.5Z" fill="#c9c9c9"/></svg>
<svg style="left:39.5px;top:137.5px" width="24" height="24" viewBox="0 0 24 24"><path d="M6 20 L8 13 L11 8 L16 13 L11 18 Z" fill="#c9c9c9"/><path d="M6 20 L9 15" stroke="#535353" stroke-width="1"/><circle cx="9.5" cy="14.5" r="1" fill="#535353"/><path d="M12 7 L14.5 4.5 L19.5 9.5 L17 12Z" fill="#c9c9c9"/><path d="M3 4 q4 3 0 9 q-2 5 3 7" fill="none" stroke="#c9c9c9" stroke-width="1.2"/></svg>
<div class="a" style="left:7px;top:162.5px;width:28px;height:21.5px;background:#2f2f2f;border-radius:3px;"></div>
<svg style="left:9.5px;top:161.5px" width="24" height="24" viewBox="0 0 24 24"><path d="M5 5 H19 V8.5 H17.5 V6.8 H13.2 V18 H15.5 V19.5 H8.5 V18 H10.8 V6.8 H6.5 V8.5 H5Z" fill="#c9c9c9"/><path d="M23 17 L23 20.5 L19.5 20.5Z" fill="#c9c9c9"/></svg>
<svg style="left:39.5px;top:161.5px" width="24" height="24" viewBox="0 0 24 24"><path d="M5 19 L19 5" stroke="#c9c9c9" stroke-width="1.2"/><path d="M23 17 L23 20.5 L19.5 20.5Z" fill="#c9c9c9"/></svg>
<svg style="left:9.5px;top:185.5px" width="24" height="24" viewBox="0 0 24 24"><rect x="4.5" y="5.5" width="15" height="13" fill="#666" stroke="#c9c9c9" stroke-width="1.2"/><path d="M23 17 L23 20.5 L19.5 20.5Z" fill="#c9c9c9"/></svg>
<svg style="left:39.5px;top:185.5px" width="24" height="24" viewBox="0 0 24 24"><path d="M19 3 Q20 4 18 7 L13 13 L11 11 L17 4 Q18 2.5 19 3Z" fill="#c9c9c9"/><path d="M4 19.5 Q5 13 9 12 Q12 12 12 15 Q11 19 4 19.5Z" fill="#c9c9c9"/><path d="M23 17 L23 20.5 L19.5 20.5Z" fill="#c9c9c9"/></svg>
<svg style="left:9.5px;top:209.5px" width="24" height="24" viewBox="0 0 24 24"><path d="M9 17 A6.3 6.3 0 1 1 14 7.5" fill="#666" stroke="#c9c9c9" stroke-width="1.2"/><path d="M18.5 6 L20 7.5 L10 17.5 L7.5 19 L8.5 16Z" fill="#c9c9c9"/><path d="M23 17 L23 20.5 L19.5 20.5Z" fill="#c9c9c9"/></svg>
<svg style="left:39.5px;top:209.5px" width="24" height="24" viewBox="0 0 24 24"><path d="M13 4 L20 11 L14.5 16.5 L7.5 9.5Z" fill="#c9c9c9"/><path d="M7.5 9.5 L14.5 16.5 L11.5 19.5 L4.5 12.5Z" fill="none" stroke="#c9c9c9" stroke-width="1.1"/><path d="M23 17 L23 20.5 L19.5 20.5Z" fill="#c9c9c9"/></svg>
<svg style="left:9.5px;top:233.5px" width="24" height="24" viewBox="0 0 24 24"><path d="M8 6.5 A7 7 0 0 1 19 12" fill="none" stroke="#c9c9c9" stroke-width="1.2"/><path d="M3.5 7 L9 4 L9 9Z" fill="#c9c9c9"/><path d="M5 14 A7 7 0 0 0 18.5 15" fill="none" stroke="#c9c9c9" stroke-width="1.2" stroke-dasharray="1 1.8"/><path d="M23 17 L23 20.5 L19.5 20.5Z" fill="#c9c9c9"/></svg>
<svg style="left:39.5px;top:233.5px" width="24" height="24" viewBox="0 0 24 24"><rect x="9.5" y="3.5" width="10" height="10" fill="none" stroke="#c9c9c9" stroke-width="1.2"/><rect x="4.5" y="10.5" width="8" height="8" fill="none" stroke="#c9c9c9" stroke-width="1.2"/><path d="M13 10 L17 6 M14.5 6 H17 V8.5" fill="none" stroke="#c9c9c9" stroke-width="1.2"/><path d="M23 17 L23 20.5 L19.5 20.5Z" fill="#c9c9c9"/></svg>
<svg style="left:9.5px;top:257.5px" width="24" height="24" viewBox="0 0 24 24"><path d="M6 5 q-1 4 4 6 q5 2 9-2 q2 3 -1 6 q-6 4 -12 -1 q-3-3 0-9z" fill="#c9c9c9"/><circle cx="10" cy="13" r="1.7" fill="#535353" stroke="#c9c9c9" stroke-width="1"/><path d="M4 19 L10 13 L14 8" fill="none" stroke="#c9c9c9" stroke-width="1.2"/><rect x="3" y="18" width="2" height="2" fill="none" stroke="#c9c9c9" stroke-width="1.2"/><path d="M23 17 L23 20.5 L19.5 20.5Z" fill="#c9c9c9"/></svg>
<svg style="left:39.5px;top:257.5px" width="24" height="24" viewBox="0 0 24 24"><path d="M5 4 L5 18 L12 11.5Z" fill="#c9c9c9"/><rect x="9" y="6" width="11" height="12" fill="none" stroke="#c9c9c9" stroke-width="1.2" stroke-dasharray="2 1.5"/><path d="M23 17 L23 20.5 L19.5 20.5Z" fill="#c9c9c9"/></svg>
<svg style="left:9.5px;top:281.5px" width="24" height="24" viewBox="0 0 24 24"><path d="M10 18 A5.5 5.5 0 1 1 11 7 A5.5 5.5 0 0 1 19.5 11" fill="none" stroke="#c9c9c9" stroke-width="1.2"/><path d="M7 12 h6" stroke="#c9c9c9" stroke-width="1" stroke-dasharray="1 1.2"/><path d="M14 11 L14 22 L17 19 L21 19Z" fill="#c9c9c9"/><path d="M23 17 L23 20.5 L19.5 20.5Z" fill="#c9c9c9"/></svg>
<svg style="left:39.5px;top:281.5px" width="24" height="24" viewBox="0 0 24 24"><path d="M4 4 L4 20 L20 20 M4 4 L12 7 L12 19 M4 12 L12 13 M8 5.5 V19" fill="none" stroke="#c9c9c9" stroke-width="1.2"/><path d="M13 14 L19 17 H13Z" fill="#777"/><path d="M12 17.5 H20" fill="none" stroke="#c9c9c9" stroke-width="1.2"/><path d="M23 17 L23 20.5 L19.5 20.5Z" fill="#c9c9c9"/></svg>
<svg style="left:9.5px;top:305.5px" width="24" height="24" viewBox="0 0 24 24"><rect x="4.5" y="5" width="15" height="14" fill="none" stroke="#c9c9c9" stroke-width="1.2"/><path d="M5 11 q6-5 14-1 M8 5 q-2 6 2 14 M5 16 q7-4 14 0 M14 5 q3 6 0 14" fill="none" stroke="#c9c9c9" stroke-width="1"/></svg>
<div class="a" style="left:43px;top:310px;width:16px;height:14px;background:linear-gradient(90deg,#1a1a1a,#d8d8d8);border:1.2px solid #c9c9c9;"></div>
<svg style="left:9.5px;top:329.5px" width="24" height="24" viewBox="0 0 24 24"><path d="M4.5 19.5 L13 11 L15 13 L6.5 21.5 Q4 22 4.5 19.5Z" fill="none" stroke="#c9c9c9" stroke-width="1.2"/><path d="M12 9 L15 6 Q17 3 19.5 5.5 Q21 8 18 9 L15 12Z" fill="#c9c9c9"/><path d="M23 17 L23 20.5 L19.5 20.5Z" fill="#c9c9c9"/></svg>
<svg style="left:39.5px;top:329.5px" width="24" height="24" viewBox="0 0 24 24"><rect x="4" y="4" width="8" height="7" fill="#c9c9c9"/><circle cx="12.5" cy="12" r="4" fill="#777" stroke="#c9c9c9" stroke-width="1"/><circle cx="16.5" cy="16" r="4.2" fill="#535353" stroke="#c9c9c9" stroke-width="1.2"/></svg>
<svg style="left:9.5px;top:353.5px" width="24" height="24" viewBox="0 0 24 24"><path d="M3 4h2v2H3z M6 4h2v2H6z M9 4h2v2H9z M3 7h2v2H3z M6 7h2v2H6z M3 10h2v2H3z" fill="#c9c9c9"/><rect x="10" y="9" width="9" height="11" fill="none" stroke="#c9c9c9" stroke-width="1.2"/><circle cx="14.5" cy="14" r="2" fill="none" stroke="#c9c9c9" stroke-width="1.2"/><rect x="12" y="6" width="5" height="3" fill="#c9c9c9"/><path d="M23 17 L23 20.5 L19.5 20.5Z" fill="#c9c9c9"/></svg>
<svg style="left:39.5px;top:353.5px" width="24" height="24" viewBox="0 0 24 24"><path d="M4 3 V19 H20" fill="none" stroke="#c9c9c9" stroke-width="1.2"/><rect x="7" y="11" width="3" height="8" fill="#c9c9c9"/><rect x="12" y="6" width="3" height="13" fill="#c9c9c9"/><rect x="16.5" y="9" width="2.5" height="10" fill="#c9c9c9"/><path d="M23 17 L23 20.5 L19.5 20.5Z" fill="#c9c9c9"/></svg>
<svg style="left:9.5px;top:377.5px" width="24" height="24" viewBox="0 0 24 24"><path d="M4 8 H10 M8 4 V10" fill="none" stroke="#c9c9c9" stroke-width="1.2"/><path d="M9 9.5 H16 L19 12.5 V19.5 H9Z" fill="#666" stroke="#c9c9c9" stroke-width="1.2"/></svg>
<svg style="left:39.5px;top:377.5px" width="24" height="24" viewBox="0 0 24 24"><path d="M3.5 20 L13.5 8.5 L17 11 Z" fill="none" stroke="#c9c9c9" stroke-width="1.2"/><path d="M13 7.5 L15.5 3.5 L20 7.5 L17 11Z" fill="#c9c9c9"/><path d="M23 17 L23 20.5 L19.5 20.5Z" fill="#c9c9c9"/></svg>
<svg style="left:9.5px;top:401.5px" width="24" height="24" viewBox="0 0 24 24"><path d="M6 21 L3 14 Q3 12 5 13 L7 15 V5 Q8 3.5 9 5 V11 V4 Q10 2.5 11 4 V11 V4.5 Q12 3 13 4.5 V11 V6 Q14 4.5 15 6 V14 L18 11 Q19.5 10.5 19 12.5 L14.5 21Z" fill="#c9c9c9"/><path d="M23 17 L23 20.5 L19.5 20.5Z" fill="#c9c9c9"/></svg>
<svg style="left:39.5px;top:401.5px" width="24" height="24" viewBox="0 0 24 24"><circle cx="10" cy="10" r="6" fill="none" stroke="#c9c9c9" stroke-width="1.2"/><path d="M14.5 14.5 L20 20" stroke="#c9c9c9" stroke-width="1.8"/></svg>
<div class="a" style="left:6px;top:427px;width:60px;height:1px;background:#606060;"></div>
<div class="a" style="left:25px;top:451px;width:34px;height:34px;background:#000;border:1px solid #fff;"></div>
<div class="a" style="left:33px;top:459px;width:18px;height:18px;background:#535353;border:1px solid #fff;"></div>
<div class="a" style="left:7px;top:432.5px;width:35px;height:35px;background:#fff;box-shadow:0 0 0 1px #3a3a3a;"></div>
<svg style="left:50px;top:432px" width="13" height="13" viewBox="0 0 13 13"><path d="M2 6 Q2 2 7 2 L7 0.5 L9.5 3 L7 5.5 L7 4 Q4 4 4 6Z M6 11 L6.5 8 Q10 8 10 5 H8.5 L11 2.5 L13 5 H11.8 Q11.8 10 6.5 10Z" fill="#c9c9c9"/></svg>
<svg style="left:6px;top:472px" width="13" height="14" viewBox="0 0 13 14"><rect x="4.5" y="5" width="7.5" height="7.5" fill="#000" stroke="#fff" stroke-width="1"/><rect x="0.5" y="0.5" width="7.5" height="7.5" fill="#fff" stroke="#222" stroke-width="1"/></svg>
<div class="a" style="left:7px;top:492px;width:58px;height:20px;background:#4e4e4e;border:1px solid #5a5a5a;border-radius:3px;"></div>
<div class="a" style="left:7px;top:492px;width:19px;height:20px;background:#3a3a3a;border-radius:3px 0 0 3px;"></div>
<div class="a" style="left:9px;top:496px;width:13px;height:12.5px;background:#fff;border:1.5px solid #000;"></div>
<div class="a" style="left:29px;top:496px;width:13px;height:12.5px;background:linear-gradient(90deg,#fff,#222);border:1.5px solid #000;"></div>
<svg style="left:49px;top:496px" width="13" height="13" viewBox="0 0 13 13"><rect x="0.75" y="0.75" width="11.5" height="11.5" fill="#fff" stroke="#000" stroke-width="1.5"/><path d="M2 11 L11 2" stroke="#f00" stroke-width="2.2"/></svg>
<div class="a" style="left:7px;top:517px;width:58px;height:18px;background:#4e4e4e;border:1px solid #5a5a5a;border-radius:3px;"></div>
<div class="a" style="left:7px;top:517px;width:19px;height:18px;background:#363636;border-radius:3px 0 0 3px;"></div>
<svg style="left:10px;top:519px" width="14" height="14" viewBox="0 0 14 14"><circle cx="6" cy="6" r="4.5" fill="#666" stroke="#c9c9c9" stroke-width="1"/><rect x="7" y="7" width="6" height="6" fill="#c9c9c9"/></svg>
<svg style="left:30px;top:519px" width="14" height="14" viewBox="0 0 14 14"><circle cx="6" cy="6" r="4.5" fill="#666" stroke="#c9c9c9" stroke-width="1"/><rect x="7" y="7" width="6" height="6" fill="#c9c9c9"/></svg>
<svg style="left:50px;top:520px" width="12" height="12" viewBox="0 0 12 12"><circle cx="6" cy="6" r="4" fill="none" stroke="#6e6e6e" stroke-width="1"/><path d="M6 6 h4 a4 4 0 0 1 -4 4z" fill="#6e6e6e"/></svg>
<svg style="left:25px;top:543px" width="23" height="18" viewBox="0 0 23 18"><rect x="0.6" y="5" width="13" height="11" fill="#6a6a6a" stroke="#c9c9c9" stroke-width="1.2"/><rect x="8.6" y="0.6" width="13.5" height="11" fill="#6a6a6a" stroke="#c9c9c9" stroke-width="1.2"/><rect x="8.6" y="0.6" width="13.5" height="2" fill="#c9c9c9"/><rect x="0.6" y="5" width="8" height="1.8" fill="#c9c9c9"/></svg>
<svg style="left:28px;top:580px" width="16" height="6" viewBox="0 0 16 6"><circle cx="3" cy="3" r="2" fill="#c9c9c9"/><circle cx="8" cy="3" r="2" fill="#c9c9c9"/><circle cx="13" cy="3" r="2" fill="#c9c9c9"/></svg>
<div class="a" style="left:0px;top:0px;width:2560px;height:22px;background:linear-gradient(90deg,#acd9e7 0%,#b0d2e6 10%,#b4c8e4 23%,#bccfe4 37%,#c4cbe0 45%,#c6c2e2 55%,#d0c4e2 63%,#d6c6e2 70%,#dbd0e4 76%,#e2dde8 85%,#e8e7ec 100%);"></div>
<div class="a" style="left:443px;top:0px;width:50px;height:22px;background:#1f6fe0;"></div>
<svg style="left:21px;top:2.3px" width="12.8" height="15.5" viewBox="0 0 814 1000"><path fill="#0b1b22" d="M788.1 340.9c-5.8 4.5-108.2 62.2-108.2 190.5 0 148.4 130.3 200.9 134.2 202.2-.6 3.2-20.7 71.9-68.7 141.9-42.8 61.6-87.5 123.1-155.5 123.1s-85.5-39.5-164-39.5c-76.5 0-103.7 40.8-165.9 40.8s-105.6-57-155.5-127C46.700 790.7 0 663 0 541.8c0-194.4 126.4-297.5 250.8-297.5 66.1 0 121.2 43.4 162.7 43.4 39.5 0 101.1-46 176.3-46 28.5 0 130.9 2.6 198.3 99.2zm-234-181.5c31.1-36.9 53.1-88.1 53.1-139.3 0-7.1-.6-14.3-1.9-20.1-50.6 1.9-110.8 33.7-147.1 75.8-28.5 32.4-55.1 83.6-55.1 135.5 0 7.8 1.3 15.6 1.9 18.1 3.2.6 8.4 1.3 13.6 1.3 45.4 0 102.5-30.4 135.5-71.3z"/></svg>
<div class="t" style="left:55px;top:3.72px;font-size:14px;line-height:14px;color:#0e1a20;font-family:'Liberation Sans',sans-serif;font-weight:700;letter-spacing:0.25px;">Illustrator</div>
<div class="t" style="left:141px;top:3.72px;font-size:14px;line-height:14px;color:#131b22;font-family:'Liberation Sans',sans-serif;font-weight:400;letter-spacing:0.15px;-webkit-text-stroke:0.2px #131b22;">File</div>
<div class="t" style="left:182px;top:3.72px;font-size:14px;line-height:14px;color:#131b22;font-family:'Liberation Sans',sans-serif;font-weight:400;letter-spacing:0.15px;-webkit-text-stroke:0.2px #131b22;">Edit</div>
<div class="t" style="left:225px;top:3.72px;font-size:14px;line-height:14px;color:#131b22;font-family:'Liberation Sans',sans-serif;font-weight:400;letter-spacing:0.15px;-webkit-text-stroke:0.2px #131b22;">Object</div>
<div class="t" style="left:286.6px;top:3.72px;font-size:14px;line-height:14px;color:#131b22;font-family:'Liberation Sans',sans-serif;font-weight:400;letter-spacing:0.15px;-webkit-text-stroke:0.2px #131b22;">Type</div>
<div class="t" style="left:336px;top:3.72px;font-size:14px;line-height:14px;color:#131b22;font-family:'Liberation Sans',sans-serif;font-weight:400;letter-spacing:0.15px;-webkit-text-stroke:0.2px #131b22;">Select</div>
<div class="t" style="left:395.7px;top:3.72px;font-size:14px;line-height:14px;color:#131b22;font-family:'Liberation Sans',sans-serif;font-weight:400;letter-spacing:0.15px;-webkit-text-stroke:0.2px #131b22;">Effect</div>
<div class="t" style="left:452.5px;top:3.72px;font-size:14px;line-height:14px;color:#ffffff;font-family:'Liberation Sans',sans-serif;font-weight:400;letter-spacing:0.15px;-webkit-text-stroke:0.2px #ffffff;">View</div>
<div class="t" style="left:502px;top:3.72px;font-size:14px;line-height:14px;color:#131b22;font-family:'Liberation Sans',sans-serif;font-weight:400;letter-spacing:0.15px;-webkit-text-stroke:0.2px #131b22;">Window</div>
<div class="t" style="left:572.3px;top:3.72px;font-size:14px;line-height:14px;color:#131b22;font-family:'Liberation Sans',sans-serif;font-weight:400;letter-spacing:0.15px;-webkit-text-stroke:0.2px #131b22;">Help</div>
<div class="t" style="left:2305px;top:4.24px;font-size:13px;line-height:13px;color:#1d1d1d;font-family:'Liberation Sans',sans-serif;font-weight:400;letter-spacing:0px;">100%</div>
<div class="t" style="left:2381px;top:3.72px;font-size:14px;line-height:14px;color:#1d1d1d;font-family:'Liberation Sans',sans-serif;font-weight:400;letter-spacing:0.05px;">Thu 11:42 AM</div>
<svg style="left:2004px;top:0px" width="22" height="22" viewBox="0 0 22 22"><circle cx="8" cy="12" r="5" fill="none" stroke="#1d1d1d" stroke-width="2.2"/><circle cx="13" cy="6" r="3.3" fill="#1d1d1d"/><path d="M2 14 l4 3 M11 16 l3 3" stroke="#1d1d1d" stroke-width="2"/></svg>
<svg style="left:2030px;top:0px" width="22" height="22" viewBox="0 0 22 22"><path d="M5 3 l5 3 -5 3 -5-3z M15 3 l5 3 -5 3 -5-3z M10 8 l5 3 -5 3 -5-3z" transform="translate(0,0)" fill="#1d1d1d"/><path d="M10 13 l5 3 -5 3z" fill="#1d1d1d"/><circle cx="5" cy="16" r="4.3" fill="#e8281c"/><text x="5" y="19" font-size="7" fill="#fff" text-anchor="middle" font-family="Liberation Sans" font-weight="700">2</text></svg>
<svg style="left:2059px;top:0px" width="22" height="22" viewBox="0 0 22 22"><path d="M7 4 a7 7 0 0 0 0 14 z M9 4 a7 7 0 0 1 0 14z" fill="#1d1d1d"/><path d="M6 9 h6 v4 h-6z" fill="#d8d0e0"/></svg>
<svg style="left:2084px;top:0px" width="22" height="22" viewBox="0 0 22 22"><path d="M4 15 a5 5 0 0 1 2-9 a6 6 0 0 1 11 1" fill="none" stroke="#1d1d1d" stroke-width="2.2"/><circle cx="10" cy="12" r="3" fill="none" stroke="#1d1d1d" stroke-width="2"/><circle cx="16.5" cy="13" r="4.2" fill="#e8281c"/></svg>
<svg style="left:2114px;top:0px" width="22" height="22" viewBox="0 0 22 22"><path d="M4 5 q5-3 9 0 q2 6 0 13 q-3 2-5-1 q-4 0-5-5z" fill="#1d1d1d"/><path d="M9 4 v4 h-4" fill="none" stroke="#d9d2e2" stroke-width="1"/></svg>
<svg style="left:2139px;top:0px" width="22" height="22" viewBox="0 0 22 22"><path d="M1 4 h7 q3 0 3 3 q0 2-2 3 q3 1 3 3 q0 4-4 4 h-7z" fill="#1d1d1d"/><path d="M4 7 h3 v2 h-3z M4 11 h3 v3 h-3z" fill="#dad4e3"/><path d="M14 4 v13 M16 6 q3 4 0 9" stroke="#1d1d1d" stroke-width="2" fill="none"/></svg>
<svg style="left:2166px;top:0px" width="22" height="22" viewBox="0 0 22 22"><path d="M7 3 l7 0 4 7 -4 7 -7 0 -4-7z" fill="none" stroke="#1d1d1d" stroke-width="3"/></svg>
<svg style="left:2189px;top:0px" width="22" height="22" viewBox="0 0 22 22"><circle cx="9" cy="11" r="8" fill="none" stroke="#1d1d1d" stroke-width="1.4"/><circle cx="7.5" cy="9" r="3" fill="none" stroke="#1d1d1d" stroke-width="1.6"/><path d="M9.5 11 l4 4" stroke="#1d1d1d" stroke-width="2"/></svg>
<svg style="left:2214px;top:0px" width="22" height="22" viewBox="0 0 22 22"><path d="M3 16 a4 4 0 0 1 1-8 a6 6 0 0 1 11-1 a4.5 4.5 0 0 1 2 9z" fill="#6a6a6e"/><circle cx="16" cy="16" r="5" fill="#2c2c2c"/><path d="M14 14 l4 4 M18 14 l-4 4" stroke="#eee" stroke-width="1.2"/></svg>
<svg style="left:2244px;top:0px" width="22" height="22" viewBox="0 0 22 22"><path d="M2 4 h16 v11 h-3 M5 15 h-3 v-11" fill="none" stroke="#1d1d1d" stroke-width="1.5"/><path d="M10 11 l5 7 h-10z" fill="#1d1d1d"/></svg>
<svg style="left:2273px;top:0px" width="22" height="22" viewBox="0 0 22 22"><path d="M1 8 a13 13 0 0 1 18 0 l-1.6 1.7 a10.5 10.5 0 0 0 -14.8 0z M4 11 a9 9 0 0 1 12 0 l-1.6 1.7 a6.5 6.5 0 0 0 -8.8 0z M7 14 a4.8 4.8 0 0 1 6 0 l-3 3z" fill="#1d1d1d"/></svg>
<svg style="left:2340px;top:0px" width="24" height="22" viewBox="0 0 24 22"><rect x="1" y="6" width="19" height="10" rx="2" fill="none" stroke="#1d1d1d" stroke-width="1.4"/><rect x="21" y="9" width="2" height="4" fill="#1d1d1d"/><path d="M3 8 h15 v6 h-15z" fill="#1d1d1d"/><path d="M12 7 l-4 5 h3 l-2 4 5-5 h-3z" fill="#e0dce6"/></svg>
<svg style="left:2488px;top:0px" width="22" height="22" viewBox="0 0 22 22"><circle cx="7" cy="9" r="5" fill="none" stroke="#1d1d1d" stroke-width="1.8"/><path d="M10.5 12.5 l4.5 4.5" stroke="#1d1d1d" stroke-width="2"/></svg>
<svg style="left:2519px;top:0px" width="20" height="22" viewBox="0 0 20 22"><path d="M1 5 h2 M6 5 h12 M1 9 h2 M6 9 h12 M1 13 h2 M6 13 h12 M1 17 h2 M6 17 h12" stroke="#1d1d1d" stroke-width="2"/></svg>
<div class="a" style="left:443px;top:22px;width:246px;height:817px;background:#b9b9bb;border-radius:0 0 5px 5px;box-shadow:0 4px 10px rgba(0,0,0,.35),0 0 0 0.5px rgba(0,0,0,.25);"></div>
<div class="t" style="left:464px;top:27.80px;font-size:14px;line-height:14px;color:#0a0a0a;font-family:'Liberation Sans',sans-serif;font-weight:400;letter-spacing:0.1px;-webkit-text-stroke:0.25px #0a0a0a;">View using CPU</div>
<div class="t" style="right:1880.7px;top:27.80px;font-size:14px;line-height:14px;color:#0a0a0a;font-family:'Liberation Sans',sans-serif;font-weight:400;letter-spacing:0.3px;-webkit-text-stroke:0.25px #0a0a0a;">⌘E</div>
<div class="t" style="left:464px;top:46.80px;font-size:14px;line-height:14px;color:#0a0a0a;font-family:'Liberation Sans',sans-serif;font-weight:400;letter-spacing:0.1px;-webkit-text-stroke:0.25px #0a0a0a;">Outline</div>
<div class="t" style="right:1880.7px;top:46.80px;font-size:14px;line-height:14px;color:#0a0a0a;font-family:'Liberation Sans',sans-serif;font-weight:400;letter-spacing:0.3px;-webkit-text-stroke:0.25px #0a0a0a;">⌘Y</div>
<div class="a" style="left:443px;top:69px;width:246px;height:1.5px;background:#a5a5a7;"></div>
<div class="t" style="left:464px;top:77.80px;font-size:14px;line-height:14px;color:#0a0a0a;font-family:'Liberation Sans',sans-serif;font-weight:400;letter-spacing:0.1px;-webkit-text-stroke:0.25px #0a0a0a;">Overprint Preview</div>
<div class="t" style="right:1880.7px;top:77.80px;font-size:14px;line-height:14px;color:#0a0a0a;font-family:'Liberation Sans',sans-serif;font-weight:400;letter-spacing:0.3px;-webkit-text-stroke:0.25px #0a0a0a;">⌥<svg style="position:static;display:inline-block;vertical-align:-1px;margin-right:2px" width="11" height="12" viewBox="0 0 11 12"><path d="M5.5 1 L10.2 6.2 H7.6 V11 H3.4 V6.2 H0.8 Z" fill="none" stroke="#0a0a0a" stroke-width="1.2" stroke-linejoin="round"/></svg>⌘Y</div>
<div class="t" style="left:464px;top:96.80px;font-size:14px;line-height:14px;color:#0a0a0a;font-family:'Liberation Sans',sans-serif;font-weight:400;letter-spacing:0.1px;-webkit-text-stroke:0.25px #0a0a0a;">Pixel Preview</div>
<div class="t" style="right:1880.7px;top:96.80px;font-size:14px;line-height:14px;color:#0a0a0a;font-family:'Liberation Sans',sans-serif;font-weight:400;letter-spacing:0.3px;-webkit-text-stroke:0.25px #0a0a0a;">⌥⌘Y</div>
<div class="t" style="left:464px;top:115.80px;font-size:14px;line-height:14px;color:#0a0a0a;font-family:'Liberation Sans',sans-serif;font-weight:400;letter-spacing:0.1px;-webkit-text-stroke:0.25px #0a0a0a;">Trim View</div>
<div class="a" style="left:443px;top:138px;width:246px;height:1.5px;background:#a5a5a7;"></div>
<div class="t" style="left:464px;top:146.80px;font-size:14px;line-height:14px;color:#0a0a0a;font-family:'Liberation Sans',sans-serif;font-weight:400;letter-spacing:0.1px;-webkit-text-stroke:0.25px #0a0a0a;">Presentation Mode</div>
<div class="a" style="left:443px;top:169px;width:246px;height:1.5px;background:#a5a5a7;"></div>
<div class="t" style="left:464px;top:177.80px;font-size:14px;line-height:14px;color:#0a0a0a;font-family:'Liberation Sans',sans-serif;font-weight:400;letter-spacing:0.1px;-webkit-text-stroke:0.25px #0a0a0a;">Proof Setup</div>
<svg style="left:668px;top:180.5px" width="9" height="10"><path d="M0 0 L9 5 L0 10Z" fill="#111"/></svg>
<div class="t" style="left:464px;top:196.80px;font-size:14px;line-height:14px;color:#0a0a0a;font-family:'Liberation Sans',sans-serif;font-weight:400;letter-spacing:0.1px;-webkit-text-stroke:0.25px #0a0a0a;">Proof Colors</div>
<div class="a" style="left:443px;top:219px;width:246px;height:1.5px;background:#a5a5a7;"></div>
<div class="t" style="left:464px;top:227.80px;font-size:14px;line-height:14px;color:#0a0a0a;font-family:'Liberation Sans',sans-serif;font-weight:400;letter-spacing:0.1px;-webkit-text-stroke:0.25px #0a0a0a;">Zoom In</div>
<div class="t" style="right:1880.7px;top:227.80px;font-size:14px;line-height:14px;color:#0a0a0a;font-family:'Liberation Sans',sans-serif;font-weight:400;letter-spacing:0.3px;-webkit-text-stroke:0.25px #0a0a0a;">⌘+</div>
<div class="t" style="left:464px;top:246.80px;font-size:14px;line-height:14px;color:#0a0a0a;font-family:'Liberation Sans',sans-serif;font-weight:400;letter-spacing:0.1px;-webkit-text-stroke:0.25px #0a0a0a;">Zoom Out</div>
<div class="t" style="right:1880.7px;top:246.80px;font-size:14px;line-height:14px;color:#0a0a0a;font-family:'Liberation Sans',sans-serif;font-weight:400;letter-spacing:0.3px;-webkit-text-stroke:0.25px #0a0a0a;">⌘–</div>
<div class="t" style="left:464px;top:265.80px;font-size:14px;line-height:14px;color:#0a0a0a;font-family:'Liberation Sans',sans-serif;font-weight:400;letter-spacing:0.1px;-webkit-text-stroke:0.25px #0a0a0a;">Fit Artboard in Window</div>
<div class="t" style="right:1880.7px;top:265.80px;font-size:14px;line-height:14px;color:#0a0a0a;font-family:'Liberation Sans',sans-serif;font-weight:400;letter-spacing:0.3px;-webkit-text-stroke:0.25px #0a0a0a;">⌘0</div>
<div class="a" style="left:443px;top:283px;width:246px;height:19px;background:#1f6fe0;"></div>
<div class="t" style="left:464px;top:284.80px;font-size:14px;line-height:14px;color:#ffffff;font-family:'Liberation Sans',sans-serif;font-weight:400;letter-spacing:0.1px;-webkit-text-stroke:0.25px #ffffff;">Fit All in Window</div>
<div class="t" style="right:1880.7px;top:284.80px;font-size:14px;line-height:14px;color:#ffffff;font-family:'Liberation Sans',sans-serif;font-weight:400;letter-spacing:0.3px;-webkit-text-stroke:0.25px #ffffff;">⌥⌘0</div>
<div class="t" style="left:464px;top:303.80px;font-size:14px;line-height:14px;color:#0a0a0a;font-family:'Liberation Sans',sans-serif;font-weight:400;letter-spacing:0.1px;-webkit-text-stroke:0.25px #0a0a0a;">Actual Size</div>
<div class="t" style="right:1880.7px;top:303.80px;font-size:14px;line-height:14px;color:#0a0a0a;font-family:'Liberation Sans',sans-serif;font-weight:400;letter-spacing:0.3px;-webkit-text-stroke:0.25px #0a0a0a;">⌘1</div>
<div class="t" style="left:464px;top:322.80px;font-size:14px;line-height:14px;color:#0a0a0a;font-family:'Liberation Sans',sans-serif;font-weight:400;letter-spacing:0.1px;-webkit-text-stroke:0.25px #0a0a0a;">Hide Edges</div>
<div class="t" style="right:1880.7px;top:322.80px;font-size:14px;line-height:14px;color:#0a0a0a;font-family:'Liberation Sans',sans-serif;font-weight:400;letter-spacing:0.3px;-webkit-text-stroke:0.25px #0a0a0a;">⌘H</div>
<div class="a" style="left:443px;top:345px;width:246px;height:1.5px;background:#a5a5a7;"></div>
<div class="t" style="left:464px;top:353.80px;font-size:14px;line-height:14px;color:#0a0a0a;font-family:'Liberation Sans',sans-serif;font-weight:400;letter-spacing:0.1px;-webkit-text-stroke:0.25px #0a0a0a;">Show Slices</div>
<div class="t" style="left:464px;top:372.80px;font-size:14px;line-height:14px;color:#0a0a0a;font-family:'Liberation Sans',sans-serif;font-weight:400;letter-spacing:0.1px;-webkit-text-stroke:0.25px #0a0a0a;">Lock Slices</div>
<div class="t" style="left:464px;top:391.80px;font-size:14px;line-height:14px;color:#0a0a0a;font-family:'Liberation Sans',sans-serif;font-weight:400;letter-spacing:0.1px;-webkit-text-stroke:0.25px #0a0a0a;">Hide Artboards</div>
<div class="t" style="right:1880.7px;top:391.80px;font-size:14px;line-height:14px;color:#0a0a0a;font-family:'Liberation Sans',sans-serif;font-weight:400;letter-spacing:0.3px;-webkit-text-stroke:0.25px #0a0a0a;"><svg style="position:static;display:inline-block;vertical-align:-1px;margin-right:2px" width="11" height="12" viewBox="0 0 11 12"><path d="M5.5 1 L10.2 6.2 H7.6 V11 H3.4 V6.2 H0.8 Z" fill="none" stroke="#0a0a0a" stroke-width="1.2" stroke-linejoin="round"/></svg>⌘H</div>
<div class="t" style="left:464px;top:410.80px;font-size:14px;line-height:14px;color:#0a0a0a;font-family:'Liberation Sans',sans-serif;font-weight:400;letter-spacing:0.1px;-webkit-text-stroke:0.25px #0a0a0a;">Show Print Tiling</div>
<div class="a" style="left:443px;top:433px;width:246px;height:1.5px;background:#a5a5a7;"></div>
<div class="t" style="left:464px;top:441.80px;font-size:14px;line-height:14px;color:#8c8c8e;font-family:'Liberation Sans',sans-serif;font-weight:400;letter-spacing:0.1px;-webkit-text-stroke:0.25px #8c8c8e;">Hide Template</div>
<div class="t" style="right:1880.7px;top:441.80px;font-size:14px;line-height:14px;color:#8c8c8e;font-family:'Liberation Sans',sans-serif;font-weight:400;letter-spacing:0.3px;-webkit-text-stroke:0.25px #8c8c8e;"><svg style="position:static;display:inline-block;vertical-align:-1px;margin-right:2px" width="11" height="12" viewBox="0 0 11 12"><path d="M5.5 1 L10.2 6.2 H7.6 V11 H3.4 V6.2 H0.8 Z" fill="none" stroke="#8c8c8e" stroke-width="1.2" stroke-linejoin="round"/></svg>⌘W</div>
<div class="t" style="left:464px;top:460.80px;font-size:14px;line-height:14px;color:#0a0a0a;font-family:'Liberation Sans',sans-serif;font-weight:400;letter-spacing:0.1px;-webkit-text-stroke:0.25px #0a0a0a;">Hide Bounding Box</div>
<div class="t" style="right:1880.7px;top:460.80px;font-size:14px;line-height:14px;color:#0a0a0a;font-family:'Liberation Sans',sans-serif;font-weight:400;letter-spacing:0.3px;-webkit-text-stroke:0.25px #0a0a0a;"><svg style="position:static;display:inline-block;vertical-align:-1px;margin-right:2px" width="11" height="12" viewBox="0 0 11 12"><path d="M5.5 1 L10.2 6.2 H7.6 V11 H3.4 V6.2 H0.8 Z" fill="none" stroke="#0a0a0a" stroke-width="1.2" stroke-linejoin="round"/></svg>⌘B</div>
<div class="t" style="left:464px;top:479.80px;font-size:14px;line-height:14px;color:#0a0a0a;font-family:'Liberation Sans',sans-serif;font-weight:400;letter-spacing:0.1px;-webkit-text-stroke:0.25px #0a0a0a;">Show Transparency Grid</div>
<div class="t" style="right:1880.7px;top:479.80px;font-size:14px;line-height:14px;color:#0a0a0a;font-family:'Liberation Sans',sans-serif;font-weight:400;letter-spacing:0.3px;-webkit-text-stroke:0.25px #0a0a0a;"><svg style="position:static;display:inline-block;vertical-align:-1px;margin-right:2px" width="11" height="12" viewBox="0 0 11 12"><path d="M5.5 1 L10.2 6.2 H7.6 V11 H3.4 V6.2 H0.8 Z" fill="none" stroke="#0a0a0a" stroke-width="1.2" stroke-linejoin="round"/></svg>⌘D</div>
<div class="a" style="left:443px;top:502px;width:246px;height:1.5px;background:#a5a5a7;"></div>
<div class="t" style="left:464px;top:510.80px;font-size:14px;line-height:14px;color:#0a0a0a;font-family:'Liberation Sans',sans-serif;font-weight:400;letter-spacing:0.1px;-webkit-text-stroke:0.25px #0a0a0a;">Rulers</div>
<svg style="left:668px;top:513.5px" width="9" height="10"><path d="M0 0 L9 5 L0 10Z" fill="#111"/></svg>
<div class="t" style="left:464px;top:529.80px;font-size:14px;line-height:14px;color:#0a0a0a;font-family:'Liberation Sans',sans-serif;font-weight:400;letter-spacing:0.1px;-webkit-text-stroke:0.25px #0a0a0a;">Hide Gradient Annotator</div>
<div class="t" style="right:1880.7px;top:529.80px;font-size:14px;line-height:14px;color:#0a0a0a;font-family:'Liberation Sans',sans-serif;font-weight:400;letter-spacing:0.3px;-webkit-text-stroke:0.25px #0a0a0a;">⌥⌘G</div>
<div class="t" style="left:464px;top:548.80px;font-size:14px;line-height:14px;color:#0a0a0a;font-family:'Liberation Sans',sans-serif;font-weight:400;letter-spacing:0.1px;-webkit-text-stroke:0.25px #0a0a0a;">Show Live Paint Gaps</div>
<div class="a" style="left:443px;top:571px;width:246px;height:1.5px;background:#a5a5a7;"></div>
<div class="t" style="left:464px;top:579.80px;font-size:14px;line-height:14px;color:#0a0a0a;font-family:'Liberation Sans',sans-serif;font-weight:400;letter-spacing:0.1px;-webkit-text-stroke:0.25px #0a0a0a;">Hide Corner Widget</div>
<div class="t" style="left:464px;top:598.80px;font-size:14px;line-height:14px;color:#0a0a0a;font-family:'Liberation Sans',sans-serif;font-weight:400;letter-spacing:0.1px;-webkit-text-stroke:0.25px #0a0a0a;">Hide Text Threads</div>
<div class="t" style="right:1880.7px;top:598.80px;font-size:14px;line-height:14px;color:#0a0a0a;font-family:'Liberation Sans',sans-serif;font-weight:400;letter-spacing:0.3px;-webkit-text-stroke:0.25px #0a0a0a;"><svg style="position:static;display:inline-block;vertical-align:-1px;margin-right:2px" width="11" height="12" viewBox="0 0 11 12"><path d="M5.5 1 L10.2 6.2 H7.6 V11 H3.4 V6.2 H0.8 Z" fill="none" stroke="#0a0a0a" stroke-width="1.2" stroke-linejoin="round"/></svg>⌘Y</div>
<div class="t" style="left:464px;top:617.80px;font-size:14px;line-height:14px;color:#0a0a0a;font-family:'Liberation Sans',sans-serif;font-weight:400;letter-spacing:0.1px;-webkit-text-stroke:0.25px #0a0a0a;">Smart Guides</div>
<div class="t" style="left:448px;top:617.80px;font-size:14px;line-height:14px;color:#0a0a0a;font-family:'Liberation Sans',sans-serif;font-weight:700;letter-spacing:0px;">✓</div>
<div class="t" style="right:1880.7px;top:617.80px;font-size:14px;line-height:14px;color:#0a0a0a;font-family:'Liberation Sans',sans-serif;font-weight:400;letter-spacing:0.3px;-webkit-text-stroke:0.25px #0a0a0a;">⌘U</div>
<div class="a" style="left:443px;top:640px;width:246px;height:1.5px;background:#a5a5a7;"></div>
<div class="t" style="left:464px;top:648.80px;font-size:14px;line-height:14px;color:#0a0a0a;font-family:'Liberation Sans',sans-serif;font-weight:400;letter-spacing:0.1px;-webkit-text-stroke:0.25px #0a0a0a;">Perspective Grid</div>
<svg style="left:668px;top:651.5px" width="9" height="10"><path d="M0 0 L9 5 L0 10Z" fill="#111"/></svg>
<div class="a" style="left:443px;top:671px;width:246px;height:1.5px;background:#a5a5a7;"></div>
<div class="t" style="left:464px;top:679.80px;font-size:14px;line-height:14px;color:#0a0a0a;font-family:'Liberation Sans',sans-serif;font-weight:400;letter-spacing:0.1px;-webkit-text-stroke:0.25px #0a0a0a;">Guides</div>
<svg style="left:668px;top:682.5px" width="9" height="10"><path d="M0 0 L9 5 L0 10Z" fill="#111"/></svg>
<div class="a" style="left:443px;top:702px;width:246px;height:1.5px;background:#a5a5a7;"></div>
<div class="t" style="left:464px;top:710.80px;font-size:14px;line-height:14px;color:#0a0a0a;font-family:'Liberation Sans',sans-serif;font-weight:400;letter-spacing:0.1px;-webkit-text-stroke:0.25px #0a0a0a;">Show Grid</div>
<div class="t" style="right:1880.7px;top:710.80px;font-size:14px;line-height:14px;color:#0a0a0a;font-family:'Liberation Sans',sans-serif;font-weight:400;letter-spacing:0.3px;-webkit-text-stroke:0.25px #0a0a0a;">⌘'</div>
<div class="t" style="left:464px;top:729.80px;font-size:14px;line-height:14px;color:#0a0a0a;font-family:'Liberation Sans',sans-serif;font-weight:400;letter-spacing:0.1px;-webkit-text-stroke:0.25px #0a0a0a;">Snap to Grid</div>
<div class="t" style="right:1880.7px;top:729.80px;font-size:14px;line-height:14px;color:#0a0a0a;font-family:'Liberation Sans',sans-serif;font-weight:400;letter-spacing:0.3px;-webkit-text-stroke:0.25px #0a0a0a;"><svg style="position:static;display:inline-block;vertical-align:-1px;margin-right:2px" width="11" height="12" viewBox="0 0 11 12"><path d="M5.5 1 L10.2 6.2 H7.6 V11 H3.4 V6.2 H0.8 Z" fill="none" stroke="#0a0a0a" stroke-width="1.2" stroke-linejoin="round"/></svg>⌘'</div>
<div class="t" style="left:464px;top:748.80px;font-size:14px;line-height:14px;color:#0a0a0a;font-family:'Liberation Sans',sans-serif;font-weight:400;letter-spacing:0.1px;-webkit-text-stroke:0.25px #0a0a0a;">Snap to Pixel</div>
<div class="t" style="left:464px;top:767.80px;font-size:14px;line-height:14px;color:#0a0a0a;font-family:'Liberation Sans',sans-serif;font-weight:400;letter-spacing:0.1px;-webkit-text-stroke:0.25px #0a0a0a;">Snap to Point</div>
<div class="t" style="left:448px;top:767.80px;font-size:14px;line-height:14px;color:#0a0a0a;font-family:'Liberation Sans',sans-serif;font-weight:700;letter-spacing:0px;">✓</div>
<div class="t" style="right:1880.7px;top:767.80px;font-size:14px;line-height:14px;color:#0a0a0a;font-family:'Liberation Sans',sans-serif;font-weight:400;letter-spacing:0.3px;-webkit-text-stroke:0.25px #0a0a0a;">⌥⌘'</div>
<div class="a" style="left:443px;top:790px;width:246px;height:1.5px;background:#a5a5a7;"></div>
<div class="t" style="left:464px;top:798.80px;font-size:14px;line-height:14px;color:#0a0a0a;font-family:'Liberation Sans',sans-serif;font-weight:400;letter-spacing:0.1px;-webkit-text-stroke:0.25px #0a0a0a;">New View...</div>
<div class="t" style="left:464px;top:817.80px;font-size:14px;line-height:14px;color:#0a0a0a;font-family:'Liberation Sans',sans-serif;font-weight:400;letter-spacing:0.1px;-webkit-text-stroke:0.25px #0a0a0a;">Edit Views...</div>
</body></html>
